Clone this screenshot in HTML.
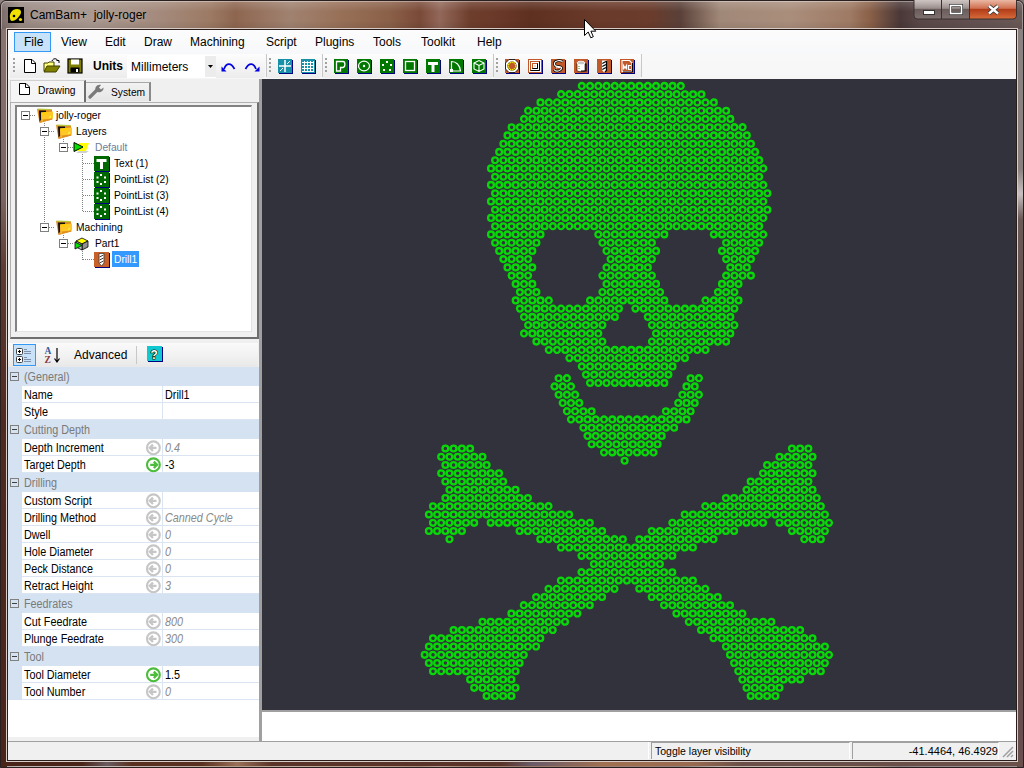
<!DOCTYPE html>
<html><head><meta charset="utf-8">
<style>
*{margin:0;padding:0;box-sizing:border-box}
html,body{width:1024px;height:768px;overflow:hidden;font-family:"Liberation Sans",sans-serif;background:#6b4a40}
.a{position:absolute}
.t{position:absolute;white-space:pre;color:#000}
.n{transform:scaleX(.89);transform-origin:0 0}
.n2{transform:scaleX(.9);transform-origin:0 0}
</style></head><body>
<!-- window frame / title bar background -->
<div class="a" style="left:0;top:0;width:1024px;height:768px;background:linear-gradient(90deg,#7a6a68 0px,#9a8a84 20px,#a89890 90px,#a48a7c 160px,#9c7a64 210px,#8e6650 235px,#a08270 290px,#987058 340px,#8a6048 390px,#7a4a38 420px,#92685a 440px,#6e3e2c 470px,#6a3828 500px,#5e3020 530px,#6a3a2a 600px,#6a3c2c 650px,#5a4038 680px,#a08878 720px,#aa8e7c 790px,#9e7a64 850px,#8a6048 870px,#4a3838 900px,#5a4848 920px,#6a5a58 1024px)"></div>
<div class="a" style="left:0;top:0;width:1024px;height:29px;background:linear-gradient(180deg,rgba(255,255,255,.18),rgba(255,255,255,0) 40%,rgba(0,0,0,0) 70%,rgba(0,0,0,.08))"></div>
<!-- outer frame edge -->
<div class="a" style="left:0;top:0;width:1024px;height:768px;border:1px solid #2a2020;border-radius:6px 6px 0 0"></div>
<div class="a" style="left:1px;top:1px;width:1022px;height:766px;border:1px solid rgba(255,255,255,.35);border-radius:5px 5px 0 0"></div>
<!-- side frames darker -->
<div class="a" style="left:1px;top:29px;width:6px;height:738px;background:linear-gradient(180deg,#8a7470 0px,#7a6460 170px,#5e3a30 240px,#4e2a20 400px,#4a2418 768px)"></div>
<div class="a" style="left:1017px;top:29px;width:6px;height:738px;background:linear-gradient(180deg,#8a8282 0px,#8a8080 140px,#c8c0c0 165px,#6a5a58 190px,#5a4444 400px,#6a5050 768px)"></div>
<div class="a" style="left:2px;top:760px;width:1020px;height:6px;background:linear-gradient(90deg,#4a2418 0px,#4a2418 80px,#6a5a60 105px,#5a3020 130px,#5a3020 200px,#9a7058 235px,#5a3428 270px,#5a3428 500px,#6a5a68 530px,#a07050 600px,#9a6a50 690px,#6a5048 740px,#6a5048 1024px)"></div>
<!-- client inner border -->
<div class="a" style="left:6px;top:28px;width:1012px;height:734px;border:1px solid #d8ccc8"></div>
<div class="a" style="left:7px;top:29px;width:1010px;height:732px;border:1px solid #2a1c18"></div>

<!-- title -->
<div class="a" style="left:8px;top:7px;width:16px;height:16px;background:#000">
 <svg width="16" height="16" viewBox="0 0 16 16"><path d="M2 11 C1 7 4 2 9 2 C13 2 14 5 12 8 C10 11 7 14 4 14 C3 14 2 13 2 11Z" fill="#f0e000"/><circle cx="6" cy="9" r="1.3" fill="#000"/><circle cx="12.5" cy="12.5" r="1.6" fill="#f0e000"/></svg>
</div>
<div class="t" style="left:30px;top:8px;font-size:12px;color:#000;text-shadow:0 0 6px rgba(255,255,255,.35)">CamBam+  jolly-roger</div>

<!-- window buttons -->
<svg class="a" style="left:913px;top:0" width="105" height="21">
 <defs>
  <linearGradient id="gb" x1="0" y1="0" x2="0" y2="1"><stop offset="0" stop-color="#cfc6c4"/><stop offset=".45" stop-color="#9a8e8c"/><stop offset=".5" stop-color="#6a5c5a"/><stop offset="1" stop-color="#7e706e"/></linearGradient>
  <linearGradient id="gc" x1="0" y1="0" x2="0" y2="1"><stop offset="0" stop-color="#eab8a4"/><stop offset=".45" stop-color="#d07050"/><stop offset=".5" stop-color="#b03c18"/><stop offset="1" stop-color="#d86a38"/></linearGradient>
 </defs>
 <path d="M0.5 0V15A4.5 4.5 0 0 0 5 19.5H99.5A4.5 4.5 0 0 0 104 15V0Z" fill="#3a3030"/>
 <path d="M1.5 0V15A3.5 3.5 0 0 0 5 18.5H28V0Z" fill="url(#gb)"/>
 <rect x="29" y="0" width="27" height="18.5" fill="url(#gb)"/>
 <path d="M57 0V18.5H99.5A3.5 3.5 0 0 0 103 15V0Z" fill="url(#gc)"/>
 <rect x="10.5" y="10.5" width="11" height="4" fill="#fff" stroke="#333"/>
 <rect x="37.5" y="5.5" width="11" height="8" fill="none" stroke="#333" stroke-width="3"/>
 <rect x="37.5" y="5.5" width="11" height="8" fill="none" stroke="#fff" stroke-width="1.6"/>
 <path d="M76 6L85 13.5M85 6L76 13.5" stroke="#333" stroke-width="4.2"/>
 <path d="M76 6L85 13.5M85 6L76 13.5" stroke="#fff" stroke-width="2.4"/>
</svg>

<!-- client area -->
<div class="a" style="left:8px;top:30px;width:1008px;height:730px;background:#f0f0f0"></div>
<!-- menu bar -->
<div class="a" style="left:8px;top:30px;width:1008px;height:24px;background:linear-gradient(180deg,#fcfcfd,#f7f8f9)"></div>
<div class="a" style="left:14px;top:32px;width:37px;height:20px;background:#c8e2fa;border:1px solid #3399f5"></div>
<div class="t" style="left:24px;top:35px;font-size:12px">File</div>
<div class="t" style="left:61px;top:35px;font-size:12px">View</div>
<div class="t" style="left:105px;top:35px;font-size:12px">Edit</div>
<div class="t" style="left:144px;top:35px;font-size:12px">Draw</div>
<div class="t" style="left:190px;top:35px;font-size:12px">Machining</div>
<div class="t" style="left:266px;top:35px;font-size:12px">Script</div>
<div class="t" style="left:315px;top:35px;font-size:12px">Plugins</div>
<div class="t" style="left:373px;top:35px;font-size:12px">Tools</div>
<div class="t" style="left:421px;top:35px;font-size:12px">Toolkit</div>
<div class="t" style="left:477px;top:35px;font-size:12px">Help</div>

<!-- TOOLBAR -->
<div class="a" style="left:8px;top:54px;width:1008px;height:25px;background:linear-gradient(180deg,#f8f8f9,#f6f6f7)"></div>
<!-- segment bgs -->
<div class="a" style="left:10px;top:54px;width:255px;height:24px;background:linear-gradient(180deg,#fdfdfd,#f3f3f3 60%,#ececec);border-radius:0 3px 3px 0"></div>
<div class="a" style="left:266px;top:54px;width:1px;height:23px;background:#c8c8c8"></div>
<div class="a" style="left:267px;top:54px;width:54px;height:24px;background:linear-gradient(180deg,#fdfdfd,#f3f3f3 60%,#ececec);border-radius:0 3px 3px 0"></div>
<div class="a" style="left:322px;top:54px;width:1px;height:23px;background:#c8c8c8"></div>
<div class="a" style="left:323px;top:54px;width:170px;height:24px;background:linear-gradient(180deg,#fdfdfd,#f3f3f3 60%,#ececec);border-radius:0 3px 3px 0"></div>
<div class="a" style="left:493px;top:54px;width:1px;height:23px;background:#c8c8c8"></div>
<div class="a" style="left:494px;top:54px;width:147px;height:24px;background:linear-gradient(180deg,#fdfdfd,#f3f3f3 60%,#ececec);border-radius:0 3px 3px 0"></div>
<div class="a" style="left:641px;top:54px;width:1px;height:23px;background:#c8c8c8"></div>
<!-- grips -->
<svg class="a" style="left:12px;top:57px" width="4" height="16"><g fill="#a0a0a0"><rect x="1" y="1" width="2" height="2"/><rect x="1" y="5" width="2" height="2"/><rect x="1" y="9" width="2" height="2"/><rect x="1" y="13" width="2" height="2"/></g></svg>
<svg class="a" style="left:268px;top:57px" width="4" height="16"><g fill="#a0a0a0"><rect x="1" y="1" width="2" height="2"/><rect x="1" y="5" width="2" height="2"/><rect x="1" y="9" width="2" height="2"/><rect x="1" y="13" width="2" height="2"/></g></svg>
<svg class="a" style="left:324px;top:57px" width="4" height="16"><g fill="#a0a0a0"><rect x="1" y="1" width="2" height="2"/><rect x="1" y="5" width="2" height="2"/><rect x="1" y="9" width="2" height="2"/><rect x="1" y="13" width="2" height="2"/></g></svg>
<svg class="a" style="left:495px;top:57px" width="4" height="16"><g fill="#a0a0a0"><rect x="1" y="1" width="2" height="2"/><rect x="1" y="5" width="2" height="2"/><rect x="1" y="9" width="2" height="2"/><rect x="1" y="13" width="2" height="2"/></g></svg>
<!-- new -->
<svg class="a" style="left:23px;top:58px" width="16" height="16"><path d="M1.5 1.5H9L12.5 5V14.5H1.5Z" fill="#fff" stroke="#000"/><path d="M8.5 1.5V5.5H12.5" fill="none" stroke="#000"/></svg>
<!-- open -->
<svg class="a" style="left:43px;top:57px" width="18" height="17"><path d="M1 6H5L6 5H11V14H1Z" fill="#ffff80" stroke="#404000"/><path d="M1 15L4 9H17L13 15Z" fill="#808000" stroke="#404000"/><path d="M9 4C10 1 14 1 15 4" fill="none" stroke="#000"/><path d="M13.5 3.5H16V6" fill="none" stroke="#000"/></svg>
<!-- save -->
<svg class="a" style="left:67px;top:58px" width="16" height="16"><rect x="1" y="1" width="14" height="14" fill="#808000" stroke="#000" stroke-width="1.2"/><rect x="4" y="1.5" width="8" height="5" fill="#fff"/><rect x="3.5" y="9.5" width="9" height="5" fill="#000"/><rect x="9" y="11" width="2" height="3" fill="#fff"/></svg>
<div class="t" style="left:93px;top:59px;font-size:12px;font-weight:bold;color:#000">Units</div>
<!-- combo -->
<div class="a" style="left:127px;top:55px;width:89px;height:23px;background:#fff"></div>
<div class="a" style="left:205px;top:56px;width:11px;height:21px;background:#ececec"></div>
<svg class="a" style="left:207px;top:64px" width="8" height="5"><path d="M1 1H6L3.5 4Z" fill="#000"/></svg>
<div class="t" style="left:131px;top:60px;font-size:12px">Millimeters</div>
<!-- undo redo -->
<svg class="a" style="left:221px;top:60px" width="16" height="12"><path d="M3 9C5.5 2.5 10 2.5 13.5 9" fill="none" stroke="#0000e0" stroke-width="1.7"/><path d="M0.5 6.5V11.5H5.5Z" fill="#0000e0"/></svg>
<svg class="a" style="left:244px;top:60px" width="16" height="12"><path d="M1.5 9C5 2.5 9.5 2.5 12 9" fill="none" stroke="#0000e0" stroke-width="1.7"/><path d="M15.5 6.5V11.5H10.5Z" fill="#0000e0"/></svg>
<!-- snap -->
<svg class="a" style="left:277px;top:58px" width="17" height="17"><rect x="2" y="2" width="14" height="14" fill="#000080"/><rect x="1" y="1" width="14" height="14" fill="#1890a8"/><path d="M8 2V14M2 8H14" stroke="#fff" stroke-width="1.5"/><path d="M10 6L13 3M6 10L3 13" stroke="#fff"/></svg>
<svg class="a" style="left:300px;top:58px" width="17" height="17"><rect x="2" y="2" width="14" height="14" fill="#000080"/><rect x="1" y="1" width="14" height="14" fill="#1890a8"/><path d="M4.5 3V14M7.5 3V14M10.5 3V14M13.5 3V14M2 4.5H14M2 7.5H14M2 10.5H14M2 13.5H14" stroke="#fff"/></svg>
<!-- green icons -->
<svg class="a" style="left:333px;top:58px" width="17" height="17"><rect x="2" y="2" width="14" height="14" fill="#000080"/><rect x="1" y="1" width="14" height="14" fill="#007800"/><path d="M3.5 3.5H10C12.5 3.5 12.5 9 10 9.5L7.5 9.5V13H3.5Z" fill="none" stroke="#fff" stroke-width="1.3"/></svg>
<svg class="a" style="left:356px;top:58px" width="17" height="17"><rect x="2" y="2" width="14" height="14" fill="#000080"/><rect x="1" y="1" width="14" height="14" fill="#007800"/><ellipse cx="8" cy="8" rx="5.5" ry="4.8" fill="none" stroke="#fff" stroke-width="1.2"/><circle cx="8" cy="8" r="1.2" fill="#fff"/></svg>
<svg class="a" style="left:379px;top:58px" width="17" height="17"><rect x="2" y="2" width="14" height="14" fill="#000080"/><rect x="1" y="1" width="14" height="14" fill="#007800"/><g fill="#fff"><rect x="7" y="3" width="2" height="2"/><rect x="3" y="6" width="2" height="2"/><rect x="11" y="6" width="2" height="2"/><rect x="4" y="11" width="2" height="2"/><rect x="10" y="11" width="2" height="2"/></g></svg>
<svg class="a" style="left:402px;top:58px" width="17" height="17"><rect x="2" y="2" width="14" height="14" fill="#000080"/><rect x="1" y="1" width="14" height="14" fill="#007800"/><rect x="3.5" y="3.5" width="9" height="9" fill="none" stroke="#fff" stroke-width="1.3"/></svg>
<svg class="a" style="left:425px;top:58px" width="17" height="17"><rect x="2" y="2" width="14" height="14" fill="#000080"/><rect x="1" y="1" width="14" height="14" fill="#007800"/><path d="M3 4H13V7H9.5V14H6.5V7H3Z" fill="#fff"/></svg>
<svg class="a" style="left:448px;top:58px" width="17" height="17"><rect x="2" y="2" width="14" height="14" fill="#000080"/><rect x="1" y="1" width="14" height="14" fill="#007800"/><path d="M3.5 13V3.5C8 3.5 12 7 12.5 13Z" fill="none" stroke="#fff" stroke-width="1.2"/><rect x="2" y="11" width="3" height="3" fill="#fff"/></svg>
<svg class="a" style="left:471px;top:58px" width="17" height="17"><rect x="2" y="2" width="14" height="14" fill="#000080"/><rect x="1" y="1" width="14" height="14" fill="#007800"/><path d="M3 5L8 2.5L13 5V11L8 13.5L3 11ZM3 5L8 7.5L13 5M8 7.5V13.5" fill="none" stroke="#fff" stroke-width="1.1"/></svg>
<!-- orange icons -->
<svg class="a" style="left:504px;top:58px" width="17" height="17"><rect x="2" y="2" width="14" height="14" fill="#000080"/><rect x="1" y="1" width="14" height="14" fill="#c0582a"/><path d="M5 1.5H11L14.5 5V11L11 14.5H5L1.5 11V5Z" fill="#fff" stroke="#000" stroke-width=".8"/><circle cx="8" cy="8" r="4.6" fill="#000"/><circle cx="8" cy="8" r="3.8" fill="#c0582a" stroke="#f8f000" stroke-width="1.3" stroke-dasharray="1.6 .5"/></svg>
<svg class="a" style="left:527px;top:58px" width="17" height="17"><rect x="2" y="2" width="14" height="14" fill="#000080"/><rect x="1" y="1" width="14" height="14" fill="#c0582a"/><rect x="2" y="2" width="12" height="12" fill="#fff"/><rect x="3.5" y="3.5" width="9" height="9" fill="none" stroke="#c0582a"/><path d="M3.5 12.5H12.5V3.5" fill="none" stroke="#000"/><rect x="5.5" y="5.5" width="5" height="5" fill="none" stroke="#c0582a"/><path d="M5.5 10.5H10.5V5.5" fill="none" stroke="#000"/><rect x="7.5" y="7.5" width="1" height="1" fill="#c0582a"/></svg>
<svg class="a" style="left:550px;top:58px" width="17" height="17"><rect x="2" y="2" width="14" height="14" fill="#000080"/><rect x="1" y="1" width="14" height="14" fill="#c0582a"/><path d="M12.5 3.5C10 2 5 2.5 4.5 5C4 8 6 8.5 9 8.5C12 8.5 12.5 11 9.5 12.5C7 13.5 5 13 4 11.5" fill="none" stroke="#000" stroke-width="2.6"/><path d="M12.5 3.5C10 2 5 2.5 4.5 5C4 8 6 8.5 9 8.5C12 8.5 12.5 11 9.5 12.5C7 13.5 5 13 4 11.5" fill="none" stroke="#fff" stroke-width="1.2"/><path d="M6 10C8 9 10 9.5 12 10" fill="none" stroke="#fff" stroke-width="1"/></svg>
<svg class="a" style="left:573px;top:58px" width="17" height="17"><rect x="2" y="2" width="14" height="14" fill="#000080"/><rect x="1" y="1" width="14" height="14" fill="#c0582a"/><path d="M4 5V12.5C4 14 12 14 12 12.5V5" fill="#fff" stroke="#000" stroke-width=".6"/><path d="M12 6H13V13H8" fill="none" stroke="#000" stroke-width="1.2"/><ellipse cx="8" cy="5" rx="4" ry="1.8" fill="#c8c8c8" stroke="#fff" stroke-width=".8"/><path d="M5 8.5H7M5 10.5H7" stroke="#a0c080" stroke-width="1"/></svg>
<svg class="a" style="left:596px;top:58px" width="17" height="17"><rect x="2" y="2" width="14" height="14" fill="#000080"/><rect x="1" y="1" width="14" height="14" fill="#c0582a"/><path d="M6 2.5H10.5V12L8.2 14.5L6 12Z" fill="#fff"/><path d="M10.5 3V12.5L9 14" fill="none" stroke="#000" stroke-width="1.2"/><path d="M6.3 5.5L10 3.5M6.3 8.5L10 6.5M6.3 11.5L10 9.5" stroke="#000" stroke-width="1.2"/></svg>
<svg class="a" style="left:619px;top:58px" width="17" height="17"><rect x="2" y="2" width="14" height="14" fill="#000080"/><rect x="1" y="1" width="14" height="14" fill="#c0582a"/><path d="M3 2.5H10.5L13 5V13.5H3Z" fill="#c0582a" stroke="#fff" stroke-width="1.1"/><path d="M13.5 5V14H4" fill="none" stroke="#000" stroke-width="1"/><path d="M4.5 11.5V7.5L6 10L7.5 7.5V11.5M12 7.5H9.5V11.5H12" fill="none" stroke="#fff" stroke-width="1.2"/></svg>


<!-- left panel -->
<!-- tabs -->
<div class="a" style="left:8px;top:79px;width:251px;height:263px;background:#f0f0f0"></div>
<div class="a" style="left:85px;top:82px;width:66px;height:19px;background:linear-gradient(180deg,#f2f2f2,#e6e6e6);border:1px solid #a8a8a8;border-bottom:none;border-right:2px solid #8a8a8a"></div>
<div class="a" style="left:10px;top:80px;width:76px;height:23px;background:#f5f5f5;border:1px solid #d0d0d0;border-bottom:none;border-right:2px solid #6e6e6e"></div>
<svg class="a" style="left:18px;top:82px" width="13" height="14"><path d="M1.5 1.5H8L11.5 5V12.5H1.5Z" fill="#fff" stroke="#000"/><path d="M7.5 1.5V5.5H11.5" fill="none" stroke="#000"/></svg>
<div class="t n" style="left:38px;top:84px;font-size:11.5px;color:#000">Drawing</div>
<svg class="a" style="left:88px;top:83px" width="18" height="16"><path d="M2 14L9 7" stroke="#7a7a7a" stroke-width="3.2" stroke-linecap="round"/><path d="M8 8C6 5 9 1 13 2L11 4.5L13 6.5L15.5 4.5C16 8 12 10 9.5 9" fill="#7a7a7a"/></svg>
<div class="t n" style="left:111px;top:86px;font-size:11.5px;color:#000">System</div>
<!-- tab page border -->
<div class="a" style="left:10px;top:102px;width:249px;height:237px;border:1px solid #b0b0b0;border-right:2px solid #6e6e6e;border-bottom:2px solid #6e6e6e;background:#f0f0f0"></div>
<!-- tree box -->
<div class="a" style="left:15px;top:105px;width:237px;height:227px;background:#fff;border-top:2px solid #828282;border-left:2px solid #828282;border-right:1px solid #e3e3e3;border-bottom:1px solid #e3e3e3"></div>
<!-- dotted lines -->
<svg class="a" style="left:17px;top:106px" width="160" height="170">
 <g stroke="#808080" stroke-dasharray="1 1" stroke-width="1" fill="none">
  <path d="M13 9.5H19"/>
  <path d="M27.5 17V119"/>
  <path d="M32 25.5H38"/><path d="M32 121.5H38"/>
  <path d="M46.5 33V38"/><path d="M46.5 129V134"/>
  <path d="M51 41.5H56"/><path d="M51 137.5H56"/>
  <path d="M65.5 48V105"/><path d="M65.5 145V154"/>
  <path d="M66 57.5H77"/><path d="M66 73.5H77"/><path d="M66 89.5H77"/><path d="M66 105.5H77"/><path d="M66 153.5H77"/>
 </g>
</svg>
<!-- expander boxes -->
<svg class="a" style="left:21px;top:111px" width="9" height="9"><rect x=".5" y=".5" width="8" height="8" fill="#fff" stroke="#808080"/><path d="M2 4.5H7" stroke="#000"/></svg>
<svg class="a" style="left:40px;top:127px" width="9" height="9"><rect x=".5" y=".5" width="8" height="8" fill="#fff" stroke="#808080"/><path d="M2 4.5H7" stroke="#000"/></svg>
<svg class="a" style="left:59px;top:143px" width="9" height="9"><rect x=".5" y=".5" width="8" height="8" fill="#fff" stroke="#808080"/><path d="M2 4.5H7" stroke="#000"/></svg>
<svg class="a" style="left:40px;top:223px" width="9" height="9"><rect x=".5" y=".5" width="8" height="8" fill="#fff" stroke="#808080"/><path d="M2 4.5H7" stroke="#000"/></svg>
<svg class="a" style="left:59px;top:239px" width="9" height="9"><rect x=".5" y=".5" width="8" height="8" fill="#fff" stroke="#808080"/><path d="M2 4.5H7" stroke="#000"/></svg>
<!-- folder icons -->
<svg class="a" style="left:36px;top:107px" width="17" height="16"><path d="M1 2L16 2.5V12.5L3.5 16Z" fill="#e08a20"/><path d="M1.5 2.2L15.5 2.6" stroke="#b8c840" stroke-width="1.2"/><path d="M3 3.5H10V5L5 5.5V13.5L3.5 14.5Z" fill="#101010"/><path d="M5 5.5L17 4.5V11.5L5.5 13Z" fill="#ffc828"/><path d="M5.5 5.8L12 5.2V7L6 8Z" fill="#ffd000"/><path d="M4.5 13L16.5 11.5V12.5L4.5 15.5Z" fill="#e09020"/><path d="M13 10L15 8.8V10.5L13 10.8Z" fill="#ffff30"/><rect x="5.5" y="13.2" width="1.2" height="1.2" fill="#ffe040"/></svg>
<svg class="a" style="left:55px;top:123px" width="17" height="16"><path d="M1 2L16 2.5V12.5L3.5 16Z" fill="#e08a20"/><path d="M1.5 2.2L15.5 2.6" stroke="#b8c840" stroke-width="1.2"/><path d="M3 3.5H10V5L5 5.5V13.5L3.5 14.5Z" fill="#101010"/><path d="M5 5.5L17 4.5V11.5L5.5 13Z" fill="#ffc828"/><path d="M5.5 5.8L12 5.2V7L6 8Z" fill="#ffd000"/><path d="M4.5 13L16.5 11.5V12.5L4.5 15.5Z" fill="#e09020"/><path d="M13 10L15 8.8V10.5L13 10.8Z" fill="#ffff30"/><rect x="5.5" y="13.2" width="1.2" height="1.2" fill="#ffe040"/></svg>
<svg class="a" style="left:55px;top:219px" width="17" height="16"><path d="M1 2L16 2.5V12.5L3.5 16Z" fill="#e08a20"/><path d="M1.5 2.2L15.5 2.6" stroke="#b8c840" stroke-width="1.2"/><path d="M3 3.5H10V5L5 5.5V13.5L3.5 14.5Z" fill="#101010"/><path d="M5 5.5L17 4.5V11.5L5.5 13Z" fill="#ffc828"/><path d="M5.5 5.8L12 5.2V7L6 8Z" fill="#ffd000"/><path d="M4.5 13L16.5 11.5V12.5L4.5 15.5Z" fill="#e09020"/><path d="M13 10L15 8.8V10.5L13 10.8Z" fill="#ffff30"/><rect x="5.5" y="13.2" width="1.2" height="1.2" fill="#ffe040"/></svg>
<!-- default layer icon -->
<svg class="a" style="left:73px;top:141px" width="17" height="13"><path d="M3 12L6 10H16L13 12Z" fill="#d0d0d0"/><path d="M6 2H16L13 10H3Z" fill="#ffff00"/><path d="M1 1.5L10 6L1 10.5Z" fill="#00e000" stroke="#000" stroke-width="1"/></svg>
<!-- T icon -->
<svg class="a" style="left:94px;top:156px" width="16" height="16"><rect x="1" y="1" width="15" height="15" fill="#000080"/><rect x="0" y="0" width="15" height="15" fill="#006800"/><path d="M2.5 3H12.5V6H9V13H6V6H2.5Z" fill="#fff"/></svg>
<!-- pointlist icons -->
<svg class="a" style="left:94px;top:172px" width="16" height="16"><rect x="1" y="1" width="15" height="15" fill="#000080"/><rect x="0" y="0" width="15" height="15" fill="#006800"/><g fill="#fff"><rect x="6" y="2" width="2" height="2"/><rect x="2.5" y="4.5" width="2" height="2"/><rect x="10" y="4.5" width="2" height="2"/><rect x="2.5" y="9" width="2" height="2"/><rect x="10" y="9" width="2" height="2"/><rect x="6" y="11" width="2" height="2"/></g></svg>
<svg class="a" style="left:94px;top:188px" width="16" height="16"><rect x="1" y="1" width="15" height="15" fill="#000080"/><rect x="0" y="0" width="15" height="15" fill="#006800"/><g fill="#fff"><rect x="6" y="2" width="2" height="2"/><rect x="2.5" y="4.5" width="2" height="2"/><rect x="10" y="4.5" width="2" height="2"/><rect x="2.5" y="9" width="2" height="2"/><rect x="10" y="9" width="2" height="2"/><rect x="6" y="11" width="2" height="2"/></g></svg>
<svg class="a" style="left:94px;top:204px" width="16" height="16"><rect x="1" y="1" width="15" height="15" fill="#000080"/><rect x="0" y="0" width="15" height="15" fill="#006800"/><g fill="#fff"><rect x="6" y="2" width="2" height="2"/><rect x="2.5" y="4.5" width="2" height="2"/><rect x="10" y="4.5" width="2" height="2"/><rect x="2.5" y="9" width="2" height="2"/><rect x="10" y="9" width="2" height="2"/><rect x="6" y="11" width="2" height="2"/></g></svg>
<!-- part icon -->
<svg class="a" style="left:74px;top:236px" width="16" height="15"><path d="M2 5L8 2L14 5L8 8Z" fill="#ffff00" stroke="#000" stroke-width=".8"/><path d="M8 8L14 5V11L8 14Z" fill="#909090" stroke="#000" stroke-width=".8"/><path d="M2 5L8 8V14L2 11Z" fill="#c0c0c0" stroke="#000" stroke-width=".8"/><path d="M1 6L8 9.5L1 13Z" fill="#00e000" stroke="#000" stroke-width=".8"/></svg>
<!-- drill icon -->
<svg class="a" style="left:94px;top:252px" width="16" height="16"><rect x="1" y="1" width="15" height="15" fill="#000080"/><rect x="0" y="0" width="15" height="15" fill="#c8602a"/><path d="M5 1.5H10V11L7.5 14L5 11Z" fill="#fff" stroke="#404040" stroke-width=".8"/><path d="M5.5 5L9.5 3M5.5 8L9.5 6M5.5 11L9.5 9" stroke="#404040" stroke-width="1"/></svg>
<!-- tree labels -->
<div class="t n" style="left:56px;top:109px;font-size:11.5px">jolly-roger</div>
<div class="t n" style="left:76px;top:125px;font-size:11.5px">Layers</div>
<div class="t n" style="left:95px;top:141px;font-size:11.5px;color:#6d7d98">Default</div>
<div class="t n" style="left:114px;top:157px;font-size:11.5px">Text (1)</div>
<div class="t n" style="left:114px;top:173px;font-size:11.5px">PointList (2)</div>
<div class="t n" style="left:114px;top:189px;font-size:11.5px">PointList (3)</div>
<div class="t n" style="left:114px;top:205px;font-size:11.5px">PointList (4)</div>
<div class="t n" style="left:76px;top:221px;font-size:11.5px">Machining</div>
<div class="t n" style="left:95px;top:237px;font-size:11.5px">Part1</div>
<div class="a" style="left:112px;top:251px;width:27px;height:16px;background:#3399ff"></div>
<div class="t n" style="left:114px;top:253px;font-size:11.5px;color:#fff">Drill1</div>

<!-- splitter bg -->
<div class="a" style="left:8px;top:339px;width:251px;height:4px;background:#f0f0f0"></div>
<!-- properties toolbar -->
<div class="a" style="left:8px;top:343px;width:250px;height:24px;background:linear-gradient(180deg,#fafafa,#f2f2f2 50%,#e8e8e8)"></div>
<div class="a" style="left:13px;top:344px;width:23px;height:22px;background:#c8e2fa;border:1px solid #3399f5"></div>
<svg class="a" style="left:15px;top:346px" width="18" height="18"><g fill="#fff" stroke="#404040" stroke-width="1"><rect x="1.5" y="2.5" width="6" height="6" rx="1"/><rect x="1.5" y="10.5" width="6" height="6" rx="1"/></g><path d="M3 5.5H6M4.5 4V7M3 13.5H6M4.5 12V15" stroke="#000" stroke-width="1"/><g stroke="#8090a8" stroke-width="1"><path d="M9 3.5H12M9 5.5H16M9 7.5H16M9 11.5H12M9 13.5H16M9 15.5H16"/></g></svg>
<svg class="a" style="left:44px;top:345px" width="18" height="20"><text x="0.5" y="9" font-size="9.5" font-weight="bold" font-family="Liberation Serif" fill="#3a5a9a">A</text><text x="0.5" y="18" font-size="9.5" font-weight="bold" font-family="Liberation Serif" fill="#8a3a3a">Z</text><path d="M13 3V16M10.5 13.5L13 17L15.5 13.5" stroke="#000" fill="none" stroke-width="1.2"/></svg>
<div class="t" style="left:74px;top:348px;font-size:12px">Advanced</div>
<div class="a" style="left:136px;top:346px;width:1px;height:18px;background:#c8c8c8"></div>
<svg class="a" style="left:147px;top:346px" width="16" height="16"><rect x="1" y="1" width="15" height="15" fill="#000080"/><rect x="0" y="0" width="15" height="15" fill="#10c8d0"/><text x="3.5" y="12.5" font-size="12" font-weight="bold" font-family="Liberation Sans" fill="#fff" stroke="#000" stroke-width="1.2" paint-order="stroke">?</text></svg>

<!-- property grid -->
<div class="a" style="left:8px;top:367px;width:251px;height:370px;background:#fff"></div>
<div class="a" style="left:8px;top:367px;width:14px;height:333px;background:#d5e2f1"></div>
<div class="a" style="left:8px;top:367px;width:251px;height:19px;background:#d5e2f1"></div>
<svg class="a" style="left:10px;top:372px" width="9" height="9"><rect x=".5" y=".5" width="8" height="8" fill="none" stroke="#808080"/><path d="M2 4.5H7" stroke="#404040"/></svg>
<div class="t n2" style="left:24px;top:370px;font-size:12px;color:#7a7a7a">(General)</div>
<div class="a" style="left:22px;top:402px;width:237px;height:1px;background:#dbe5f2"></div>
<div class="a" style="left:162px;top:386px;width:1px;height:16px;background:#dbe5f2"></div>
<div class="t n2" style="left:24px;top:388px;font-size:12px">Name</div>
<div class="t n2" style="left:165px;top:388px;font-size:12px;color:#000">Drill1</div>
<div class="a" style="left:22px;top:419px;width:237px;height:1px;background:#dbe5f2"></div>
<div class="a" style="left:162px;top:403px;width:1px;height:16px;background:#dbe5f2"></div>
<div class="t n2" style="left:24px;top:405px;font-size:12px">Style</div>
<div class="a" style="left:8px;top:420px;width:251px;height:19px;background:#d5e2f1"></div>
<svg class="a" style="left:10px;top:425px" width="9" height="9"><rect x=".5" y=".5" width="8" height="8" fill="none" stroke="#808080"/><path d="M2 4.5H7" stroke="#404040"/></svg>
<div class="t n2" style="left:24px;top:423px;font-size:12px;color:#7a7a7a">Cutting Depth</div>
<div class="a" style="left:22px;top:455px;width:237px;height:1px;background:#dbe5f2"></div>
<div class="a" style="left:162px;top:439px;width:1px;height:16px;background:#dbe5f2"></div>
<div class="t n2" style="left:24px;top:441px;font-size:12px">Depth Increment</div>
<svg class="a" style="left:145px;top:439px" width="17" height="17"><circle cx="8.4" cy="8.8" r="6.4" fill="#fff" stroke="#c6c6c6" stroke-width="2.1"/><path d="M5 8.8H11.5M8 5.6L4.8 8.8L8 12" fill="none" stroke="#c6c6c6" stroke-width="2.3"/></svg>
<div class="t n2" style="left:165px;top:441px;font-size:12px;font-style:italic;color:#8a8a8a">0.4</div>
<div class="a" style="left:22px;top:472px;width:237px;height:1px;background:#dbe5f2"></div>
<div class="a" style="left:162px;top:456px;width:1px;height:16px;background:#dbe5f2"></div>
<div class="t n2" style="left:24px;top:458px;font-size:12px">Target Depth</div>
<svg class="a" style="left:145px;top:456px" width="17" height="17"><circle cx="8.4" cy="8.8" r="6.4" fill="#fff" stroke="#4cbc3c" stroke-width="2.1"/><path d="M5.2 8.8H11.6M8.8 5.6L12 8.8L8.8 12" fill="none" stroke="#4cbc3c" stroke-width="2.3"/></svg>
<div class="t n2" style="left:165px;top:458px;font-size:12px;color:#000">-3</div>
<div class="a" style="left:8px;top:473px;width:251px;height:19px;background:#d5e2f1"></div>
<svg class="a" style="left:10px;top:478px" width="9" height="9"><rect x=".5" y=".5" width="8" height="8" fill="none" stroke="#808080"/><path d="M2 4.5H7" stroke="#404040"/></svg>
<div class="t n2" style="left:24px;top:476px;font-size:12px;color:#7a7a7a">Drilling</div>
<div class="a" style="left:22px;top:508px;width:237px;height:1px;background:#dbe5f2"></div>
<div class="a" style="left:162px;top:492px;width:1px;height:16px;background:#dbe5f2"></div>
<div class="t n2" style="left:24px;top:494px;font-size:12px">Custom Script</div>
<svg class="a" style="left:145px;top:492px" width="17" height="17"><circle cx="8.4" cy="8.8" r="6.4" fill="#fff" stroke="#c6c6c6" stroke-width="2.1"/><path d="M5 8.8H11.5M8 5.6L4.8 8.8L8 12" fill="none" stroke="#c6c6c6" stroke-width="2.3"/></svg>
<div class="a" style="left:22px;top:525px;width:237px;height:1px;background:#dbe5f2"></div>
<div class="a" style="left:162px;top:509px;width:1px;height:16px;background:#dbe5f2"></div>
<div class="t n2" style="left:24px;top:511px;font-size:12px">Drilling Method</div>
<svg class="a" style="left:145px;top:509px" width="17" height="17"><circle cx="8.4" cy="8.8" r="6.4" fill="#fff" stroke="#c6c6c6" stroke-width="2.1"/><path d="M5 8.8H11.5M8 5.6L4.8 8.8L8 12" fill="none" stroke="#c6c6c6" stroke-width="2.3"/></svg>
<div class="t n2" style="left:165px;top:511px;font-size:12px;font-style:italic;color:#8a8a8a">Canned Cycle</div>
<div class="a" style="left:22px;top:542px;width:237px;height:1px;background:#dbe5f2"></div>
<div class="a" style="left:162px;top:526px;width:1px;height:16px;background:#dbe5f2"></div>
<div class="t n2" style="left:24px;top:528px;font-size:12px">Dwell</div>
<svg class="a" style="left:145px;top:526px" width="17" height="17"><circle cx="8.4" cy="8.8" r="6.4" fill="#fff" stroke="#c6c6c6" stroke-width="2.1"/><path d="M5 8.8H11.5M8 5.6L4.8 8.8L8 12" fill="none" stroke="#c6c6c6" stroke-width="2.3"/></svg>
<div class="t n2" style="left:165px;top:528px;font-size:12px;font-style:italic;color:#8a8a8a">0</div>
<div class="a" style="left:22px;top:559px;width:237px;height:1px;background:#dbe5f2"></div>
<div class="a" style="left:162px;top:543px;width:1px;height:16px;background:#dbe5f2"></div>
<div class="t n2" style="left:24px;top:545px;font-size:12px">Hole Diameter</div>
<svg class="a" style="left:145px;top:543px" width="17" height="17"><circle cx="8.4" cy="8.8" r="6.4" fill="#fff" stroke="#c6c6c6" stroke-width="2.1"/><path d="M5 8.8H11.5M8 5.6L4.8 8.8L8 12" fill="none" stroke="#c6c6c6" stroke-width="2.3"/></svg>
<div class="t n2" style="left:165px;top:545px;font-size:12px;font-style:italic;color:#8a8a8a">0</div>
<div class="a" style="left:22px;top:576px;width:237px;height:1px;background:#dbe5f2"></div>
<div class="a" style="left:162px;top:560px;width:1px;height:16px;background:#dbe5f2"></div>
<div class="t n2" style="left:24px;top:562px;font-size:12px">Peck Distance</div>
<svg class="a" style="left:145px;top:560px" width="17" height="17"><circle cx="8.4" cy="8.8" r="6.4" fill="#fff" stroke="#c6c6c6" stroke-width="2.1"/><path d="M5 8.8H11.5M8 5.6L4.8 8.8L8 12" fill="none" stroke="#c6c6c6" stroke-width="2.3"/></svg>
<div class="t n2" style="left:165px;top:562px;font-size:12px;font-style:italic;color:#8a8a8a">0</div>
<div class="a" style="left:22px;top:593px;width:237px;height:1px;background:#dbe5f2"></div>
<div class="a" style="left:162px;top:577px;width:1px;height:16px;background:#dbe5f2"></div>
<div class="t n2" style="left:24px;top:579px;font-size:12px">Retract Height</div>
<svg class="a" style="left:145px;top:577px" width="17" height="17"><circle cx="8.4" cy="8.8" r="6.4" fill="#fff" stroke="#c6c6c6" stroke-width="2.1"/><path d="M5 8.8H11.5M8 5.6L4.8 8.8L8 12" fill="none" stroke="#c6c6c6" stroke-width="2.3"/></svg>
<div class="t n2" style="left:165px;top:579px;font-size:12px;font-style:italic;color:#8a8a8a">3</div>
<div class="a" style="left:8px;top:594px;width:251px;height:19px;background:#d5e2f1"></div>
<svg class="a" style="left:10px;top:599px" width="9" height="9"><rect x=".5" y=".5" width="8" height="8" fill="none" stroke="#808080"/><path d="M2 4.5H7" stroke="#404040"/></svg>
<div class="t n2" style="left:24px;top:597px;font-size:12px;color:#7a7a7a">Feedrates</div>
<div class="a" style="left:22px;top:629px;width:237px;height:1px;background:#dbe5f2"></div>
<div class="a" style="left:162px;top:613px;width:1px;height:16px;background:#dbe5f2"></div>
<div class="t n2" style="left:24px;top:615px;font-size:12px">Cut Feedrate</div>
<svg class="a" style="left:145px;top:613px" width="17" height="17"><circle cx="8.4" cy="8.8" r="6.4" fill="#fff" stroke="#c6c6c6" stroke-width="2.1"/><path d="M5 8.8H11.5M8 5.6L4.8 8.8L8 12" fill="none" stroke="#c6c6c6" stroke-width="2.3"/></svg>
<div class="t n2" style="left:165px;top:615px;font-size:12px;font-style:italic;color:#8a8a8a">800</div>
<div class="a" style="left:22px;top:646px;width:237px;height:1px;background:#dbe5f2"></div>
<div class="a" style="left:162px;top:630px;width:1px;height:16px;background:#dbe5f2"></div>
<div class="t n2" style="left:24px;top:632px;font-size:12px">Plunge Feedrate</div>
<svg class="a" style="left:145px;top:630px" width="17" height="17"><circle cx="8.4" cy="8.8" r="6.4" fill="#fff" stroke="#c6c6c6" stroke-width="2.1"/><path d="M5 8.8H11.5M8 5.6L4.8 8.8L8 12" fill="none" stroke="#c6c6c6" stroke-width="2.3"/></svg>
<div class="t n2" style="left:165px;top:632px;font-size:12px;font-style:italic;color:#8a8a8a">300</div>
<div class="a" style="left:8px;top:647px;width:251px;height:19px;background:#d5e2f1"></div>
<svg class="a" style="left:10px;top:652px" width="9" height="9"><rect x=".5" y=".5" width="8" height="8" fill="none" stroke="#808080"/><path d="M2 4.5H7" stroke="#404040"/></svg>
<div class="t n2" style="left:24px;top:650px;font-size:12px;color:#7a7a7a">Tool</div>
<div class="a" style="left:22px;top:682px;width:237px;height:1px;background:#dbe5f2"></div>
<div class="a" style="left:162px;top:666px;width:1px;height:16px;background:#dbe5f2"></div>
<div class="t n2" style="left:24px;top:668px;font-size:12px">Tool Diameter</div>
<svg class="a" style="left:145px;top:666px" width="17" height="17"><circle cx="8.4" cy="8.8" r="6.4" fill="#fff" stroke="#4cbc3c" stroke-width="2.1"/><path d="M5.2 8.8H11.6M8.8 5.6L12 8.8L8.8 12" fill="none" stroke="#4cbc3c" stroke-width="2.3"/></svg>
<div class="t n2" style="left:165px;top:668px;font-size:12px;color:#000">1.5</div>
<div class="a" style="left:22px;top:699px;width:237px;height:1px;background:#dbe5f2"></div>
<div class="a" style="left:162px;top:683px;width:1px;height:16px;background:#dbe5f2"></div>
<div class="t n2" style="left:24px;top:685px;font-size:12px">Tool Number</div>
<svg class="a" style="left:145px;top:683px" width="17" height="17"><circle cx="8.4" cy="8.8" r="6.4" fill="#fff" stroke="#c6c6c6" stroke-width="2.1"/><path d="M5 8.8H11.5M8 5.6L4.8 8.8L8 12" fill="none" stroke="#c6c6c6" stroke-width="2.3"/></svg>
<div class="t n2" style="left:165px;top:685px;font-size:12px;font-style:italic;color:#8a8a8a">0</div>
<div class="a" style="left:8px;top:737px;width:251px;height:4px;background:#f0f0f0"></div>


<!-- drawing area -->
<div class="a" style="left:259px;top:79px;width:3px;height:663px;background:#a0a0a0"></div>
<div class="a" style="left:262px;top:79px;width:754px;height:631px;background:#32323c;overflow:hidden">
<svg class="a" style="left:0;top:0" width="754" height="631"><path d="M316.9 6.9a2.9 2.9 0 1 0 5.8 0a2.9 2.9 0 1 0 -5.8 0M325.1 6.9a2.9 2.9 0 1 0 5.8 0a2.9 2.9 0 1 0 -5.8 0M333.4 6.9a2.9 2.9 0 1 0 5.8 0a2.9 2.9 0 1 0 -5.8 0M341.6 6.9a2.9 2.9 0 1 0 5.8 0a2.9 2.9 0 1 0 -5.8 0M349.9 6.9a2.9 2.9 0 1 0 5.8 0a2.9 2.9 0 1 0 -5.8 0M358.1 6.9a2.9 2.9 0 1 0 5.8 0a2.9 2.9 0 1 0 -5.8 0M366.4 6.9a2.9 2.9 0 1 0 5.8 0a2.9 2.9 0 1 0 -5.8 0M374.6 6.9a2.9 2.9 0 1 0 5.8 0a2.9 2.9 0 1 0 -5.8 0M382.9 6.9a2.9 2.9 0 1 0 5.8 0a2.9 2.9 0 1 0 -5.8 0M391.1 6.9a2.9 2.9 0 1 0 5.8 0a2.9 2.9 0 1 0 -5.8 0M399.4 6.9a2.9 2.9 0 1 0 5.8 0a2.9 2.9 0 1 0 -5.8 0M407.6 6.9a2.9 2.9 0 1 0 5.8 0a2.9 2.9 0 1 0 -5.8 0M415.9 6.9a2.9 2.9 0 1 0 5.8 0a2.9 2.9 0 1 0 -5.8 0M296.2 15.2a2.9 2.9 0 1 0 5.8 0a2.9 2.9 0 1 0 -5.8 0M304.5 15.2a2.9 2.9 0 1 0 5.8 0a2.9 2.9 0 1 0 -5.8 0M312.7 15.2a2.9 2.9 0 1 0 5.8 0a2.9 2.9 0 1 0 -5.8 0M321.0 15.2a2.9 2.9 0 1 0 5.8 0a2.9 2.9 0 1 0 -5.8 0M329.2 15.2a2.9 2.9 0 1 0 5.8 0a2.9 2.9 0 1 0 -5.8 0M337.5 15.2a2.9 2.9 0 1 0 5.8 0a2.9 2.9 0 1 0 -5.8 0M345.7 15.2a2.9 2.9 0 1 0 5.8 0a2.9 2.9 0 1 0 -5.8 0M354.0 15.2a2.9 2.9 0 1 0 5.8 0a2.9 2.9 0 1 0 -5.8 0M362.2 15.2a2.9 2.9 0 1 0 5.8 0a2.9 2.9 0 1 0 -5.8 0M370.5 15.2a2.9 2.9 0 1 0 5.8 0a2.9 2.9 0 1 0 -5.8 0M378.7 15.2a2.9 2.9 0 1 0 5.8 0a2.9 2.9 0 1 0 -5.8 0M387.0 15.2a2.9 2.9 0 1 0 5.8 0a2.9 2.9 0 1 0 -5.8 0M395.2 15.2a2.9 2.9 0 1 0 5.8 0a2.9 2.9 0 1 0 -5.8 0M403.5 15.2a2.9 2.9 0 1 0 5.8 0a2.9 2.9 0 1 0 -5.8 0M411.7 15.2a2.9 2.9 0 1 0 5.8 0a2.9 2.9 0 1 0 -5.8 0M420.0 15.2a2.9 2.9 0 1 0 5.8 0a2.9 2.9 0 1 0 -5.8 0M428.2 15.2a2.9 2.9 0 1 0 5.8 0a2.9 2.9 0 1 0 -5.8 0M436.5 15.2a2.9 2.9 0 1 0 5.8 0a2.9 2.9 0 1 0 -5.8 0M275.6 23.4a2.9 2.9 0 1 0 5.8 0a2.9 2.9 0 1 0 -5.8 0M283.9 23.4a2.9 2.9 0 1 0 5.8 0a2.9 2.9 0 1 0 -5.8 0M292.1 23.4a2.9 2.9 0 1 0 5.8 0a2.9 2.9 0 1 0 -5.8 0M300.4 23.4a2.9 2.9 0 1 0 5.8 0a2.9 2.9 0 1 0 -5.8 0M308.6 23.4a2.9 2.9 0 1 0 5.8 0a2.9 2.9 0 1 0 -5.8 0M316.9 23.4a2.9 2.9 0 1 0 5.8 0a2.9 2.9 0 1 0 -5.8 0M325.1 23.4a2.9 2.9 0 1 0 5.8 0a2.9 2.9 0 1 0 -5.8 0M333.4 23.4a2.9 2.9 0 1 0 5.8 0a2.9 2.9 0 1 0 -5.8 0M341.6 23.4a2.9 2.9 0 1 0 5.8 0a2.9 2.9 0 1 0 -5.8 0M349.9 23.4a2.9 2.9 0 1 0 5.8 0a2.9 2.9 0 1 0 -5.8 0M358.1 23.4a2.9 2.9 0 1 0 5.8 0a2.9 2.9 0 1 0 -5.8 0M366.4 23.4a2.9 2.9 0 1 0 5.8 0a2.9 2.9 0 1 0 -5.8 0M374.6 23.4a2.9 2.9 0 1 0 5.8 0a2.9 2.9 0 1 0 -5.8 0M382.9 23.4a2.9 2.9 0 1 0 5.8 0a2.9 2.9 0 1 0 -5.8 0M391.1 23.4a2.9 2.9 0 1 0 5.8 0a2.9 2.9 0 1 0 -5.8 0M399.4 23.4a2.9 2.9 0 1 0 5.8 0a2.9 2.9 0 1 0 -5.8 0M407.6 23.4a2.9 2.9 0 1 0 5.8 0a2.9 2.9 0 1 0 -5.8 0M415.9 23.4a2.9 2.9 0 1 0 5.8 0a2.9 2.9 0 1 0 -5.8 0M424.1 23.4a2.9 2.9 0 1 0 5.8 0a2.9 2.9 0 1 0 -5.8 0M432.4 23.4a2.9 2.9 0 1 0 5.8 0a2.9 2.9 0 1 0 -5.8 0M440.6 23.4a2.9 2.9 0 1 0 5.8 0a2.9 2.9 0 1 0 -5.8 0M448.9 23.4a2.9 2.9 0 1 0 5.8 0a2.9 2.9 0 1 0 -5.8 0M263.2 31.7a2.9 2.9 0 1 0 5.8 0a2.9 2.9 0 1 0 -5.8 0M271.5 31.7a2.9 2.9 0 1 0 5.8 0a2.9 2.9 0 1 0 -5.8 0M279.7 31.7a2.9 2.9 0 1 0 5.8 0a2.9 2.9 0 1 0 -5.8 0M288.0 31.7a2.9 2.9 0 1 0 5.8 0a2.9 2.9 0 1 0 -5.8 0M296.2 31.7a2.9 2.9 0 1 0 5.8 0a2.9 2.9 0 1 0 -5.8 0M304.5 31.7a2.9 2.9 0 1 0 5.8 0a2.9 2.9 0 1 0 -5.8 0M312.7 31.7a2.9 2.9 0 1 0 5.8 0a2.9 2.9 0 1 0 -5.8 0M321.0 31.7a2.9 2.9 0 1 0 5.8 0a2.9 2.9 0 1 0 -5.8 0M329.2 31.7a2.9 2.9 0 1 0 5.8 0a2.9 2.9 0 1 0 -5.8 0M337.5 31.7a2.9 2.9 0 1 0 5.8 0a2.9 2.9 0 1 0 -5.8 0M345.7 31.7a2.9 2.9 0 1 0 5.8 0a2.9 2.9 0 1 0 -5.8 0M354.0 31.7a2.9 2.9 0 1 0 5.8 0a2.9 2.9 0 1 0 -5.8 0M362.2 31.7a2.9 2.9 0 1 0 5.8 0a2.9 2.9 0 1 0 -5.8 0M370.5 31.7a2.9 2.9 0 1 0 5.8 0a2.9 2.9 0 1 0 -5.8 0M378.7 31.7a2.9 2.9 0 1 0 5.8 0a2.9 2.9 0 1 0 -5.8 0M387.0 31.7a2.9 2.9 0 1 0 5.8 0a2.9 2.9 0 1 0 -5.8 0M395.2 31.7a2.9 2.9 0 1 0 5.8 0a2.9 2.9 0 1 0 -5.8 0M403.5 31.7a2.9 2.9 0 1 0 5.8 0a2.9 2.9 0 1 0 -5.8 0M411.7 31.7a2.9 2.9 0 1 0 5.8 0a2.9 2.9 0 1 0 -5.8 0M420.0 31.7a2.9 2.9 0 1 0 5.8 0a2.9 2.9 0 1 0 -5.8 0M428.2 31.7a2.9 2.9 0 1 0 5.8 0a2.9 2.9 0 1 0 -5.8 0M436.5 31.7a2.9 2.9 0 1 0 5.8 0a2.9 2.9 0 1 0 -5.8 0M444.7 31.7a2.9 2.9 0 1 0 5.8 0a2.9 2.9 0 1 0 -5.8 0M453.0 31.7a2.9 2.9 0 1 0 5.8 0a2.9 2.9 0 1 0 -5.8 0M461.2 31.7a2.9 2.9 0 1 0 5.8 0a2.9 2.9 0 1 0 -5.8 0M259.1 39.9a2.9 2.9 0 1 0 5.8 0a2.9 2.9 0 1 0 -5.8 0M267.4 39.9a2.9 2.9 0 1 0 5.8 0a2.9 2.9 0 1 0 -5.8 0M275.6 39.9a2.9 2.9 0 1 0 5.8 0a2.9 2.9 0 1 0 -5.8 0M283.9 39.9a2.9 2.9 0 1 0 5.8 0a2.9 2.9 0 1 0 -5.8 0M292.1 39.9a2.9 2.9 0 1 0 5.8 0a2.9 2.9 0 1 0 -5.8 0M300.4 39.9a2.9 2.9 0 1 0 5.8 0a2.9 2.9 0 1 0 -5.8 0M308.6 39.9a2.9 2.9 0 1 0 5.8 0a2.9 2.9 0 1 0 -5.8 0M316.9 39.9a2.9 2.9 0 1 0 5.8 0a2.9 2.9 0 1 0 -5.8 0M325.1 39.9a2.9 2.9 0 1 0 5.8 0a2.9 2.9 0 1 0 -5.8 0M333.4 39.9a2.9 2.9 0 1 0 5.8 0a2.9 2.9 0 1 0 -5.8 0M341.6 39.9a2.9 2.9 0 1 0 5.8 0a2.9 2.9 0 1 0 -5.8 0M349.9 39.9a2.9 2.9 0 1 0 5.8 0a2.9 2.9 0 1 0 -5.8 0M358.1 39.9a2.9 2.9 0 1 0 5.8 0a2.9 2.9 0 1 0 -5.8 0M366.4 39.9a2.9 2.9 0 1 0 5.8 0a2.9 2.9 0 1 0 -5.8 0M374.6 39.9a2.9 2.9 0 1 0 5.8 0a2.9 2.9 0 1 0 -5.8 0M382.9 39.9a2.9 2.9 0 1 0 5.8 0a2.9 2.9 0 1 0 -5.8 0M391.1 39.9a2.9 2.9 0 1 0 5.8 0a2.9 2.9 0 1 0 -5.8 0M399.4 39.9a2.9 2.9 0 1 0 5.8 0a2.9 2.9 0 1 0 -5.8 0M407.6 39.9a2.9 2.9 0 1 0 5.8 0a2.9 2.9 0 1 0 -5.8 0M415.9 39.9a2.9 2.9 0 1 0 5.8 0a2.9 2.9 0 1 0 -5.8 0M424.1 39.9a2.9 2.9 0 1 0 5.8 0a2.9 2.9 0 1 0 -5.8 0M432.4 39.9a2.9 2.9 0 1 0 5.8 0a2.9 2.9 0 1 0 -5.8 0M440.6 39.9a2.9 2.9 0 1 0 5.8 0a2.9 2.9 0 1 0 -5.8 0M448.9 39.9a2.9 2.9 0 1 0 5.8 0a2.9 2.9 0 1 0 -5.8 0M457.1 39.9a2.9 2.9 0 1 0 5.8 0a2.9 2.9 0 1 0 -5.8 0M465.4 39.9a2.9 2.9 0 1 0 5.8 0a2.9 2.9 0 1 0 -5.8 0M246.7 48.2a2.9 2.9 0 1 0 5.8 0a2.9 2.9 0 1 0 -5.8 0M255.0 48.2a2.9 2.9 0 1 0 5.8 0a2.9 2.9 0 1 0 -5.8 0M263.2 48.2a2.9 2.9 0 1 0 5.8 0a2.9 2.9 0 1 0 -5.8 0M271.5 48.2a2.9 2.9 0 1 0 5.8 0a2.9 2.9 0 1 0 -5.8 0M279.7 48.2a2.9 2.9 0 1 0 5.8 0a2.9 2.9 0 1 0 -5.8 0M288.0 48.2a2.9 2.9 0 1 0 5.8 0a2.9 2.9 0 1 0 -5.8 0M296.2 48.2a2.9 2.9 0 1 0 5.8 0a2.9 2.9 0 1 0 -5.8 0M304.5 48.2a2.9 2.9 0 1 0 5.8 0a2.9 2.9 0 1 0 -5.8 0M312.7 48.2a2.9 2.9 0 1 0 5.8 0a2.9 2.9 0 1 0 -5.8 0M321.0 48.2a2.9 2.9 0 1 0 5.8 0a2.9 2.9 0 1 0 -5.8 0M329.2 48.2a2.9 2.9 0 1 0 5.8 0a2.9 2.9 0 1 0 -5.8 0M337.5 48.2a2.9 2.9 0 1 0 5.8 0a2.9 2.9 0 1 0 -5.8 0M345.7 48.2a2.9 2.9 0 1 0 5.8 0a2.9 2.9 0 1 0 -5.8 0M354.0 48.2a2.9 2.9 0 1 0 5.8 0a2.9 2.9 0 1 0 -5.8 0M362.2 48.2a2.9 2.9 0 1 0 5.8 0a2.9 2.9 0 1 0 -5.8 0M370.5 48.2a2.9 2.9 0 1 0 5.8 0a2.9 2.9 0 1 0 -5.8 0M378.7 48.2a2.9 2.9 0 1 0 5.8 0a2.9 2.9 0 1 0 -5.8 0M387.0 48.2a2.9 2.9 0 1 0 5.8 0a2.9 2.9 0 1 0 -5.8 0M395.2 48.2a2.9 2.9 0 1 0 5.8 0a2.9 2.9 0 1 0 -5.8 0M403.5 48.2a2.9 2.9 0 1 0 5.8 0a2.9 2.9 0 1 0 -5.8 0M411.7 48.2a2.9 2.9 0 1 0 5.8 0a2.9 2.9 0 1 0 -5.8 0M420.0 48.2a2.9 2.9 0 1 0 5.8 0a2.9 2.9 0 1 0 -5.8 0M428.2 48.2a2.9 2.9 0 1 0 5.8 0a2.9 2.9 0 1 0 -5.8 0M436.5 48.2a2.9 2.9 0 1 0 5.8 0a2.9 2.9 0 1 0 -5.8 0M444.7 48.2a2.9 2.9 0 1 0 5.8 0a2.9 2.9 0 1 0 -5.8 0M453.0 48.2a2.9 2.9 0 1 0 5.8 0a2.9 2.9 0 1 0 -5.8 0M461.2 48.2a2.9 2.9 0 1 0 5.8 0a2.9 2.9 0 1 0 -5.8 0M469.5 48.2a2.9 2.9 0 1 0 5.8 0a2.9 2.9 0 1 0 -5.8 0M477.7 48.2a2.9 2.9 0 1 0 5.8 0a2.9 2.9 0 1 0 -5.8 0M242.6 56.4a2.9 2.9 0 1 0 5.8 0a2.9 2.9 0 1 0 -5.8 0M250.8 56.4a2.9 2.9 0 1 0 5.8 0a2.9 2.9 0 1 0 -5.8 0M259.1 56.4a2.9 2.9 0 1 0 5.8 0a2.9 2.9 0 1 0 -5.8 0M267.4 56.4a2.9 2.9 0 1 0 5.8 0a2.9 2.9 0 1 0 -5.8 0M275.6 56.4a2.9 2.9 0 1 0 5.8 0a2.9 2.9 0 1 0 -5.8 0M283.9 56.4a2.9 2.9 0 1 0 5.8 0a2.9 2.9 0 1 0 -5.8 0M292.1 56.4a2.9 2.9 0 1 0 5.8 0a2.9 2.9 0 1 0 -5.8 0M300.4 56.4a2.9 2.9 0 1 0 5.8 0a2.9 2.9 0 1 0 -5.8 0M308.6 56.4a2.9 2.9 0 1 0 5.8 0a2.9 2.9 0 1 0 -5.8 0M316.9 56.4a2.9 2.9 0 1 0 5.8 0a2.9 2.9 0 1 0 -5.8 0M325.1 56.4a2.9 2.9 0 1 0 5.8 0a2.9 2.9 0 1 0 -5.8 0M333.4 56.4a2.9 2.9 0 1 0 5.8 0a2.9 2.9 0 1 0 -5.8 0M341.6 56.4a2.9 2.9 0 1 0 5.8 0a2.9 2.9 0 1 0 -5.8 0M349.9 56.4a2.9 2.9 0 1 0 5.8 0a2.9 2.9 0 1 0 -5.8 0M358.1 56.4a2.9 2.9 0 1 0 5.8 0a2.9 2.9 0 1 0 -5.8 0M366.4 56.4a2.9 2.9 0 1 0 5.8 0a2.9 2.9 0 1 0 -5.8 0M374.6 56.4a2.9 2.9 0 1 0 5.8 0a2.9 2.9 0 1 0 -5.8 0M382.9 56.4a2.9 2.9 0 1 0 5.8 0a2.9 2.9 0 1 0 -5.8 0M391.1 56.4a2.9 2.9 0 1 0 5.8 0a2.9 2.9 0 1 0 -5.8 0M399.4 56.4a2.9 2.9 0 1 0 5.8 0a2.9 2.9 0 1 0 -5.8 0M407.6 56.4a2.9 2.9 0 1 0 5.8 0a2.9 2.9 0 1 0 -5.8 0M415.9 56.4a2.9 2.9 0 1 0 5.8 0a2.9 2.9 0 1 0 -5.8 0M424.1 56.4a2.9 2.9 0 1 0 5.8 0a2.9 2.9 0 1 0 -5.8 0M432.4 56.4a2.9 2.9 0 1 0 5.8 0a2.9 2.9 0 1 0 -5.8 0M440.6 56.4a2.9 2.9 0 1 0 5.8 0a2.9 2.9 0 1 0 -5.8 0M448.9 56.4a2.9 2.9 0 1 0 5.8 0a2.9 2.9 0 1 0 -5.8 0M457.1 56.4a2.9 2.9 0 1 0 5.8 0a2.9 2.9 0 1 0 -5.8 0M465.4 56.4a2.9 2.9 0 1 0 5.8 0a2.9 2.9 0 1 0 -5.8 0M473.6 56.4a2.9 2.9 0 1 0 5.8 0a2.9 2.9 0 1 0 -5.8 0M481.9 56.4a2.9 2.9 0 1 0 5.8 0a2.9 2.9 0 1 0 -5.8 0M238.5 64.7a2.9 2.9 0 1 0 5.8 0a2.9 2.9 0 1 0 -5.8 0M246.7 64.7a2.9 2.9 0 1 0 5.8 0a2.9 2.9 0 1 0 -5.8 0M255.0 64.7a2.9 2.9 0 1 0 5.8 0a2.9 2.9 0 1 0 -5.8 0M263.2 64.7a2.9 2.9 0 1 0 5.8 0a2.9 2.9 0 1 0 -5.8 0M271.5 64.7a2.9 2.9 0 1 0 5.8 0a2.9 2.9 0 1 0 -5.8 0M279.7 64.7a2.9 2.9 0 1 0 5.8 0a2.9 2.9 0 1 0 -5.8 0M288.0 64.7a2.9 2.9 0 1 0 5.8 0a2.9 2.9 0 1 0 -5.8 0M296.2 64.7a2.9 2.9 0 1 0 5.8 0a2.9 2.9 0 1 0 -5.8 0M304.5 64.7a2.9 2.9 0 1 0 5.8 0a2.9 2.9 0 1 0 -5.8 0M312.7 64.7a2.9 2.9 0 1 0 5.8 0a2.9 2.9 0 1 0 -5.8 0M321.0 64.7a2.9 2.9 0 1 0 5.8 0a2.9 2.9 0 1 0 -5.8 0M329.2 64.7a2.9 2.9 0 1 0 5.8 0a2.9 2.9 0 1 0 -5.8 0M337.5 64.7a2.9 2.9 0 1 0 5.8 0a2.9 2.9 0 1 0 -5.8 0M345.7 64.7a2.9 2.9 0 1 0 5.8 0a2.9 2.9 0 1 0 -5.8 0M354.0 64.7a2.9 2.9 0 1 0 5.8 0a2.9 2.9 0 1 0 -5.8 0M362.2 64.7a2.9 2.9 0 1 0 5.8 0a2.9 2.9 0 1 0 -5.8 0M370.5 64.7a2.9 2.9 0 1 0 5.8 0a2.9 2.9 0 1 0 -5.8 0M378.7 64.7a2.9 2.9 0 1 0 5.8 0a2.9 2.9 0 1 0 -5.8 0M387.0 64.7a2.9 2.9 0 1 0 5.8 0a2.9 2.9 0 1 0 -5.8 0M395.2 64.7a2.9 2.9 0 1 0 5.8 0a2.9 2.9 0 1 0 -5.8 0M403.5 64.7a2.9 2.9 0 1 0 5.8 0a2.9 2.9 0 1 0 -5.8 0M411.7 64.7a2.9 2.9 0 1 0 5.8 0a2.9 2.9 0 1 0 -5.8 0M420.0 64.7a2.9 2.9 0 1 0 5.8 0a2.9 2.9 0 1 0 -5.8 0M428.2 64.7a2.9 2.9 0 1 0 5.8 0a2.9 2.9 0 1 0 -5.8 0M436.5 64.7a2.9 2.9 0 1 0 5.8 0a2.9 2.9 0 1 0 -5.8 0M444.7 64.7a2.9 2.9 0 1 0 5.8 0a2.9 2.9 0 1 0 -5.8 0M453.0 64.7a2.9 2.9 0 1 0 5.8 0a2.9 2.9 0 1 0 -5.8 0M461.2 64.7a2.9 2.9 0 1 0 5.8 0a2.9 2.9 0 1 0 -5.8 0M469.5 64.7a2.9 2.9 0 1 0 5.8 0a2.9 2.9 0 1 0 -5.8 0M477.7 64.7a2.9 2.9 0 1 0 5.8 0a2.9 2.9 0 1 0 -5.8 0M486.0 64.7a2.9 2.9 0 1 0 5.8 0a2.9 2.9 0 1 0 -5.8 0M234.3 72.9a2.9 2.9 0 1 0 5.8 0a2.9 2.9 0 1 0 -5.8 0M242.6 72.9a2.9 2.9 0 1 0 5.8 0a2.9 2.9 0 1 0 -5.8 0M250.8 72.9a2.9 2.9 0 1 0 5.8 0a2.9 2.9 0 1 0 -5.8 0M259.1 72.9a2.9 2.9 0 1 0 5.8 0a2.9 2.9 0 1 0 -5.8 0M267.4 72.9a2.9 2.9 0 1 0 5.8 0a2.9 2.9 0 1 0 -5.8 0M275.6 72.9a2.9 2.9 0 1 0 5.8 0a2.9 2.9 0 1 0 -5.8 0M283.9 72.9a2.9 2.9 0 1 0 5.8 0a2.9 2.9 0 1 0 -5.8 0M292.1 72.9a2.9 2.9 0 1 0 5.8 0a2.9 2.9 0 1 0 -5.8 0M300.4 72.9a2.9 2.9 0 1 0 5.8 0a2.9 2.9 0 1 0 -5.8 0M308.6 72.9a2.9 2.9 0 1 0 5.8 0a2.9 2.9 0 1 0 -5.8 0M316.9 72.9a2.9 2.9 0 1 0 5.8 0a2.9 2.9 0 1 0 -5.8 0M325.1 72.9a2.9 2.9 0 1 0 5.8 0a2.9 2.9 0 1 0 -5.8 0M333.4 72.9a2.9 2.9 0 1 0 5.8 0a2.9 2.9 0 1 0 -5.8 0M341.6 72.9a2.9 2.9 0 1 0 5.8 0a2.9 2.9 0 1 0 -5.8 0M349.9 72.9a2.9 2.9 0 1 0 5.8 0a2.9 2.9 0 1 0 -5.8 0M358.1 72.9a2.9 2.9 0 1 0 5.8 0a2.9 2.9 0 1 0 -5.8 0M366.4 72.9a2.9 2.9 0 1 0 5.8 0a2.9 2.9 0 1 0 -5.8 0M374.6 72.9a2.9 2.9 0 1 0 5.8 0a2.9 2.9 0 1 0 -5.8 0M382.9 72.9a2.9 2.9 0 1 0 5.8 0a2.9 2.9 0 1 0 -5.8 0M391.1 72.9a2.9 2.9 0 1 0 5.8 0a2.9 2.9 0 1 0 -5.8 0M399.4 72.9a2.9 2.9 0 1 0 5.8 0a2.9 2.9 0 1 0 -5.8 0M407.6 72.9a2.9 2.9 0 1 0 5.8 0a2.9 2.9 0 1 0 -5.8 0M415.9 72.9a2.9 2.9 0 1 0 5.8 0a2.9 2.9 0 1 0 -5.8 0M424.1 72.9a2.9 2.9 0 1 0 5.8 0a2.9 2.9 0 1 0 -5.8 0M432.4 72.9a2.9 2.9 0 1 0 5.8 0a2.9 2.9 0 1 0 -5.8 0M440.6 72.9a2.9 2.9 0 1 0 5.8 0a2.9 2.9 0 1 0 -5.8 0M448.9 72.9a2.9 2.9 0 1 0 5.8 0a2.9 2.9 0 1 0 -5.8 0M457.1 72.9a2.9 2.9 0 1 0 5.8 0a2.9 2.9 0 1 0 -5.8 0M465.4 72.9a2.9 2.9 0 1 0 5.8 0a2.9 2.9 0 1 0 -5.8 0M473.6 72.9a2.9 2.9 0 1 0 5.8 0a2.9 2.9 0 1 0 -5.8 0M481.9 72.9a2.9 2.9 0 1 0 5.8 0a2.9 2.9 0 1 0 -5.8 0M490.1 72.9a2.9 2.9 0 1 0 5.8 0a2.9 2.9 0 1 0 -5.8 0M230.2 81.2a2.9 2.9 0 1 0 5.8 0a2.9 2.9 0 1 0 -5.8 0M238.5 81.2a2.9 2.9 0 1 0 5.8 0a2.9 2.9 0 1 0 -5.8 0M246.7 81.2a2.9 2.9 0 1 0 5.8 0a2.9 2.9 0 1 0 -5.8 0M255.0 81.2a2.9 2.9 0 1 0 5.8 0a2.9 2.9 0 1 0 -5.8 0M263.2 81.2a2.9 2.9 0 1 0 5.8 0a2.9 2.9 0 1 0 -5.8 0M271.5 81.2a2.9 2.9 0 1 0 5.8 0a2.9 2.9 0 1 0 -5.8 0M279.7 81.2a2.9 2.9 0 1 0 5.8 0a2.9 2.9 0 1 0 -5.8 0M288.0 81.2a2.9 2.9 0 1 0 5.8 0a2.9 2.9 0 1 0 -5.8 0M296.2 81.2a2.9 2.9 0 1 0 5.8 0a2.9 2.9 0 1 0 -5.8 0M304.5 81.2a2.9 2.9 0 1 0 5.8 0a2.9 2.9 0 1 0 -5.8 0M312.7 81.2a2.9 2.9 0 1 0 5.8 0a2.9 2.9 0 1 0 -5.8 0M321.0 81.2a2.9 2.9 0 1 0 5.8 0a2.9 2.9 0 1 0 -5.8 0M329.2 81.2a2.9 2.9 0 1 0 5.8 0a2.9 2.9 0 1 0 -5.8 0M337.5 81.2a2.9 2.9 0 1 0 5.8 0a2.9 2.9 0 1 0 -5.8 0M345.7 81.2a2.9 2.9 0 1 0 5.8 0a2.9 2.9 0 1 0 -5.8 0M354.0 81.2a2.9 2.9 0 1 0 5.8 0a2.9 2.9 0 1 0 -5.8 0M362.2 81.2a2.9 2.9 0 1 0 5.8 0a2.9 2.9 0 1 0 -5.8 0M370.5 81.2a2.9 2.9 0 1 0 5.8 0a2.9 2.9 0 1 0 -5.8 0M378.7 81.2a2.9 2.9 0 1 0 5.8 0a2.9 2.9 0 1 0 -5.8 0M387.0 81.2a2.9 2.9 0 1 0 5.8 0a2.9 2.9 0 1 0 -5.8 0M395.2 81.2a2.9 2.9 0 1 0 5.8 0a2.9 2.9 0 1 0 -5.8 0M403.5 81.2a2.9 2.9 0 1 0 5.8 0a2.9 2.9 0 1 0 -5.8 0M411.7 81.2a2.9 2.9 0 1 0 5.8 0a2.9 2.9 0 1 0 -5.8 0M420.0 81.2a2.9 2.9 0 1 0 5.8 0a2.9 2.9 0 1 0 -5.8 0M428.2 81.2a2.9 2.9 0 1 0 5.8 0a2.9 2.9 0 1 0 -5.8 0M436.5 81.2a2.9 2.9 0 1 0 5.8 0a2.9 2.9 0 1 0 -5.8 0M444.7 81.2a2.9 2.9 0 1 0 5.8 0a2.9 2.9 0 1 0 -5.8 0M453.0 81.2a2.9 2.9 0 1 0 5.8 0a2.9 2.9 0 1 0 -5.8 0M461.2 81.2a2.9 2.9 0 1 0 5.8 0a2.9 2.9 0 1 0 -5.8 0M469.5 81.2a2.9 2.9 0 1 0 5.8 0a2.9 2.9 0 1 0 -5.8 0M477.7 81.2a2.9 2.9 0 1 0 5.8 0a2.9 2.9 0 1 0 -5.8 0M486.0 81.2a2.9 2.9 0 1 0 5.8 0a2.9 2.9 0 1 0 -5.8 0M494.2 81.2a2.9 2.9 0 1 0 5.8 0a2.9 2.9 0 1 0 -5.8 0M226.1 89.4a2.9 2.9 0 1 0 5.8 0a2.9 2.9 0 1 0 -5.8 0M234.3 89.4a2.9 2.9 0 1 0 5.8 0a2.9 2.9 0 1 0 -5.8 0M242.6 89.4a2.9 2.9 0 1 0 5.8 0a2.9 2.9 0 1 0 -5.8 0M250.8 89.4a2.9 2.9 0 1 0 5.8 0a2.9 2.9 0 1 0 -5.8 0M259.1 89.4a2.9 2.9 0 1 0 5.8 0a2.9 2.9 0 1 0 -5.8 0M267.4 89.4a2.9 2.9 0 1 0 5.8 0a2.9 2.9 0 1 0 -5.8 0M275.6 89.4a2.9 2.9 0 1 0 5.8 0a2.9 2.9 0 1 0 -5.8 0M283.9 89.4a2.9 2.9 0 1 0 5.8 0a2.9 2.9 0 1 0 -5.8 0M292.1 89.4a2.9 2.9 0 1 0 5.8 0a2.9 2.9 0 1 0 -5.8 0M300.4 89.4a2.9 2.9 0 1 0 5.8 0a2.9 2.9 0 1 0 -5.8 0M308.6 89.4a2.9 2.9 0 1 0 5.8 0a2.9 2.9 0 1 0 -5.8 0M316.9 89.4a2.9 2.9 0 1 0 5.8 0a2.9 2.9 0 1 0 -5.8 0M325.1 89.4a2.9 2.9 0 1 0 5.8 0a2.9 2.9 0 1 0 -5.8 0M333.4 89.4a2.9 2.9 0 1 0 5.8 0a2.9 2.9 0 1 0 -5.8 0M341.6 89.4a2.9 2.9 0 1 0 5.8 0a2.9 2.9 0 1 0 -5.8 0M349.9 89.4a2.9 2.9 0 1 0 5.8 0a2.9 2.9 0 1 0 -5.8 0M358.1 89.4a2.9 2.9 0 1 0 5.8 0a2.9 2.9 0 1 0 -5.8 0M366.4 89.4a2.9 2.9 0 1 0 5.8 0a2.9 2.9 0 1 0 -5.8 0M374.6 89.4a2.9 2.9 0 1 0 5.8 0a2.9 2.9 0 1 0 -5.8 0M382.9 89.4a2.9 2.9 0 1 0 5.8 0a2.9 2.9 0 1 0 -5.8 0M391.1 89.4a2.9 2.9 0 1 0 5.8 0a2.9 2.9 0 1 0 -5.8 0M399.4 89.4a2.9 2.9 0 1 0 5.8 0a2.9 2.9 0 1 0 -5.8 0M407.6 89.4a2.9 2.9 0 1 0 5.8 0a2.9 2.9 0 1 0 -5.8 0M415.9 89.4a2.9 2.9 0 1 0 5.8 0a2.9 2.9 0 1 0 -5.8 0M424.1 89.4a2.9 2.9 0 1 0 5.8 0a2.9 2.9 0 1 0 -5.8 0M432.4 89.4a2.9 2.9 0 1 0 5.8 0a2.9 2.9 0 1 0 -5.8 0M440.6 89.4a2.9 2.9 0 1 0 5.8 0a2.9 2.9 0 1 0 -5.8 0M448.9 89.4a2.9 2.9 0 1 0 5.8 0a2.9 2.9 0 1 0 -5.8 0M457.1 89.4a2.9 2.9 0 1 0 5.8 0a2.9 2.9 0 1 0 -5.8 0M465.4 89.4a2.9 2.9 0 1 0 5.8 0a2.9 2.9 0 1 0 -5.8 0M473.6 89.4a2.9 2.9 0 1 0 5.8 0a2.9 2.9 0 1 0 -5.8 0M481.9 89.4a2.9 2.9 0 1 0 5.8 0a2.9 2.9 0 1 0 -5.8 0M490.1 89.4a2.9 2.9 0 1 0 5.8 0a2.9 2.9 0 1 0 -5.8 0M498.4 89.4a2.9 2.9 0 1 0 5.8 0a2.9 2.9 0 1 0 -5.8 0M230.2 97.7a2.9 2.9 0 1 0 5.8 0a2.9 2.9 0 1 0 -5.8 0M238.5 97.7a2.9 2.9 0 1 0 5.8 0a2.9 2.9 0 1 0 -5.8 0M246.7 97.7a2.9 2.9 0 1 0 5.8 0a2.9 2.9 0 1 0 -5.8 0M255.0 97.7a2.9 2.9 0 1 0 5.8 0a2.9 2.9 0 1 0 -5.8 0M263.2 97.7a2.9 2.9 0 1 0 5.8 0a2.9 2.9 0 1 0 -5.8 0M271.5 97.7a2.9 2.9 0 1 0 5.8 0a2.9 2.9 0 1 0 -5.8 0M279.7 97.7a2.9 2.9 0 1 0 5.8 0a2.9 2.9 0 1 0 -5.8 0M288.0 97.7a2.9 2.9 0 1 0 5.8 0a2.9 2.9 0 1 0 -5.8 0M296.2 97.7a2.9 2.9 0 1 0 5.8 0a2.9 2.9 0 1 0 -5.8 0M304.5 97.7a2.9 2.9 0 1 0 5.8 0a2.9 2.9 0 1 0 -5.8 0M312.7 97.7a2.9 2.9 0 1 0 5.8 0a2.9 2.9 0 1 0 -5.8 0M321.0 97.7a2.9 2.9 0 1 0 5.8 0a2.9 2.9 0 1 0 -5.8 0M329.2 97.7a2.9 2.9 0 1 0 5.8 0a2.9 2.9 0 1 0 -5.8 0M337.5 97.7a2.9 2.9 0 1 0 5.8 0a2.9 2.9 0 1 0 -5.8 0M345.7 97.7a2.9 2.9 0 1 0 5.8 0a2.9 2.9 0 1 0 -5.8 0M354.0 97.7a2.9 2.9 0 1 0 5.8 0a2.9 2.9 0 1 0 -5.8 0M362.2 97.7a2.9 2.9 0 1 0 5.8 0a2.9 2.9 0 1 0 -5.8 0M370.5 97.7a2.9 2.9 0 1 0 5.8 0a2.9 2.9 0 1 0 -5.8 0M378.7 97.7a2.9 2.9 0 1 0 5.8 0a2.9 2.9 0 1 0 -5.8 0M387.0 97.7a2.9 2.9 0 1 0 5.8 0a2.9 2.9 0 1 0 -5.8 0M395.2 97.7a2.9 2.9 0 1 0 5.8 0a2.9 2.9 0 1 0 -5.8 0M403.5 97.7a2.9 2.9 0 1 0 5.8 0a2.9 2.9 0 1 0 -5.8 0M411.7 97.7a2.9 2.9 0 1 0 5.8 0a2.9 2.9 0 1 0 -5.8 0M420.0 97.7a2.9 2.9 0 1 0 5.8 0a2.9 2.9 0 1 0 -5.8 0M428.2 97.7a2.9 2.9 0 1 0 5.8 0a2.9 2.9 0 1 0 -5.8 0M436.5 97.7a2.9 2.9 0 1 0 5.8 0a2.9 2.9 0 1 0 -5.8 0M444.7 97.7a2.9 2.9 0 1 0 5.8 0a2.9 2.9 0 1 0 -5.8 0M453.0 97.7a2.9 2.9 0 1 0 5.8 0a2.9 2.9 0 1 0 -5.8 0M461.2 97.7a2.9 2.9 0 1 0 5.8 0a2.9 2.9 0 1 0 -5.8 0M469.5 97.7a2.9 2.9 0 1 0 5.8 0a2.9 2.9 0 1 0 -5.8 0M477.7 97.7a2.9 2.9 0 1 0 5.8 0a2.9 2.9 0 1 0 -5.8 0M486.0 97.7a2.9 2.9 0 1 0 5.8 0a2.9 2.9 0 1 0 -5.8 0M494.2 97.7a2.9 2.9 0 1 0 5.8 0a2.9 2.9 0 1 0 -5.8 0M226.1 105.9a2.9 2.9 0 1 0 5.8 0a2.9 2.9 0 1 0 -5.8 0M234.3 105.9a2.9 2.9 0 1 0 5.8 0a2.9 2.9 0 1 0 -5.8 0M242.6 105.9a2.9 2.9 0 1 0 5.8 0a2.9 2.9 0 1 0 -5.8 0M250.8 105.9a2.9 2.9 0 1 0 5.8 0a2.9 2.9 0 1 0 -5.8 0M259.1 105.9a2.9 2.9 0 1 0 5.8 0a2.9 2.9 0 1 0 -5.8 0M267.4 105.9a2.9 2.9 0 1 0 5.8 0a2.9 2.9 0 1 0 -5.8 0M275.6 105.9a2.9 2.9 0 1 0 5.8 0a2.9 2.9 0 1 0 -5.8 0M283.9 105.9a2.9 2.9 0 1 0 5.8 0a2.9 2.9 0 1 0 -5.8 0M292.1 105.9a2.9 2.9 0 1 0 5.8 0a2.9 2.9 0 1 0 -5.8 0M300.4 105.9a2.9 2.9 0 1 0 5.8 0a2.9 2.9 0 1 0 -5.8 0M308.6 105.9a2.9 2.9 0 1 0 5.8 0a2.9 2.9 0 1 0 -5.8 0M316.9 105.9a2.9 2.9 0 1 0 5.8 0a2.9 2.9 0 1 0 -5.8 0M325.1 105.9a2.9 2.9 0 1 0 5.8 0a2.9 2.9 0 1 0 -5.8 0M333.4 105.9a2.9 2.9 0 1 0 5.8 0a2.9 2.9 0 1 0 -5.8 0M341.6 105.9a2.9 2.9 0 1 0 5.8 0a2.9 2.9 0 1 0 -5.8 0M349.9 105.9a2.9 2.9 0 1 0 5.8 0a2.9 2.9 0 1 0 -5.8 0M358.1 105.9a2.9 2.9 0 1 0 5.8 0a2.9 2.9 0 1 0 -5.8 0M366.4 105.9a2.9 2.9 0 1 0 5.8 0a2.9 2.9 0 1 0 -5.8 0M374.6 105.9a2.9 2.9 0 1 0 5.8 0a2.9 2.9 0 1 0 -5.8 0M382.9 105.9a2.9 2.9 0 1 0 5.8 0a2.9 2.9 0 1 0 -5.8 0M391.1 105.9a2.9 2.9 0 1 0 5.8 0a2.9 2.9 0 1 0 -5.8 0M399.4 105.9a2.9 2.9 0 1 0 5.8 0a2.9 2.9 0 1 0 -5.8 0M407.6 105.9a2.9 2.9 0 1 0 5.8 0a2.9 2.9 0 1 0 -5.8 0M415.9 105.9a2.9 2.9 0 1 0 5.8 0a2.9 2.9 0 1 0 -5.8 0M424.1 105.9a2.9 2.9 0 1 0 5.8 0a2.9 2.9 0 1 0 -5.8 0M432.4 105.9a2.9 2.9 0 1 0 5.8 0a2.9 2.9 0 1 0 -5.8 0M440.6 105.9a2.9 2.9 0 1 0 5.8 0a2.9 2.9 0 1 0 -5.8 0M448.9 105.9a2.9 2.9 0 1 0 5.8 0a2.9 2.9 0 1 0 -5.8 0M457.1 105.9a2.9 2.9 0 1 0 5.8 0a2.9 2.9 0 1 0 -5.8 0M465.4 105.9a2.9 2.9 0 1 0 5.8 0a2.9 2.9 0 1 0 -5.8 0M473.6 105.9a2.9 2.9 0 1 0 5.8 0a2.9 2.9 0 1 0 -5.8 0M481.9 105.9a2.9 2.9 0 1 0 5.8 0a2.9 2.9 0 1 0 -5.8 0M490.1 105.9a2.9 2.9 0 1 0 5.8 0a2.9 2.9 0 1 0 -5.8 0M498.4 105.9a2.9 2.9 0 1 0 5.8 0a2.9 2.9 0 1 0 -5.8 0M230.2 114.2a2.9 2.9 0 1 0 5.8 0a2.9 2.9 0 1 0 -5.8 0M238.5 114.2a2.9 2.9 0 1 0 5.8 0a2.9 2.9 0 1 0 -5.8 0M246.7 114.2a2.9 2.9 0 1 0 5.8 0a2.9 2.9 0 1 0 -5.8 0M255.0 114.2a2.9 2.9 0 1 0 5.8 0a2.9 2.9 0 1 0 -5.8 0M263.2 114.2a2.9 2.9 0 1 0 5.8 0a2.9 2.9 0 1 0 -5.8 0M271.5 114.2a2.9 2.9 0 1 0 5.8 0a2.9 2.9 0 1 0 -5.8 0M279.7 114.2a2.9 2.9 0 1 0 5.8 0a2.9 2.9 0 1 0 -5.8 0M288.0 114.2a2.9 2.9 0 1 0 5.8 0a2.9 2.9 0 1 0 -5.8 0M296.2 114.2a2.9 2.9 0 1 0 5.8 0a2.9 2.9 0 1 0 -5.8 0M304.5 114.2a2.9 2.9 0 1 0 5.8 0a2.9 2.9 0 1 0 -5.8 0M312.7 114.2a2.9 2.9 0 1 0 5.8 0a2.9 2.9 0 1 0 -5.8 0M321.0 114.2a2.9 2.9 0 1 0 5.8 0a2.9 2.9 0 1 0 -5.8 0M329.2 114.2a2.9 2.9 0 1 0 5.8 0a2.9 2.9 0 1 0 -5.8 0M337.5 114.2a2.9 2.9 0 1 0 5.8 0a2.9 2.9 0 1 0 -5.8 0M345.7 114.2a2.9 2.9 0 1 0 5.8 0a2.9 2.9 0 1 0 -5.8 0M354.0 114.2a2.9 2.9 0 1 0 5.8 0a2.9 2.9 0 1 0 -5.8 0M362.2 114.2a2.9 2.9 0 1 0 5.8 0a2.9 2.9 0 1 0 -5.8 0M370.5 114.2a2.9 2.9 0 1 0 5.8 0a2.9 2.9 0 1 0 -5.8 0M378.7 114.2a2.9 2.9 0 1 0 5.8 0a2.9 2.9 0 1 0 -5.8 0M387.0 114.2a2.9 2.9 0 1 0 5.8 0a2.9 2.9 0 1 0 -5.8 0M395.2 114.2a2.9 2.9 0 1 0 5.8 0a2.9 2.9 0 1 0 -5.8 0M403.5 114.2a2.9 2.9 0 1 0 5.8 0a2.9 2.9 0 1 0 -5.8 0M411.7 114.2a2.9 2.9 0 1 0 5.8 0a2.9 2.9 0 1 0 -5.8 0M420.0 114.2a2.9 2.9 0 1 0 5.8 0a2.9 2.9 0 1 0 -5.8 0M428.2 114.2a2.9 2.9 0 1 0 5.8 0a2.9 2.9 0 1 0 -5.8 0M436.5 114.2a2.9 2.9 0 1 0 5.8 0a2.9 2.9 0 1 0 -5.8 0M444.7 114.2a2.9 2.9 0 1 0 5.8 0a2.9 2.9 0 1 0 -5.8 0M453.0 114.2a2.9 2.9 0 1 0 5.8 0a2.9 2.9 0 1 0 -5.8 0M461.2 114.2a2.9 2.9 0 1 0 5.8 0a2.9 2.9 0 1 0 -5.8 0M469.5 114.2a2.9 2.9 0 1 0 5.8 0a2.9 2.9 0 1 0 -5.8 0M477.7 114.2a2.9 2.9 0 1 0 5.8 0a2.9 2.9 0 1 0 -5.8 0M486.0 114.2a2.9 2.9 0 1 0 5.8 0a2.9 2.9 0 1 0 -5.8 0M494.2 114.2a2.9 2.9 0 1 0 5.8 0a2.9 2.9 0 1 0 -5.8 0M502.5 114.2a2.9 2.9 0 1 0 5.8 0a2.9 2.9 0 1 0 -5.8 0M226.1 122.4a2.9 2.9 0 1 0 5.8 0a2.9 2.9 0 1 0 -5.8 0M234.3 122.4a2.9 2.9 0 1 0 5.8 0a2.9 2.9 0 1 0 -5.8 0M242.6 122.4a2.9 2.9 0 1 0 5.8 0a2.9 2.9 0 1 0 -5.8 0M250.8 122.4a2.9 2.9 0 1 0 5.8 0a2.9 2.9 0 1 0 -5.8 0M259.1 122.4a2.9 2.9 0 1 0 5.8 0a2.9 2.9 0 1 0 -5.8 0M267.4 122.4a2.9 2.9 0 1 0 5.8 0a2.9 2.9 0 1 0 -5.8 0M275.6 122.4a2.9 2.9 0 1 0 5.8 0a2.9 2.9 0 1 0 -5.8 0M283.9 122.4a2.9 2.9 0 1 0 5.8 0a2.9 2.9 0 1 0 -5.8 0M292.1 122.4a2.9 2.9 0 1 0 5.8 0a2.9 2.9 0 1 0 -5.8 0M300.4 122.4a2.9 2.9 0 1 0 5.8 0a2.9 2.9 0 1 0 -5.8 0M308.6 122.4a2.9 2.9 0 1 0 5.8 0a2.9 2.9 0 1 0 -5.8 0M316.9 122.4a2.9 2.9 0 1 0 5.8 0a2.9 2.9 0 1 0 -5.8 0M325.1 122.4a2.9 2.9 0 1 0 5.8 0a2.9 2.9 0 1 0 -5.8 0M333.4 122.4a2.9 2.9 0 1 0 5.8 0a2.9 2.9 0 1 0 -5.8 0M341.6 122.4a2.9 2.9 0 1 0 5.8 0a2.9 2.9 0 1 0 -5.8 0M349.9 122.4a2.9 2.9 0 1 0 5.8 0a2.9 2.9 0 1 0 -5.8 0M358.1 122.4a2.9 2.9 0 1 0 5.8 0a2.9 2.9 0 1 0 -5.8 0M366.4 122.4a2.9 2.9 0 1 0 5.8 0a2.9 2.9 0 1 0 -5.8 0M374.6 122.4a2.9 2.9 0 1 0 5.8 0a2.9 2.9 0 1 0 -5.8 0M382.9 122.4a2.9 2.9 0 1 0 5.8 0a2.9 2.9 0 1 0 -5.8 0M391.1 122.4a2.9 2.9 0 1 0 5.8 0a2.9 2.9 0 1 0 -5.8 0M399.4 122.4a2.9 2.9 0 1 0 5.8 0a2.9 2.9 0 1 0 -5.8 0M407.6 122.4a2.9 2.9 0 1 0 5.8 0a2.9 2.9 0 1 0 -5.8 0M415.9 122.4a2.9 2.9 0 1 0 5.8 0a2.9 2.9 0 1 0 -5.8 0M424.1 122.4a2.9 2.9 0 1 0 5.8 0a2.9 2.9 0 1 0 -5.8 0M432.4 122.4a2.9 2.9 0 1 0 5.8 0a2.9 2.9 0 1 0 -5.8 0M440.6 122.4a2.9 2.9 0 1 0 5.8 0a2.9 2.9 0 1 0 -5.8 0M448.9 122.4a2.9 2.9 0 1 0 5.8 0a2.9 2.9 0 1 0 -5.8 0M457.1 122.4a2.9 2.9 0 1 0 5.8 0a2.9 2.9 0 1 0 -5.8 0M465.4 122.4a2.9 2.9 0 1 0 5.8 0a2.9 2.9 0 1 0 -5.8 0M473.6 122.4a2.9 2.9 0 1 0 5.8 0a2.9 2.9 0 1 0 -5.8 0M481.9 122.4a2.9 2.9 0 1 0 5.8 0a2.9 2.9 0 1 0 -5.8 0M490.1 122.4a2.9 2.9 0 1 0 5.8 0a2.9 2.9 0 1 0 -5.8 0M498.4 122.4a2.9 2.9 0 1 0 5.8 0a2.9 2.9 0 1 0 -5.8 0M230.2 130.7a2.9 2.9 0 1 0 5.8 0a2.9 2.9 0 1 0 -5.8 0M238.5 130.7a2.9 2.9 0 1 0 5.8 0a2.9 2.9 0 1 0 -5.8 0M246.7 130.7a2.9 2.9 0 1 0 5.8 0a2.9 2.9 0 1 0 -5.8 0M255.0 130.7a2.9 2.9 0 1 0 5.8 0a2.9 2.9 0 1 0 -5.8 0M263.2 130.7a2.9 2.9 0 1 0 5.8 0a2.9 2.9 0 1 0 -5.8 0M271.5 130.7a2.9 2.9 0 1 0 5.8 0a2.9 2.9 0 1 0 -5.8 0M279.7 130.7a2.9 2.9 0 1 0 5.8 0a2.9 2.9 0 1 0 -5.8 0M288.0 130.7a2.9 2.9 0 1 0 5.8 0a2.9 2.9 0 1 0 -5.8 0M296.2 130.7a2.9 2.9 0 1 0 5.8 0a2.9 2.9 0 1 0 -5.8 0M304.5 130.7a2.9 2.9 0 1 0 5.8 0a2.9 2.9 0 1 0 -5.8 0M312.7 130.7a2.9 2.9 0 1 0 5.8 0a2.9 2.9 0 1 0 -5.8 0M321.0 130.7a2.9 2.9 0 1 0 5.8 0a2.9 2.9 0 1 0 -5.8 0M329.2 130.7a2.9 2.9 0 1 0 5.8 0a2.9 2.9 0 1 0 -5.8 0M337.5 130.7a2.9 2.9 0 1 0 5.8 0a2.9 2.9 0 1 0 -5.8 0M345.7 130.7a2.9 2.9 0 1 0 5.8 0a2.9 2.9 0 1 0 -5.8 0M354.0 130.7a2.9 2.9 0 1 0 5.8 0a2.9 2.9 0 1 0 -5.8 0M362.2 130.7a2.9 2.9 0 1 0 5.8 0a2.9 2.9 0 1 0 -5.8 0M370.5 130.7a2.9 2.9 0 1 0 5.8 0a2.9 2.9 0 1 0 -5.8 0M378.7 130.7a2.9 2.9 0 1 0 5.8 0a2.9 2.9 0 1 0 -5.8 0M387.0 130.7a2.9 2.9 0 1 0 5.8 0a2.9 2.9 0 1 0 -5.8 0M395.2 130.7a2.9 2.9 0 1 0 5.8 0a2.9 2.9 0 1 0 -5.8 0M403.5 130.7a2.9 2.9 0 1 0 5.8 0a2.9 2.9 0 1 0 -5.8 0M411.7 130.7a2.9 2.9 0 1 0 5.8 0a2.9 2.9 0 1 0 -5.8 0M420.0 130.7a2.9 2.9 0 1 0 5.8 0a2.9 2.9 0 1 0 -5.8 0M428.2 130.7a2.9 2.9 0 1 0 5.8 0a2.9 2.9 0 1 0 -5.8 0M436.5 130.7a2.9 2.9 0 1 0 5.8 0a2.9 2.9 0 1 0 -5.8 0M444.7 130.7a2.9 2.9 0 1 0 5.8 0a2.9 2.9 0 1 0 -5.8 0M453.0 130.7a2.9 2.9 0 1 0 5.8 0a2.9 2.9 0 1 0 -5.8 0M461.2 130.7a2.9 2.9 0 1 0 5.8 0a2.9 2.9 0 1 0 -5.8 0M469.5 130.7a2.9 2.9 0 1 0 5.8 0a2.9 2.9 0 1 0 -5.8 0M477.7 130.7a2.9 2.9 0 1 0 5.8 0a2.9 2.9 0 1 0 -5.8 0M486.0 130.7a2.9 2.9 0 1 0 5.8 0a2.9 2.9 0 1 0 -5.8 0M494.2 130.7a2.9 2.9 0 1 0 5.8 0a2.9 2.9 0 1 0 -5.8 0M502.5 130.7a2.9 2.9 0 1 0 5.8 0a2.9 2.9 0 1 0 -5.8 0M226.1 138.9a2.9 2.9 0 1 0 5.8 0a2.9 2.9 0 1 0 -5.8 0M234.3 138.9a2.9 2.9 0 1 0 5.8 0a2.9 2.9 0 1 0 -5.8 0M242.6 138.9a2.9 2.9 0 1 0 5.8 0a2.9 2.9 0 1 0 -5.8 0M250.8 138.9a2.9 2.9 0 1 0 5.8 0a2.9 2.9 0 1 0 -5.8 0M259.1 138.9a2.9 2.9 0 1 0 5.8 0a2.9 2.9 0 1 0 -5.8 0M267.4 138.9a2.9 2.9 0 1 0 5.8 0a2.9 2.9 0 1 0 -5.8 0M275.6 138.9a2.9 2.9 0 1 0 5.8 0a2.9 2.9 0 1 0 -5.8 0M283.9 138.9a2.9 2.9 0 1 0 5.8 0a2.9 2.9 0 1 0 -5.8 0M292.1 138.9a2.9 2.9 0 1 0 5.8 0a2.9 2.9 0 1 0 -5.8 0M300.4 138.9a2.9 2.9 0 1 0 5.8 0a2.9 2.9 0 1 0 -5.8 0M308.6 138.9a2.9 2.9 0 1 0 5.8 0a2.9 2.9 0 1 0 -5.8 0M316.9 138.9a2.9 2.9 0 1 0 5.8 0a2.9 2.9 0 1 0 -5.8 0M325.1 138.9a2.9 2.9 0 1 0 5.8 0a2.9 2.9 0 1 0 -5.8 0M333.4 138.9a2.9 2.9 0 1 0 5.8 0a2.9 2.9 0 1 0 -5.8 0M341.6 138.9a2.9 2.9 0 1 0 5.8 0a2.9 2.9 0 1 0 -5.8 0M349.9 138.9a2.9 2.9 0 1 0 5.8 0a2.9 2.9 0 1 0 -5.8 0M358.1 138.9a2.9 2.9 0 1 0 5.8 0a2.9 2.9 0 1 0 -5.8 0M366.4 138.9a2.9 2.9 0 1 0 5.8 0a2.9 2.9 0 1 0 -5.8 0M374.6 138.9a2.9 2.9 0 1 0 5.8 0a2.9 2.9 0 1 0 -5.8 0M382.9 138.9a2.9 2.9 0 1 0 5.8 0a2.9 2.9 0 1 0 -5.8 0M391.1 138.9a2.9 2.9 0 1 0 5.8 0a2.9 2.9 0 1 0 -5.8 0M399.4 138.9a2.9 2.9 0 1 0 5.8 0a2.9 2.9 0 1 0 -5.8 0M407.6 138.9a2.9 2.9 0 1 0 5.8 0a2.9 2.9 0 1 0 -5.8 0M415.9 138.9a2.9 2.9 0 1 0 5.8 0a2.9 2.9 0 1 0 -5.8 0M424.1 138.9a2.9 2.9 0 1 0 5.8 0a2.9 2.9 0 1 0 -5.8 0M432.4 138.9a2.9 2.9 0 1 0 5.8 0a2.9 2.9 0 1 0 -5.8 0M440.6 138.9a2.9 2.9 0 1 0 5.8 0a2.9 2.9 0 1 0 -5.8 0M448.9 138.9a2.9 2.9 0 1 0 5.8 0a2.9 2.9 0 1 0 -5.8 0M457.1 138.9a2.9 2.9 0 1 0 5.8 0a2.9 2.9 0 1 0 -5.8 0M465.4 138.9a2.9 2.9 0 1 0 5.8 0a2.9 2.9 0 1 0 -5.8 0M473.6 138.9a2.9 2.9 0 1 0 5.8 0a2.9 2.9 0 1 0 -5.8 0M481.9 138.9a2.9 2.9 0 1 0 5.8 0a2.9 2.9 0 1 0 -5.8 0M490.1 138.9a2.9 2.9 0 1 0 5.8 0a2.9 2.9 0 1 0 -5.8 0M498.4 138.9a2.9 2.9 0 1 0 5.8 0a2.9 2.9 0 1 0 -5.8 0M230.2 147.2a2.9 2.9 0 1 0 5.8 0a2.9 2.9 0 1 0 -5.8 0M238.5 147.2a2.9 2.9 0 1 0 5.8 0a2.9 2.9 0 1 0 -5.8 0M246.7 147.2a2.9 2.9 0 1 0 5.8 0a2.9 2.9 0 1 0 -5.8 0M255.0 147.2a2.9 2.9 0 1 0 5.8 0a2.9 2.9 0 1 0 -5.8 0M263.2 147.2a2.9 2.9 0 1 0 5.8 0a2.9 2.9 0 1 0 -5.8 0M271.5 147.2a2.9 2.9 0 1 0 5.8 0a2.9 2.9 0 1 0 -5.8 0M279.7 147.2a2.9 2.9 0 1 0 5.8 0a2.9 2.9 0 1 0 -5.8 0M288.0 147.2a2.9 2.9 0 1 0 5.8 0a2.9 2.9 0 1 0 -5.8 0M296.2 147.2a2.9 2.9 0 1 0 5.8 0a2.9 2.9 0 1 0 -5.8 0M304.5 147.2a2.9 2.9 0 1 0 5.8 0a2.9 2.9 0 1 0 -5.8 0M312.7 147.2a2.9 2.9 0 1 0 5.8 0a2.9 2.9 0 1 0 -5.8 0M321.0 147.2a2.9 2.9 0 1 0 5.8 0a2.9 2.9 0 1 0 -5.8 0M329.2 147.2a2.9 2.9 0 1 0 5.8 0a2.9 2.9 0 1 0 -5.8 0M337.5 147.2a2.9 2.9 0 1 0 5.8 0a2.9 2.9 0 1 0 -5.8 0M345.7 147.2a2.9 2.9 0 1 0 5.8 0a2.9 2.9 0 1 0 -5.8 0M354.0 147.2a2.9 2.9 0 1 0 5.8 0a2.9 2.9 0 1 0 -5.8 0M362.2 147.2a2.9 2.9 0 1 0 5.8 0a2.9 2.9 0 1 0 -5.8 0M370.5 147.2a2.9 2.9 0 1 0 5.8 0a2.9 2.9 0 1 0 -5.8 0M378.7 147.2a2.9 2.9 0 1 0 5.8 0a2.9 2.9 0 1 0 -5.8 0M387.0 147.2a2.9 2.9 0 1 0 5.8 0a2.9 2.9 0 1 0 -5.8 0M395.2 147.2a2.9 2.9 0 1 0 5.8 0a2.9 2.9 0 1 0 -5.8 0M403.5 147.2a2.9 2.9 0 1 0 5.8 0a2.9 2.9 0 1 0 -5.8 0M411.7 147.2a2.9 2.9 0 1 0 5.8 0a2.9 2.9 0 1 0 -5.8 0M420.0 147.2a2.9 2.9 0 1 0 5.8 0a2.9 2.9 0 1 0 -5.8 0M428.2 147.2a2.9 2.9 0 1 0 5.8 0a2.9 2.9 0 1 0 -5.8 0M436.5 147.2a2.9 2.9 0 1 0 5.8 0a2.9 2.9 0 1 0 -5.8 0M444.7 147.2a2.9 2.9 0 1 0 5.8 0a2.9 2.9 0 1 0 -5.8 0M453.0 147.2a2.9 2.9 0 1 0 5.8 0a2.9 2.9 0 1 0 -5.8 0M461.2 147.2a2.9 2.9 0 1 0 5.8 0a2.9 2.9 0 1 0 -5.8 0M469.5 147.2a2.9 2.9 0 1 0 5.8 0a2.9 2.9 0 1 0 -5.8 0M477.7 147.2a2.9 2.9 0 1 0 5.8 0a2.9 2.9 0 1 0 -5.8 0M486.0 147.2a2.9 2.9 0 1 0 5.8 0a2.9 2.9 0 1 0 -5.8 0M494.2 147.2a2.9 2.9 0 1 0 5.8 0a2.9 2.9 0 1 0 -5.8 0M226.1 155.4a2.9 2.9 0 1 0 5.8 0a2.9 2.9 0 1 0 -5.8 0M234.3 155.4a2.9 2.9 0 1 0 5.8 0a2.9 2.9 0 1 0 -5.8 0M242.6 155.4a2.9 2.9 0 1 0 5.8 0a2.9 2.9 0 1 0 -5.8 0M250.8 155.4a2.9 2.9 0 1 0 5.8 0a2.9 2.9 0 1 0 -5.8 0M259.1 155.4a2.9 2.9 0 1 0 5.8 0a2.9 2.9 0 1 0 -5.8 0M267.4 155.4a2.9 2.9 0 1 0 5.8 0a2.9 2.9 0 1 0 -5.8 0M275.6 155.4a2.9 2.9 0 1 0 5.8 0a2.9 2.9 0 1 0 -5.8 0M333.4 155.4a2.9 2.9 0 1 0 5.8 0a2.9 2.9 0 1 0 -5.8 0M341.6 155.4a2.9 2.9 0 1 0 5.8 0a2.9 2.9 0 1 0 -5.8 0M349.9 155.4a2.9 2.9 0 1 0 5.8 0a2.9 2.9 0 1 0 -5.8 0M358.1 155.4a2.9 2.9 0 1 0 5.8 0a2.9 2.9 0 1 0 -5.8 0M366.4 155.4a2.9 2.9 0 1 0 5.8 0a2.9 2.9 0 1 0 -5.8 0M374.6 155.4a2.9 2.9 0 1 0 5.8 0a2.9 2.9 0 1 0 -5.8 0M382.9 155.4a2.9 2.9 0 1 0 5.8 0a2.9 2.9 0 1 0 -5.8 0M391.1 155.4a2.9 2.9 0 1 0 5.8 0a2.9 2.9 0 1 0 -5.8 0M399.4 155.4a2.9 2.9 0 1 0 5.8 0a2.9 2.9 0 1 0 -5.8 0M448.9 155.4a2.9 2.9 0 1 0 5.8 0a2.9 2.9 0 1 0 -5.8 0M457.1 155.4a2.9 2.9 0 1 0 5.8 0a2.9 2.9 0 1 0 -5.8 0M465.4 155.4a2.9 2.9 0 1 0 5.8 0a2.9 2.9 0 1 0 -5.8 0M473.6 155.4a2.9 2.9 0 1 0 5.8 0a2.9 2.9 0 1 0 -5.8 0M481.9 155.4a2.9 2.9 0 1 0 5.8 0a2.9 2.9 0 1 0 -5.8 0M490.1 155.4a2.9 2.9 0 1 0 5.8 0a2.9 2.9 0 1 0 -5.8 0M498.4 155.4a2.9 2.9 0 1 0 5.8 0a2.9 2.9 0 1 0 -5.8 0M230.2 163.7a2.9 2.9 0 1 0 5.8 0a2.9 2.9 0 1 0 -5.8 0M238.5 163.7a2.9 2.9 0 1 0 5.8 0a2.9 2.9 0 1 0 -5.8 0M246.7 163.7a2.9 2.9 0 1 0 5.8 0a2.9 2.9 0 1 0 -5.8 0M255.0 163.7a2.9 2.9 0 1 0 5.8 0a2.9 2.9 0 1 0 -5.8 0M263.2 163.7a2.9 2.9 0 1 0 5.8 0a2.9 2.9 0 1 0 -5.8 0M271.5 163.7a2.9 2.9 0 1 0 5.8 0a2.9 2.9 0 1 0 -5.8 0M337.5 163.7a2.9 2.9 0 1 0 5.8 0a2.9 2.9 0 1 0 -5.8 0M345.7 163.7a2.9 2.9 0 1 0 5.8 0a2.9 2.9 0 1 0 -5.8 0M354.0 163.7a2.9 2.9 0 1 0 5.8 0a2.9 2.9 0 1 0 -5.8 0M362.2 163.7a2.9 2.9 0 1 0 5.8 0a2.9 2.9 0 1 0 -5.8 0M370.5 163.7a2.9 2.9 0 1 0 5.8 0a2.9 2.9 0 1 0 -5.8 0M378.7 163.7a2.9 2.9 0 1 0 5.8 0a2.9 2.9 0 1 0 -5.8 0M387.0 163.7a2.9 2.9 0 1 0 5.8 0a2.9 2.9 0 1 0 -5.8 0M461.2 163.7a2.9 2.9 0 1 0 5.8 0a2.9 2.9 0 1 0 -5.8 0M469.5 163.7a2.9 2.9 0 1 0 5.8 0a2.9 2.9 0 1 0 -5.8 0M477.7 163.7a2.9 2.9 0 1 0 5.8 0a2.9 2.9 0 1 0 -5.8 0M486.0 163.7a2.9 2.9 0 1 0 5.8 0a2.9 2.9 0 1 0 -5.8 0M494.2 163.7a2.9 2.9 0 1 0 5.8 0a2.9 2.9 0 1 0 -5.8 0M234.3 171.9a2.9 2.9 0 1 0 5.8 0a2.9 2.9 0 1 0 -5.8 0M242.6 171.9a2.9 2.9 0 1 0 5.8 0a2.9 2.9 0 1 0 -5.8 0M250.8 171.9a2.9 2.9 0 1 0 5.8 0a2.9 2.9 0 1 0 -5.8 0M259.1 171.9a2.9 2.9 0 1 0 5.8 0a2.9 2.9 0 1 0 -5.8 0M267.4 171.9a2.9 2.9 0 1 0 5.8 0a2.9 2.9 0 1 0 -5.8 0M341.6 171.9a2.9 2.9 0 1 0 5.8 0a2.9 2.9 0 1 0 -5.8 0M349.9 171.9a2.9 2.9 0 1 0 5.8 0a2.9 2.9 0 1 0 -5.8 0M358.1 171.9a2.9 2.9 0 1 0 5.8 0a2.9 2.9 0 1 0 -5.8 0M366.4 171.9a2.9 2.9 0 1 0 5.8 0a2.9 2.9 0 1 0 -5.8 0M374.6 171.9a2.9 2.9 0 1 0 5.8 0a2.9 2.9 0 1 0 -5.8 0M382.9 171.9a2.9 2.9 0 1 0 5.8 0a2.9 2.9 0 1 0 -5.8 0M391.1 171.9a2.9 2.9 0 1 0 5.8 0a2.9 2.9 0 1 0 -5.8 0M457.1 171.9a2.9 2.9 0 1 0 5.8 0a2.9 2.9 0 1 0 -5.8 0M465.4 171.9a2.9 2.9 0 1 0 5.8 0a2.9 2.9 0 1 0 -5.8 0M473.6 171.9a2.9 2.9 0 1 0 5.8 0a2.9 2.9 0 1 0 -5.8 0M481.9 171.9a2.9 2.9 0 1 0 5.8 0a2.9 2.9 0 1 0 -5.8 0M490.1 171.9a2.9 2.9 0 1 0 5.8 0a2.9 2.9 0 1 0 -5.8 0M238.5 180.1a2.9 2.9 0 1 0 5.8 0a2.9 2.9 0 1 0 -5.8 0M246.7 180.1a2.9 2.9 0 1 0 5.8 0a2.9 2.9 0 1 0 -5.8 0M255.0 180.1a2.9 2.9 0 1 0 5.8 0a2.9 2.9 0 1 0 -5.8 0M263.2 180.1a2.9 2.9 0 1 0 5.8 0a2.9 2.9 0 1 0 -5.8 0M345.7 180.1a2.9 2.9 0 1 0 5.8 0a2.9 2.9 0 1 0 -5.8 0M354.0 180.1a2.9 2.9 0 1 0 5.8 0a2.9 2.9 0 1 0 -5.8 0M362.2 180.1a2.9 2.9 0 1 0 5.8 0a2.9 2.9 0 1 0 -5.8 0M370.5 180.1a2.9 2.9 0 1 0 5.8 0a2.9 2.9 0 1 0 -5.8 0M378.7 180.1a2.9 2.9 0 1 0 5.8 0a2.9 2.9 0 1 0 -5.8 0M387.0 180.1a2.9 2.9 0 1 0 5.8 0a2.9 2.9 0 1 0 -5.8 0M461.2 180.1a2.9 2.9 0 1 0 5.8 0a2.9 2.9 0 1 0 -5.8 0M469.5 180.1a2.9 2.9 0 1 0 5.8 0a2.9 2.9 0 1 0 -5.8 0M477.7 180.1a2.9 2.9 0 1 0 5.8 0a2.9 2.9 0 1 0 -5.8 0M486.0 180.1a2.9 2.9 0 1 0 5.8 0a2.9 2.9 0 1 0 -5.8 0M242.6 188.4a2.9 2.9 0 1 0 5.8 0a2.9 2.9 0 1 0 -5.8 0M250.8 188.4a2.9 2.9 0 1 0 5.8 0a2.9 2.9 0 1 0 -5.8 0M259.1 188.4a2.9 2.9 0 1 0 5.8 0a2.9 2.9 0 1 0 -5.8 0M267.4 188.4a2.9 2.9 0 1 0 5.8 0a2.9 2.9 0 1 0 -5.8 0M341.6 188.4a2.9 2.9 0 1 0 5.8 0a2.9 2.9 0 1 0 -5.8 0M349.9 188.4a2.9 2.9 0 1 0 5.8 0a2.9 2.9 0 1 0 -5.8 0M358.1 188.4a2.9 2.9 0 1 0 5.8 0a2.9 2.9 0 1 0 -5.8 0M366.4 188.4a2.9 2.9 0 1 0 5.8 0a2.9 2.9 0 1 0 -5.8 0M374.6 188.4a2.9 2.9 0 1 0 5.8 0a2.9 2.9 0 1 0 -5.8 0M382.9 188.4a2.9 2.9 0 1 0 5.8 0a2.9 2.9 0 1 0 -5.8 0M465.4 188.4a2.9 2.9 0 1 0 5.8 0a2.9 2.9 0 1 0 -5.8 0M473.6 188.4a2.9 2.9 0 1 0 5.8 0a2.9 2.9 0 1 0 -5.8 0M481.9 188.4a2.9 2.9 0 1 0 5.8 0a2.9 2.9 0 1 0 -5.8 0M246.7 196.6a2.9 2.9 0 1 0 5.8 0a2.9 2.9 0 1 0 -5.8 0M255.0 196.6a2.9 2.9 0 1 0 5.8 0a2.9 2.9 0 1 0 -5.8 0M263.2 196.6a2.9 2.9 0 1 0 5.8 0a2.9 2.9 0 1 0 -5.8 0M337.5 196.6a2.9 2.9 0 1 0 5.8 0a2.9 2.9 0 1 0 -5.8 0M345.7 196.6a2.9 2.9 0 1 0 5.8 0a2.9 2.9 0 1 0 -5.8 0M354.0 196.6a2.9 2.9 0 1 0 5.8 0a2.9 2.9 0 1 0 -5.8 0M362.2 196.6a2.9 2.9 0 1 0 5.8 0a2.9 2.9 0 1 0 -5.8 0M370.5 196.6a2.9 2.9 0 1 0 5.8 0a2.9 2.9 0 1 0 -5.8 0M378.7 196.6a2.9 2.9 0 1 0 5.8 0a2.9 2.9 0 1 0 -5.8 0M387.0 196.6a2.9 2.9 0 1 0 5.8 0a2.9 2.9 0 1 0 -5.8 0M461.2 196.6a2.9 2.9 0 1 0 5.8 0a2.9 2.9 0 1 0 -5.8 0M469.5 196.6a2.9 2.9 0 1 0 5.8 0a2.9 2.9 0 1 0 -5.8 0M477.7 196.6a2.9 2.9 0 1 0 5.8 0a2.9 2.9 0 1 0 -5.8 0M486.0 196.6a2.9 2.9 0 1 0 5.8 0a2.9 2.9 0 1 0 -5.8 0M250.8 204.9a2.9 2.9 0 1 0 5.8 0a2.9 2.9 0 1 0 -5.8 0M259.1 204.9a2.9 2.9 0 1 0 5.8 0a2.9 2.9 0 1 0 -5.8 0M267.4 204.9a2.9 2.9 0 1 0 5.8 0a2.9 2.9 0 1 0 -5.8 0M341.6 204.9a2.9 2.9 0 1 0 5.8 0a2.9 2.9 0 1 0 -5.8 0M349.9 204.9a2.9 2.9 0 1 0 5.8 0a2.9 2.9 0 1 0 -5.8 0M358.1 204.9a2.9 2.9 0 1 0 5.8 0a2.9 2.9 0 1 0 -5.8 0M366.4 204.9a2.9 2.9 0 1 0 5.8 0a2.9 2.9 0 1 0 -5.8 0M374.6 204.9a2.9 2.9 0 1 0 5.8 0a2.9 2.9 0 1 0 -5.8 0M382.9 204.9a2.9 2.9 0 1 0 5.8 0a2.9 2.9 0 1 0 -5.8 0M391.1 204.9a2.9 2.9 0 1 0 5.8 0a2.9 2.9 0 1 0 -5.8 0M457.1 204.9a2.9 2.9 0 1 0 5.8 0a2.9 2.9 0 1 0 -5.8 0M465.4 204.9a2.9 2.9 0 1 0 5.8 0a2.9 2.9 0 1 0 -5.8 0M473.6 204.9a2.9 2.9 0 1 0 5.8 0a2.9 2.9 0 1 0 -5.8 0M255.0 213.1a2.9 2.9 0 1 0 5.8 0a2.9 2.9 0 1 0 -5.8 0M263.2 213.1a2.9 2.9 0 1 0 5.8 0a2.9 2.9 0 1 0 -5.8 0M271.5 213.1a2.9 2.9 0 1 0 5.8 0a2.9 2.9 0 1 0 -5.8 0M337.5 213.1a2.9 2.9 0 1 0 5.8 0a2.9 2.9 0 1 0 -5.8 0M345.7 213.1a2.9 2.9 0 1 0 5.8 0a2.9 2.9 0 1 0 -5.8 0M354.0 213.1a2.9 2.9 0 1 0 5.8 0a2.9 2.9 0 1 0 -5.8 0M362.2 213.1a2.9 2.9 0 1 0 5.8 0a2.9 2.9 0 1 0 -5.8 0M370.5 213.1a2.9 2.9 0 1 0 5.8 0a2.9 2.9 0 1 0 -5.8 0M378.7 213.1a2.9 2.9 0 1 0 5.8 0a2.9 2.9 0 1 0 -5.8 0M387.0 213.1a2.9 2.9 0 1 0 5.8 0a2.9 2.9 0 1 0 -5.8 0M395.2 213.1a2.9 2.9 0 1 0 5.8 0a2.9 2.9 0 1 0 -5.8 0M453.0 213.1a2.9 2.9 0 1 0 5.8 0a2.9 2.9 0 1 0 -5.8 0M461.2 213.1a2.9 2.9 0 1 0 5.8 0a2.9 2.9 0 1 0 -5.8 0M469.5 213.1a2.9 2.9 0 1 0 5.8 0a2.9 2.9 0 1 0 -5.8 0M250.8 221.4a2.9 2.9 0 1 0 5.8 0a2.9 2.9 0 1 0 -5.8 0M259.1 221.4a2.9 2.9 0 1 0 5.8 0a2.9 2.9 0 1 0 -5.8 0M267.4 221.4a2.9 2.9 0 1 0 5.8 0a2.9 2.9 0 1 0 -5.8 0M275.6 221.4a2.9 2.9 0 1 0 5.8 0a2.9 2.9 0 1 0 -5.8 0M283.9 221.4a2.9 2.9 0 1 0 5.8 0a2.9 2.9 0 1 0 -5.8 0M325.1 221.4a2.9 2.9 0 1 0 5.8 0a2.9 2.9 0 1 0 -5.8 0M333.4 221.4a2.9 2.9 0 1 0 5.8 0a2.9 2.9 0 1 0 -5.8 0M341.6 221.4a2.9 2.9 0 1 0 5.8 0a2.9 2.9 0 1 0 -5.8 0M349.9 221.4a2.9 2.9 0 1 0 5.8 0a2.9 2.9 0 1 0 -5.8 0M358.1 221.4a2.9 2.9 0 1 0 5.8 0a2.9 2.9 0 1 0 -5.8 0M366.4 221.4a2.9 2.9 0 1 0 5.8 0a2.9 2.9 0 1 0 -5.8 0M374.6 221.4a2.9 2.9 0 1 0 5.8 0a2.9 2.9 0 1 0 -5.8 0M382.9 221.4a2.9 2.9 0 1 0 5.8 0a2.9 2.9 0 1 0 -5.8 0M391.1 221.4a2.9 2.9 0 1 0 5.8 0a2.9 2.9 0 1 0 -5.8 0M399.4 221.4a2.9 2.9 0 1 0 5.8 0a2.9 2.9 0 1 0 -5.8 0M440.6 221.4a2.9 2.9 0 1 0 5.8 0a2.9 2.9 0 1 0 -5.8 0M448.9 221.4a2.9 2.9 0 1 0 5.8 0a2.9 2.9 0 1 0 -5.8 0M457.1 221.4a2.9 2.9 0 1 0 5.8 0a2.9 2.9 0 1 0 -5.8 0M465.4 221.4a2.9 2.9 0 1 0 5.8 0a2.9 2.9 0 1 0 -5.8 0M473.6 221.4a2.9 2.9 0 1 0 5.8 0a2.9 2.9 0 1 0 -5.8 0M255.0 229.6a2.9 2.9 0 1 0 5.8 0a2.9 2.9 0 1 0 -5.8 0M263.2 229.6a2.9 2.9 0 1 0 5.8 0a2.9 2.9 0 1 0 -5.8 0M271.5 229.6a2.9 2.9 0 1 0 5.8 0a2.9 2.9 0 1 0 -5.8 0M279.7 229.6a2.9 2.9 0 1 0 5.8 0a2.9 2.9 0 1 0 -5.8 0M288.0 229.6a2.9 2.9 0 1 0 5.8 0a2.9 2.9 0 1 0 -5.8 0M296.2 229.6a2.9 2.9 0 1 0 5.8 0a2.9 2.9 0 1 0 -5.8 0M304.5 229.6a2.9 2.9 0 1 0 5.8 0a2.9 2.9 0 1 0 -5.8 0M312.7 229.6a2.9 2.9 0 1 0 5.8 0a2.9 2.9 0 1 0 -5.8 0M321.0 229.6a2.9 2.9 0 1 0 5.8 0a2.9 2.9 0 1 0 -5.8 0M329.2 229.6a2.9 2.9 0 1 0 5.8 0a2.9 2.9 0 1 0 -5.8 0M337.5 229.6a2.9 2.9 0 1 0 5.8 0a2.9 2.9 0 1 0 -5.8 0M345.7 229.6a2.9 2.9 0 1 0 5.8 0a2.9 2.9 0 1 0 -5.8 0M354.0 229.6a2.9 2.9 0 1 0 5.8 0a2.9 2.9 0 1 0 -5.8 0M370.5 229.6a2.9 2.9 0 1 0 5.8 0a2.9 2.9 0 1 0 -5.8 0M378.7 229.6a2.9 2.9 0 1 0 5.8 0a2.9 2.9 0 1 0 -5.8 0M387.0 229.6a2.9 2.9 0 1 0 5.8 0a2.9 2.9 0 1 0 -5.8 0M395.2 229.6a2.9 2.9 0 1 0 5.8 0a2.9 2.9 0 1 0 -5.8 0M403.5 229.6a2.9 2.9 0 1 0 5.8 0a2.9 2.9 0 1 0 -5.8 0M411.7 229.6a2.9 2.9 0 1 0 5.8 0a2.9 2.9 0 1 0 -5.8 0M420.0 229.6a2.9 2.9 0 1 0 5.8 0a2.9 2.9 0 1 0 -5.8 0M428.2 229.6a2.9 2.9 0 1 0 5.8 0a2.9 2.9 0 1 0 -5.8 0M436.5 229.6a2.9 2.9 0 1 0 5.8 0a2.9 2.9 0 1 0 -5.8 0M444.7 229.6a2.9 2.9 0 1 0 5.8 0a2.9 2.9 0 1 0 -5.8 0M453.0 229.6a2.9 2.9 0 1 0 5.8 0a2.9 2.9 0 1 0 -5.8 0M461.2 229.6a2.9 2.9 0 1 0 5.8 0a2.9 2.9 0 1 0 -5.8 0M469.5 229.6a2.9 2.9 0 1 0 5.8 0a2.9 2.9 0 1 0 -5.8 0M259.1 237.9a2.9 2.9 0 1 0 5.8 0a2.9 2.9 0 1 0 -5.8 0M267.4 237.9a2.9 2.9 0 1 0 5.8 0a2.9 2.9 0 1 0 -5.8 0M275.6 237.9a2.9 2.9 0 1 0 5.8 0a2.9 2.9 0 1 0 -5.8 0M283.9 237.9a2.9 2.9 0 1 0 5.8 0a2.9 2.9 0 1 0 -5.8 0M292.1 237.9a2.9 2.9 0 1 0 5.8 0a2.9 2.9 0 1 0 -5.8 0M300.4 237.9a2.9 2.9 0 1 0 5.8 0a2.9 2.9 0 1 0 -5.8 0M308.6 237.9a2.9 2.9 0 1 0 5.8 0a2.9 2.9 0 1 0 -5.8 0M316.9 237.9a2.9 2.9 0 1 0 5.8 0a2.9 2.9 0 1 0 -5.8 0M325.1 237.9a2.9 2.9 0 1 0 5.8 0a2.9 2.9 0 1 0 -5.8 0M333.4 237.9a2.9 2.9 0 1 0 5.8 0a2.9 2.9 0 1 0 -5.8 0M341.6 237.9a2.9 2.9 0 1 0 5.8 0a2.9 2.9 0 1 0 -5.8 0M349.9 237.9a2.9 2.9 0 1 0 5.8 0a2.9 2.9 0 1 0 -5.8 0M382.9 237.9a2.9 2.9 0 1 0 5.8 0a2.9 2.9 0 1 0 -5.8 0M391.1 237.9a2.9 2.9 0 1 0 5.8 0a2.9 2.9 0 1 0 -5.8 0M399.4 237.9a2.9 2.9 0 1 0 5.8 0a2.9 2.9 0 1 0 -5.8 0M407.6 237.9a2.9 2.9 0 1 0 5.8 0a2.9 2.9 0 1 0 -5.8 0M415.9 237.9a2.9 2.9 0 1 0 5.8 0a2.9 2.9 0 1 0 -5.8 0M424.1 237.9a2.9 2.9 0 1 0 5.8 0a2.9 2.9 0 1 0 -5.8 0M432.4 237.9a2.9 2.9 0 1 0 5.8 0a2.9 2.9 0 1 0 -5.8 0M440.6 237.9a2.9 2.9 0 1 0 5.8 0a2.9 2.9 0 1 0 -5.8 0M448.9 237.9a2.9 2.9 0 1 0 5.8 0a2.9 2.9 0 1 0 -5.8 0M457.1 237.9a2.9 2.9 0 1 0 5.8 0a2.9 2.9 0 1 0 -5.8 0M465.4 237.9a2.9 2.9 0 1 0 5.8 0a2.9 2.9 0 1 0 -5.8 0M263.2 246.1a2.9 2.9 0 1 0 5.8 0a2.9 2.9 0 1 0 -5.8 0M271.5 246.1a2.9 2.9 0 1 0 5.8 0a2.9 2.9 0 1 0 -5.8 0M279.7 246.1a2.9 2.9 0 1 0 5.8 0a2.9 2.9 0 1 0 -5.8 0M288.0 246.1a2.9 2.9 0 1 0 5.8 0a2.9 2.9 0 1 0 -5.8 0M296.2 246.1a2.9 2.9 0 1 0 5.8 0a2.9 2.9 0 1 0 -5.8 0M304.5 246.1a2.9 2.9 0 1 0 5.8 0a2.9 2.9 0 1 0 -5.8 0M312.7 246.1a2.9 2.9 0 1 0 5.8 0a2.9 2.9 0 1 0 -5.8 0M321.0 246.1a2.9 2.9 0 1 0 5.8 0a2.9 2.9 0 1 0 -5.8 0M329.2 246.1a2.9 2.9 0 1 0 5.8 0a2.9 2.9 0 1 0 -5.8 0M337.5 246.1a2.9 2.9 0 1 0 5.8 0a2.9 2.9 0 1 0 -5.8 0M387.0 246.1a2.9 2.9 0 1 0 5.8 0a2.9 2.9 0 1 0 -5.8 0M395.2 246.1a2.9 2.9 0 1 0 5.8 0a2.9 2.9 0 1 0 -5.8 0M403.5 246.1a2.9 2.9 0 1 0 5.8 0a2.9 2.9 0 1 0 -5.8 0M411.7 246.1a2.9 2.9 0 1 0 5.8 0a2.9 2.9 0 1 0 -5.8 0M420.0 246.1a2.9 2.9 0 1 0 5.8 0a2.9 2.9 0 1 0 -5.8 0M428.2 246.1a2.9 2.9 0 1 0 5.8 0a2.9 2.9 0 1 0 -5.8 0M436.5 246.1a2.9 2.9 0 1 0 5.8 0a2.9 2.9 0 1 0 -5.8 0M444.7 246.1a2.9 2.9 0 1 0 5.8 0a2.9 2.9 0 1 0 -5.8 0M453.0 246.1a2.9 2.9 0 1 0 5.8 0a2.9 2.9 0 1 0 -5.8 0M461.2 246.1a2.9 2.9 0 1 0 5.8 0a2.9 2.9 0 1 0 -5.8 0M469.5 246.1a2.9 2.9 0 1 0 5.8 0a2.9 2.9 0 1 0 -5.8 0M259.1 254.4a2.9 2.9 0 1 0 5.8 0a2.9 2.9 0 1 0 -5.8 0M267.4 254.4a2.9 2.9 0 1 0 5.8 0a2.9 2.9 0 1 0 -5.8 0M275.6 254.4a2.9 2.9 0 1 0 5.8 0a2.9 2.9 0 1 0 -5.8 0M283.9 254.4a2.9 2.9 0 1 0 5.8 0a2.9 2.9 0 1 0 -5.8 0M292.1 254.4a2.9 2.9 0 1 0 5.8 0a2.9 2.9 0 1 0 -5.8 0M300.4 254.4a2.9 2.9 0 1 0 5.8 0a2.9 2.9 0 1 0 -5.8 0M308.6 254.4a2.9 2.9 0 1 0 5.8 0a2.9 2.9 0 1 0 -5.8 0M316.9 254.4a2.9 2.9 0 1 0 5.8 0a2.9 2.9 0 1 0 -5.8 0M325.1 254.4a2.9 2.9 0 1 0 5.8 0a2.9 2.9 0 1 0 -5.8 0M333.4 254.4a2.9 2.9 0 1 0 5.8 0a2.9 2.9 0 1 0 -5.8 0M391.1 254.4a2.9 2.9 0 1 0 5.8 0a2.9 2.9 0 1 0 -5.8 0M399.4 254.4a2.9 2.9 0 1 0 5.8 0a2.9 2.9 0 1 0 -5.8 0M407.6 254.4a2.9 2.9 0 1 0 5.8 0a2.9 2.9 0 1 0 -5.8 0M415.9 254.4a2.9 2.9 0 1 0 5.8 0a2.9 2.9 0 1 0 -5.8 0M424.1 254.4a2.9 2.9 0 1 0 5.8 0a2.9 2.9 0 1 0 -5.8 0M432.4 254.4a2.9 2.9 0 1 0 5.8 0a2.9 2.9 0 1 0 -5.8 0M440.6 254.4a2.9 2.9 0 1 0 5.8 0a2.9 2.9 0 1 0 -5.8 0M448.9 254.4a2.9 2.9 0 1 0 5.8 0a2.9 2.9 0 1 0 -5.8 0M457.1 254.4a2.9 2.9 0 1 0 5.8 0a2.9 2.9 0 1 0 -5.8 0M465.4 254.4a2.9 2.9 0 1 0 5.8 0a2.9 2.9 0 1 0 -5.8 0M271.5 262.6a2.9 2.9 0 1 0 5.8 0a2.9 2.9 0 1 0 -5.8 0M279.7 262.6a2.9 2.9 0 1 0 5.8 0a2.9 2.9 0 1 0 -5.8 0M288.0 262.6a2.9 2.9 0 1 0 5.8 0a2.9 2.9 0 1 0 -5.8 0M296.2 262.6a2.9 2.9 0 1 0 5.8 0a2.9 2.9 0 1 0 -5.8 0M304.5 262.6a2.9 2.9 0 1 0 5.8 0a2.9 2.9 0 1 0 -5.8 0M312.7 262.6a2.9 2.9 0 1 0 5.8 0a2.9 2.9 0 1 0 -5.8 0M321.0 262.6a2.9 2.9 0 1 0 5.8 0a2.9 2.9 0 1 0 -5.8 0M329.2 262.6a2.9 2.9 0 1 0 5.8 0a2.9 2.9 0 1 0 -5.8 0M337.5 262.6a2.9 2.9 0 1 0 5.8 0a2.9 2.9 0 1 0 -5.8 0M387.0 262.6a2.9 2.9 0 1 0 5.8 0a2.9 2.9 0 1 0 -5.8 0M395.2 262.6a2.9 2.9 0 1 0 5.8 0a2.9 2.9 0 1 0 -5.8 0M403.5 262.6a2.9 2.9 0 1 0 5.8 0a2.9 2.9 0 1 0 -5.8 0M411.7 262.6a2.9 2.9 0 1 0 5.8 0a2.9 2.9 0 1 0 -5.8 0M420.0 262.6a2.9 2.9 0 1 0 5.8 0a2.9 2.9 0 1 0 -5.8 0M428.2 262.6a2.9 2.9 0 1 0 5.8 0a2.9 2.9 0 1 0 -5.8 0M436.5 262.6a2.9 2.9 0 1 0 5.8 0a2.9 2.9 0 1 0 -5.8 0M444.7 262.6a2.9 2.9 0 1 0 5.8 0a2.9 2.9 0 1 0 -5.8 0M453.0 262.6a2.9 2.9 0 1 0 5.8 0a2.9 2.9 0 1 0 -5.8 0M461.2 262.6a2.9 2.9 0 1 0 5.8 0a2.9 2.9 0 1 0 -5.8 0M283.9 270.9a2.9 2.9 0 1 0 5.8 0a2.9 2.9 0 1 0 -5.8 0M292.1 270.9a2.9 2.9 0 1 0 5.8 0a2.9 2.9 0 1 0 -5.8 0M300.4 270.9a2.9 2.9 0 1 0 5.8 0a2.9 2.9 0 1 0 -5.8 0M308.6 270.9a2.9 2.9 0 1 0 5.8 0a2.9 2.9 0 1 0 -5.8 0M316.9 270.9a2.9 2.9 0 1 0 5.8 0a2.9 2.9 0 1 0 -5.8 0M325.1 270.9a2.9 2.9 0 1 0 5.8 0a2.9 2.9 0 1 0 -5.8 0M333.4 270.9a2.9 2.9 0 1 0 5.8 0a2.9 2.9 0 1 0 -5.8 0M341.6 270.9a2.9 2.9 0 1 0 5.8 0a2.9 2.9 0 1 0 -5.8 0M349.9 270.9a2.9 2.9 0 1 0 5.8 0a2.9 2.9 0 1 0 -5.8 0M358.1 270.9a2.9 2.9 0 1 0 5.8 0a2.9 2.9 0 1 0 -5.8 0M366.4 270.9a2.9 2.9 0 1 0 5.8 0a2.9 2.9 0 1 0 -5.8 0M374.6 270.9a2.9 2.9 0 1 0 5.8 0a2.9 2.9 0 1 0 -5.8 0M382.9 270.9a2.9 2.9 0 1 0 5.8 0a2.9 2.9 0 1 0 -5.8 0M391.1 270.9a2.9 2.9 0 1 0 5.8 0a2.9 2.9 0 1 0 -5.8 0M399.4 270.9a2.9 2.9 0 1 0 5.8 0a2.9 2.9 0 1 0 -5.8 0M407.6 270.9a2.9 2.9 0 1 0 5.8 0a2.9 2.9 0 1 0 -5.8 0M415.9 270.9a2.9 2.9 0 1 0 5.8 0a2.9 2.9 0 1 0 -5.8 0M424.1 270.9a2.9 2.9 0 1 0 5.8 0a2.9 2.9 0 1 0 -5.8 0M432.4 270.9a2.9 2.9 0 1 0 5.8 0a2.9 2.9 0 1 0 -5.8 0M440.6 270.9a2.9 2.9 0 1 0 5.8 0a2.9 2.9 0 1 0 -5.8 0M304.5 279.1a2.9 2.9 0 1 0 5.8 0a2.9 2.9 0 1 0 -5.8 0M312.7 279.1a2.9 2.9 0 1 0 5.8 0a2.9 2.9 0 1 0 -5.8 0M321.0 279.1a2.9 2.9 0 1 0 5.8 0a2.9 2.9 0 1 0 -5.8 0M329.2 279.1a2.9 2.9 0 1 0 5.8 0a2.9 2.9 0 1 0 -5.8 0M337.5 279.1a2.9 2.9 0 1 0 5.8 0a2.9 2.9 0 1 0 -5.8 0M345.7 279.1a2.9 2.9 0 1 0 5.8 0a2.9 2.9 0 1 0 -5.8 0M354.0 279.1a2.9 2.9 0 1 0 5.8 0a2.9 2.9 0 1 0 -5.8 0M362.2 279.1a2.9 2.9 0 1 0 5.8 0a2.9 2.9 0 1 0 -5.8 0M370.5 279.1a2.9 2.9 0 1 0 5.8 0a2.9 2.9 0 1 0 -5.8 0M378.7 279.1a2.9 2.9 0 1 0 5.8 0a2.9 2.9 0 1 0 -5.8 0M387.0 279.1a2.9 2.9 0 1 0 5.8 0a2.9 2.9 0 1 0 -5.8 0M395.2 279.1a2.9 2.9 0 1 0 5.8 0a2.9 2.9 0 1 0 -5.8 0M403.5 279.1a2.9 2.9 0 1 0 5.8 0a2.9 2.9 0 1 0 -5.8 0M411.7 279.1a2.9 2.9 0 1 0 5.8 0a2.9 2.9 0 1 0 -5.8 0M420.0 279.1a2.9 2.9 0 1 0 5.8 0a2.9 2.9 0 1 0 -5.8 0M316.9 287.4a2.9 2.9 0 1 0 5.8 0a2.9 2.9 0 1 0 -5.8 0M325.1 287.4a2.9 2.9 0 1 0 5.8 0a2.9 2.9 0 1 0 -5.8 0M333.4 287.4a2.9 2.9 0 1 0 5.8 0a2.9 2.9 0 1 0 -5.8 0M341.6 287.4a2.9 2.9 0 1 0 5.8 0a2.9 2.9 0 1 0 -5.8 0M349.9 287.4a2.9 2.9 0 1 0 5.8 0a2.9 2.9 0 1 0 -5.8 0M358.1 287.4a2.9 2.9 0 1 0 5.8 0a2.9 2.9 0 1 0 -5.8 0M366.4 287.4a2.9 2.9 0 1 0 5.8 0a2.9 2.9 0 1 0 -5.8 0M374.6 287.4a2.9 2.9 0 1 0 5.8 0a2.9 2.9 0 1 0 -5.8 0M382.9 287.4a2.9 2.9 0 1 0 5.8 0a2.9 2.9 0 1 0 -5.8 0M391.1 287.4a2.9 2.9 0 1 0 5.8 0a2.9 2.9 0 1 0 -5.8 0M399.4 287.4a2.9 2.9 0 1 0 5.8 0a2.9 2.9 0 1 0 -5.8 0M407.6 287.4a2.9 2.9 0 1 0 5.8 0a2.9 2.9 0 1 0 -5.8 0M321.0 295.6a2.9 2.9 0 1 0 5.8 0a2.9 2.9 0 1 0 -5.8 0M329.2 295.6a2.9 2.9 0 1 0 5.8 0a2.9 2.9 0 1 0 -5.8 0M337.5 295.6a2.9 2.9 0 1 0 5.8 0a2.9 2.9 0 1 0 -5.8 0M345.7 295.6a2.9 2.9 0 1 0 5.8 0a2.9 2.9 0 1 0 -5.8 0M354.0 295.6a2.9 2.9 0 1 0 5.8 0a2.9 2.9 0 1 0 -5.8 0M362.2 295.6a2.9 2.9 0 1 0 5.8 0a2.9 2.9 0 1 0 -5.8 0M370.5 295.6a2.9 2.9 0 1 0 5.8 0a2.9 2.9 0 1 0 -5.8 0M378.7 295.6a2.9 2.9 0 1 0 5.8 0a2.9 2.9 0 1 0 -5.8 0M387.0 295.6a2.9 2.9 0 1 0 5.8 0a2.9 2.9 0 1 0 -5.8 0M395.2 295.6a2.9 2.9 0 1 0 5.8 0a2.9 2.9 0 1 0 -5.8 0M403.5 295.6a2.9 2.9 0 1 0 5.8 0a2.9 2.9 0 1 0 -5.8 0M325.1 303.9a2.9 2.9 0 1 0 5.8 0a2.9 2.9 0 1 0 -5.8 0M333.4 303.9a2.9 2.9 0 1 0 5.8 0a2.9 2.9 0 1 0 -5.8 0M341.6 303.9a2.9 2.9 0 1 0 5.8 0a2.9 2.9 0 1 0 -5.8 0M349.9 303.9a2.9 2.9 0 1 0 5.8 0a2.9 2.9 0 1 0 -5.8 0M358.1 303.9a2.9 2.9 0 1 0 5.8 0a2.9 2.9 0 1 0 -5.8 0M366.4 303.9a2.9 2.9 0 1 0 5.8 0a2.9 2.9 0 1 0 -5.8 0M374.6 303.9a2.9 2.9 0 1 0 5.8 0a2.9 2.9 0 1 0 -5.8 0M382.9 303.9a2.9 2.9 0 1 0 5.8 0a2.9 2.9 0 1 0 -5.8 0M391.1 303.9a2.9 2.9 0 1 0 5.8 0a2.9 2.9 0 1 0 -5.8 0M399.4 303.9a2.9 2.9 0 1 0 5.8 0a2.9 2.9 0 1 0 -5.8 0M293.7 299.2a2.9 2.9 0 1 0 5.8 0a2.9 2.9 0 1 0 -5.8 0M302.0 299.2a2.9 2.9 0 1 0 5.8 0a2.9 2.9 0 1 0 -5.8 0M425.7 299.2a2.9 2.9 0 1 0 5.8 0a2.9 2.9 0 1 0 -5.8 0M434.0 299.2a2.9 2.9 0 1 0 5.8 0a2.9 2.9 0 1 0 -5.8 0M289.6 307.4a2.9 2.9 0 1 0 5.8 0a2.9 2.9 0 1 0 -5.8 0M297.8 307.4a2.9 2.9 0 1 0 5.8 0a2.9 2.9 0 1 0 -5.8 0M306.1 307.4a2.9 2.9 0 1 0 5.8 0a2.9 2.9 0 1 0 -5.8 0M421.6 307.4a2.9 2.9 0 1 0 5.8 0a2.9 2.9 0 1 0 -5.8 0M429.8 307.4a2.9 2.9 0 1 0 5.8 0a2.9 2.9 0 1 0 -5.8 0M293.7 315.7a2.9 2.9 0 1 0 5.8 0a2.9 2.9 0 1 0 -5.8 0M302.0 315.7a2.9 2.9 0 1 0 5.8 0a2.9 2.9 0 1 0 -5.8 0M310.2 315.7a2.9 2.9 0 1 0 5.8 0a2.9 2.9 0 1 0 -5.8 0M417.5 315.7a2.9 2.9 0 1 0 5.8 0a2.9 2.9 0 1 0 -5.8 0M425.7 315.7a2.9 2.9 0 1 0 5.8 0a2.9 2.9 0 1 0 -5.8 0M434.0 315.7a2.9 2.9 0 1 0 5.8 0a2.9 2.9 0 1 0 -5.8 0M297.8 323.9a2.9 2.9 0 1 0 5.8 0a2.9 2.9 0 1 0 -5.8 0M306.1 323.9a2.9 2.9 0 1 0 5.8 0a2.9 2.9 0 1 0 -5.8 0M314.3 323.9a2.9 2.9 0 1 0 5.8 0a2.9 2.9 0 1 0 -5.8 0M413.3 323.9a2.9 2.9 0 1 0 5.8 0a2.9 2.9 0 1 0 -5.8 0M421.6 323.9a2.9 2.9 0 1 0 5.8 0a2.9 2.9 0 1 0 -5.8 0M429.8 323.9a2.9 2.9 0 1 0 5.8 0a2.9 2.9 0 1 0 -5.8 0M302.0 332.2a2.9 2.9 0 1 0 5.8 0a2.9 2.9 0 1 0 -5.8 0M310.2 332.2a2.9 2.9 0 1 0 5.8 0a2.9 2.9 0 1 0 -5.8 0M318.5 332.2a2.9 2.9 0 1 0 5.8 0a2.9 2.9 0 1 0 -5.8 0M326.7 332.2a2.9 2.9 0 1 0 5.8 0a2.9 2.9 0 1 0 -5.8 0M401.0 332.2a2.9 2.9 0 1 0 5.8 0a2.9 2.9 0 1 0 -5.8 0M409.2 332.2a2.9 2.9 0 1 0 5.8 0a2.9 2.9 0 1 0 -5.8 0M417.5 332.2a2.9 2.9 0 1 0 5.8 0a2.9 2.9 0 1 0 -5.8 0M425.7 332.2a2.9 2.9 0 1 0 5.8 0a2.9 2.9 0 1 0 -5.8 0M306.1 340.4a2.9 2.9 0 1 0 5.8 0a2.9 2.9 0 1 0 -5.8 0M314.3 340.4a2.9 2.9 0 1 0 5.8 0a2.9 2.9 0 1 0 -5.8 0M322.6 340.4a2.9 2.9 0 1 0 5.8 0a2.9 2.9 0 1 0 -5.8 0M330.8 340.4a2.9 2.9 0 1 0 5.8 0a2.9 2.9 0 1 0 -5.8 0M339.1 340.4a2.9 2.9 0 1 0 5.8 0a2.9 2.9 0 1 0 -5.8 0M347.3 340.4a2.9 2.9 0 1 0 5.8 0a2.9 2.9 0 1 0 -5.8 0M355.6 340.4a2.9 2.9 0 1 0 5.8 0a2.9 2.9 0 1 0 -5.8 0M363.8 340.4a2.9 2.9 0 1 0 5.8 0a2.9 2.9 0 1 0 -5.8 0M372.1 340.4a2.9 2.9 0 1 0 5.8 0a2.9 2.9 0 1 0 -5.8 0M380.3 340.4a2.9 2.9 0 1 0 5.8 0a2.9 2.9 0 1 0 -5.8 0M388.6 340.4a2.9 2.9 0 1 0 5.8 0a2.9 2.9 0 1 0 -5.8 0M396.8 340.4a2.9 2.9 0 1 0 5.8 0a2.9 2.9 0 1 0 -5.8 0M405.1 340.4a2.9 2.9 0 1 0 5.8 0a2.9 2.9 0 1 0 -5.8 0M413.3 340.4a2.9 2.9 0 1 0 5.8 0a2.9 2.9 0 1 0 -5.8 0M421.6 340.4a2.9 2.9 0 1 0 5.8 0a2.9 2.9 0 1 0 -5.8 0M318.5 348.7a2.9 2.9 0 1 0 5.8 0a2.9 2.9 0 1 0 -5.8 0M326.7 348.7a2.9 2.9 0 1 0 5.8 0a2.9 2.9 0 1 0 -5.8 0M335.0 348.7a2.9 2.9 0 1 0 5.8 0a2.9 2.9 0 1 0 -5.8 0M343.2 348.7a2.9 2.9 0 1 0 5.8 0a2.9 2.9 0 1 0 -5.8 0M351.5 348.7a2.9 2.9 0 1 0 5.8 0a2.9 2.9 0 1 0 -5.8 0M359.7 348.7a2.9 2.9 0 1 0 5.8 0a2.9 2.9 0 1 0 -5.8 0M368.0 348.7a2.9 2.9 0 1 0 5.8 0a2.9 2.9 0 1 0 -5.8 0M376.2 348.7a2.9 2.9 0 1 0 5.8 0a2.9 2.9 0 1 0 -5.8 0M384.5 348.7a2.9 2.9 0 1 0 5.8 0a2.9 2.9 0 1 0 -5.8 0M392.7 348.7a2.9 2.9 0 1 0 5.8 0a2.9 2.9 0 1 0 -5.8 0M401.0 348.7a2.9 2.9 0 1 0 5.8 0a2.9 2.9 0 1 0 -5.8 0M409.2 348.7a2.9 2.9 0 1 0 5.8 0a2.9 2.9 0 1 0 -5.8 0M322.6 356.9a2.9 2.9 0 1 0 5.8 0a2.9 2.9 0 1 0 -5.8 0M330.8 356.9a2.9 2.9 0 1 0 5.8 0a2.9 2.9 0 1 0 -5.8 0M339.1 356.9a2.9 2.9 0 1 0 5.8 0a2.9 2.9 0 1 0 -5.8 0M347.3 356.9a2.9 2.9 0 1 0 5.8 0a2.9 2.9 0 1 0 -5.8 0M355.6 356.9a2.9 2.9 0 1 0 5.8 0a2.9 2.9 0 1 0 -5.8 0M363.8 356.9a2.9 2.9 0 1 0 5.8 0a2.9 2.9 0 1 0 -5.8 0M372.1 356.9a2.9 2.9 0 1 0 5.8 0a2.9 2.9 0 1 0 -5.8 0M380.3 356.9a2.9 2.9 0 1 0 5.8 0a2.9 2.9 0 1 0 -5.8 0M388.6 356.9a2.9 2.9 0 1 0 5.8 0a2.9 2.9 0 1 0 -5.8 0M396.8 356.9a2.9 2.9 0 1 0 5.8 0a2.9 2.9 0 1 0 -5.8 0M326.7 365.2a2.9 2.9 0 1 0 5.8 0a2.9 2.9 0 1 0 -5.8 0M335.0 365.2a2.9 2.9 0 1 0 5.8 0a2.9 2.9 0 1 0 -5.8 0M343.2 365.2a2.9 2.9 0 1 0 5.8 0a2.9 2.9 0 1 0 -5.8 0M351.5 365.2a2.9 2.9 0 1 0 5.8 0a2.9 2.9 0 1 0 -5.8 0M359.7 365.2a2.9 2.9 0 1 0 5.8 0a2.9 2.9 0 1 0 -5.8 0M368.0 365.2a2.9 2.9 0 1 0 5.8 0a2.9 2.9 0 1 0 -5.8 0M376.2 365.2a2.9 2.9 0 1 0 5.8 0a2.9 2.9 0 1 0 -5.8 0M384.5 365.2a2.9 2.9 0 1 0 5.8 0a2.9 2.9 0 1 0 -5.8 0M392.7 365.2a2.9 2.9 0 1 0 5.8 0a2.9 2.9 0 1 0 -5.8 0M339.1 373.4a2.9 2.9 0 1 0 5.8 0a2.9 2.9 0 1 0 -5.8 0M347.3 373.4a2.9 2.9 0 1 0 5.8 0a2.9 2.9 0 1 0 -5.8 0M355.6 373.4a2.9 2.9 0 1 0 5.8 0a2.9 2.9 0 1 0 -5.8 0M363.8 373.4a2.9 2.9 0 1 0 5.8 0a2.9 2.9 0 1 0 -5.8 0M372.1 373.4a2.9 2.9 0 1 0 5.8 0a2.9 2.9 0 1 0 -5.8 0M380.3 373.4a2.9 2.9 0 1 0 5.8 0a2.9 2.9 0 1 0 -5.8 0M388.6 373.4a2.9 2.9 0 1 0 5.8 0a2.9 2.9 0 1 0 -5.8 0M359.7 381.7a2.9 2.9 0 1 0 5.8 0a2.9 2.9 0 1 0 -5.8 0M180.5 369.5a2.9 2.9 0 1 0 5.8 0a2.9 2.9 0 1 0 -5.8 0M188.7 369.5a2.9 2.9 0 1 0 5.8 0a2.9 2.9 0 1 0 -5.8 0M197.0 369.5a2.9 2.9 0 1 0 5.8 0a2.9 2.9 0 1 0 -5.8 0M205.2 369.5a2.9 2.9 0 1 0 5.8 0a2.9 2.9 0 1 0 -5.8 0M527.0 369.5a2.9 2.9 0 1 0 5.8 0a2.9 2.9 0 1 0 -5.8 0M535.2 369.5a2.9 2.9 0 1 0 5.8 0a2.9 2.9 0 1 0 -5.8 0M543.5 369.5a2.9 2.9 0 1 0 5.8 0a2.9 2.9 0 1 0 -5.8 0M176.3 377.8a2.9 2.9 0 1 0 5.8 0a2.9 2.9 0 1 0 -5.8 0M184.6 377.8a2.9 2.9 0 1 0 5.8 0a2.9 2.9 0 1 0 -5.8 0M192.8 377.8a2.9 2.9 0 1 0 5.8 0a2.9 2.9 0 1 0 -5.8 0M201.1 377.8a2.9 2.9 0 1 0 5.8 0a2.9 2.9 0 1 0 -5.8 0M209.3 377.8a2.9 2.9 0 1 0 5.8 0a2.9 2.9 0 1 0 -5.8 0M217.6 377.8a2.9 2.9 0 1 0 5.8 0a2.9 2.9 0 1 0 -5.8 0M514.6 377.8a2.9 2.9 0 1 0 5.8 0a2.9 2.9 0 1 0 -5.8 0M522.9 377.8a2.9 2.9 0 1 0 5.8 0a2.9 2.9 0 1 0 -5.8 0M531.1 377.8a2.9 2.9 0 1 0 5.8 0a2.9 2.9 0 1 0 -5.8 0M539.4 377.8a2.9 2.9 0 1 0 5.8 0a2.9 2.9 0 1 0 -5.8 0M547.6 377.8a2.9 2.9 0 1 0 5.8 0a2.9 2.9 0 1 0 -5.8 0M180.5 386.0a2.9 2.9 0 1 0 5.8 0a2.9 2.9 0 1 0 -5.8 0M188.7 386.0a2.9 2.9 0 1 0 5.8 0a2.9 2.9 0 1 0 -5.8 0M197.0 386.0a2.9 2.9 0 1 0 5.8 0a2.9 2.9 0 1 0 -5.8 0M205.2 386.0a2.9 2.9 0 1 0 5.8 0a2.9 2.9 0 1 0 -5.8 0M213.5 386.0a2.9 2.9 0 1 0 5.8 0a2.9 2.9 0 1 0 -5.8 0M221.7 386.0a2.9 2.9 0 1 0 5.8 0a2.9 2.9 0 1 0 -5.8 0M502.2 386.0a2.9 2.9 0 1 0 5.8 0a2.9 2.9 0 1 0 -5.8 0M510.5 386.0a2.9 2.9 0 1 0 5.8 0a2.9 2.9 0 1 0 -5.8 0M518.8 386.0a2.9 2.9 0 1 0 5.8 0a2.9 2.9 0 1 0 -5.8 0M527.0 386.0a2.9 2.9 0 1 0 5.8 0a2.9 2.9 0 1 0 -5.8 0M535.2 386.0a2.9 2.9 0 1 0 5.8 0a2.9 2.9 0 1 0 -5.8 0M543.5 386.0a2.9 2.9 0 1 0 5.8 0a2.9 2.9 0 1 0 -5.8 0M176.3 394.2a2.9 2.9 0 1 0 5.8 0a2.9 2.9 0 1 0 -5.8 0M184.6 394.2a2.9 2.9 0 1 0 5.8 0a2.9 2.9 0 1 0 -5.8 0M192.8 394.2a2.9 2.9 0 1 0 5.8 0a2.9 2.9 0 1 0 -5.8 0M201.1 394.2a2.9 2.9 0 1 0 5.8 0a2.9 2.9 0 1 0 -5.8 0M209.3 394.2a2.9 2.9 0 1 0 5.8 0a2.9 2.9 0 1 0 -5.8 0M217.6 394.2a2.9 2.9 0 1 0 5.8 0a2.9 2.9 0 1 0 -5.8 0M225.8 394.2a2.9 2.9 0 1 0 5.8 0a2.9 2.9 0 1 0 -5.8 0M234.1 394.2a2.9 2.9 0 1 0 5.8 0a2.9 2.9 0 1 0 -5.8 0M498.1 394.2a2.9 2.9 0 1 0 5.8 0a2.9 2.9 0 1 0 -5.8 0M506.4 394.2a2.9 2.9 0 1 0 5.8 0a2.9 2.9 0 1 0 -5.8 0M514.6 394.2a2.9 2.9 0 1 0 5.8 0a2.9 2.9 0 1 0 -5.8 0M522.9 394.2a2.9 2.9 0 1 0 5.8 0a2.9 2.9 0 1 0 -5.8 0M531.1 394.2a2.9 2.9 0 1 0 5.8 0a2.9 2.9 0 1 0 -5.8 0M539.4 394.2a2.9 2.9 0 1 0 5.8 0a2.9 2.9 0 1 0 -5.8 0M547.6 394.2a2.9 2.9 0 1 0 5.8 0a2.9 2.9 0 1 0 -5.8 0M180.5 402.5a2.9 2.9 0 1 0 5.8 0a2.9 2.9 0 1 0 -5.8 0M188.7 402.5a2.9 2.9 0 1 0 5.8 0a2.9 2.9 0 1 0 -5.8 0M197.0 402.5a2.9 2.9 0 1 0 5.8 0a2.9 2.9 0 1 0 -5.8 0M205.2 402.5a2.9 2.9 0 1 0 5.8 0a2.9 2.9 0 1 0 -5.8 0M213.5 402.5a2.9 2.9 0 1 0 5.8 0a2.9 2.9 0 1 0 -5.8 0M221.7 402.5a2.9 2.9 0 1 0 5.8 0a2.9 2.9 0 1 0 -5.8 0M230.0 402.5a2.9 2.9 0 1 0 5.8 0a2.9 2.9 0 1 0 -5.8 0M238.2 402.5a2.9 2.9 0 1 0 5.8 0a2.9 2.9 0 1 0 -5.8 0M485.8 402.5a2.9 2.9 0 1 0 5.8 0a2.9 2.9 0 1 0 -5.8 0M494.0 402.5a2.9 2.9 0 1 0 5.8 0a2.9 2.9 0 1 0 -5.8 0M502.2 402.5a2.9 2.9 0 1 0 5.8 0a2.9 2.9 0 1 0 -5.8 0M510.5 402.5a2.9 2.9 0 1 0 5.8 0a2.9 2.9 0 1 0 -5.8 0M518.8 402.5a2.9 2.9 0 1 0 5.8 0a2.9 2.9 0 1 0 -5.8 0M527.0 402.5a2.9 2.9 0 1 0 5.8 0a2.9 2.9 0 1 0 -5.8 0M535.2 402.5a2.9 2.9 0 1 0 5.8 0a2.9 2.9 0 1 0 -5.8 0M543.5 402.5a2.9 2.9 0 1 0 5.8 0a2.9 2.9 0 1 0 -5.8 0M184.6 410.8a2.9 2.9 0 1 0 5.8 0a2.9 2.9 0 1 0 -5.8 0M192.8 410.8a2.9 2.9 0 1 0 5.8 0a2.9 2.9 0 1 0 -5.8 0M201.1 410.8a2.9 2.9 0 1 0 5.8 0a2.9 2.9 0 1 0 -5.8 0M209.3 410.8a2.9 2.9 0 1 0 5.8 0a2.9 2.9 0 1 0 -5.8 0M217.6 410.8a2.9 2.9 0 1 0 5.8 0a2.9 2.9 0 1 0 -5.8 0M225.8 410.8a2.9 2.9 0 1 0 5.8 0a2.9 2.9 0 1 0 -5.8 0M234.1 410.8a2.9 2.9 0 1 0 5.8 0a2.9 2.9 0 1 0 -5.8 0M242.3 410.8a2.9 2.9 0 1 0 5.8 0a2.9 2.9 0 1 0 -5.8 0M250.6 410.8a2.9 2.9 0 1 0 5.8 0a2.9 2.9 0 1 0 -5.8 0M481.6 410.8a2.9 2.9 0 1 0 5.8 0a2.9 2.9 0 1 0 -5.8 0M489.9 410.8a2.9 2.9 0 1 0 5.8 0a2.9 2.9 0 1 0 -5.8 0M498.1 410.8a2.9 2.9 0 1 0 5.8 0a2.9 2.9 0 1 0 -5.8 0M506.4 410.8a2.9 2.9 0 1 0 5.8 0a2.9 2.9 0 1 0 -5.8 0M514.6 410.8a2.9 2.9 0 1 0 5.8 0a2.9 2.9 0 1 0 -5.8 0M522.9 410.8a2.9 2.9 0 1 0 5.8 0a2.9 2.9 0 1 0 -5.8 0M531.1 410.8a2.9 2.9 0 1 0 5.8 0a2.9 2.9 0 1 0 -5.8 0M539.4 410.8a2.9 2.9 0 1 0 5.8 0a2.9 2.9 0 1 0 -5.8 0M547.6 410.8a2.9 2.9 0 1 0 5.8 0a2.9 2.9 0 1 0 -5.8 0M180.5 419.0a2.9 2.9 0 1 0 5.8 0a2.9 2.9 0 1 0 -5.8 0M188.7 419.0a2.9 2.9 0 1 0 5.8 0a2.9 2.9 0 1 0 -5.8 0M197.0 419.0a2.9 2.9 0 1 0 5.8 0a2.9 2.9 0 1 0 -5.8 0M205.2 419.0a2.9 2.9 0 1 0 5.8 0a2.9 2.9 0 1 0 -5.8 0M213.5 419.0a2.9 2.9 0 1 0 5.8 0a2.9 2.9 0 1 0 -5.8 0M221.7 419.0a2.9 2.9 0 1 0 5.8 0a2.9 2.9 0 1 0 -5.8 0M230.0 419.0a2.9 2.9 0 1 0 5.8 0a2.9 2.9 0 1 0 -5.8 0M238.2 419.0a2.9 2.9 0 1 0 5.8 0a2.9 2.9 0 1 0 -5.8 0M246.5 419.0a2.9 2.9 0 1 0 5.8 0a2.9 2.9 0 1 0 -5.8 0M254.7 419.0a2.9 2.9 0 1 0 5.8 0a2.9 2.9 0 1 0 -5.8 0M263.0 419.0a2.9 2.9 0 1 0 5.8 0a2.9 2.9 0 1 0 -5.8 0M461.0 419.0a2.9 2.9 0 1 0 5.8 0a2.9 2.9 0 1 0 -5.8 0M469.2 419.0a2.9 2.9 0 1 0 5.8 0a2.9 2.9 0 1 0 -5.8 0M477.5 419.0a2.9 2.9 0 1 0 5.8 0a2.9 2.9 0 1 0 -5.8 0M485.8 419.0a2.9 2.9 0 1 0 5.8 0a2.9 2.9 0 1 0 -5.8 0M494.0 419.0a2.9 2.9 0 1 0 5.8 0a2.9 2.9 0 1 0 -5.8 0M502.2 419.0a2.9 2.9 0 1 0 5.8 0a2.9 2.9 0 1 0 -5.8 0M510.5 419.0a2.9 2.9 0 1 0 5.8 0a2.9 2.9 0 1 0 -5.8 0M518.8 419.0a2.9 2.9 0 1 0 5.8 0a2.9 2.9 0 1 0 -5.8 0M527.0 419.0a2.9 2.9 0 1 0 5.8 0a2.9 2.9 0 1 0 -5.8 0M535.2 419.0a2.9 2.9 0 1 0 5.8 0a2.9 2.9 0 1 0 -5.8 0M543.5 419.0a2.9 2.9 0 1 0 5.8 0a2.9 2.9 0 1 0 -5.8 0M551.8 419.0a2.9 2.9 0 1 0 5.8 0a2.9 2.9 0 1 0 -5.8 0M168.1 427.2a2.9 2.9 0 1 0 5.8 0a2.9 2.9 0 1 0 -5.8 0M176.3 427.2a2.9 2.9 0 1 0 5.8 0a2.9 2.9 0 1 0 -5.8 0M184.6 427.2a2.9 2.9 0 1 0 5.8 0a2.9 2.9 0 1 0 -5.8 0M192.8 427.2a2.9 2.9 0 1 0 5.8 0a2.9 2.9 0 1 0 -5.8 0M201.1 427.2a2.9 2.9 0 1 0 5.8 0a2.9 2.9 0 1 0 -5.8 0M209.3 427.2a2.9 2.9 0 1 0 5.8 0a2.9 2.9 0 1 0 -5.8 0M217.6 427.2a2.9 2.9 0 1 0 5.8 0a2.9 2.9 0 1 0 -5.8 0M225.8 427.2a2.9 2.9 0 1 0 5.8 0a2.9 2.9 0 1 0 -5.8 0M234.1 427.2a2.9 2.9 0 1 0 5.8 0a2.9 2.9 0 1 0 -5.8 0M242.3 427.2a2.9 2.9 0 1 0 5.8 0a2.9 2.9 0 1 0 -5.8 0M250.6 427.2a2.9 2.9 0 1 0 5.8 0a2.9 2.9 0 1 0 -5.8 0M258.9 427.2a2.9 2.9 0 1 0 5.8 0a2.9 2.9 0 1 0 -5.8 0M267.1 427.2a2.9 2.9 0 1 0 5.8 0a2.9 2.9 0 1 0 -5.8 0M275.4 427.2a2.9 2.9 0 1 0 5.8 0a2.9 2.9 0 1 0 -5.8 0M283.6 427.2a2.9 2.9 0 1 0 5.8 0a2.9 2.9 0 1 0 -5.8 0M440.4 427.2a2.9 2.9 0 1 0 5.8 0a2.9 2.9 0 1 0 -5.8 0M448.6 427.2a2.9 2.9 0 1 0 5.8 0a2.9 2.9 0 1 0 -5.8 0M456.9 427.2a2.9 2.9 0 1 0 5.8 0a2.9 2.9 0 1 0 -5.8 0M465.1 427.2a2.9 2.9 0 1 0 5.8 0a2.9 2.9 0 1 0 -5.8 0M473.4 427.2a2.9 2.9 0 1 0 5.8 0a2.9 2.9 0 1 0 -5.8 0M481.6 427.2a2.9 2.9 0 1 0 5.8 0a2.9 2.9 0 1 0 -5.8 0M489.9 427.2a2.9 2.9 0 1 0 5.8 0a2.9 2.9 0 1 0 -5.8 0M498.1 427.2a2.9 2.9 0 1 0 5.8 0a2.9 2.9 0 1 0 -5.8 0M506.4 427.2a2.9 2.9 0 1 0 5.8 0a2.9 2.9 0 1 0 -5.8 0M514.6 427.2a2.9 2.9 0 1 0 5.8 0a2.9 2.9 0 1 0 -5.8 0M522.9 427.2a2.9 2.9 0 1 0 5.8 0a2.9 2.9 0 1 0 -5.8 0M531.1 427.2a2.9 2.9 0 1 0 5.8 0a2.9 2.9 0 1 0 -5.8 0M539.4 427.2a2.9 2.9 0 1 0 5.8 0a2.9 2.9 0 1 0 -5.8 0M547.6 427.2a2.9 2.9 0 1 0 5.8 0a2.9 2.9 0 1 0 -5.8 0M555.9 427.2a2.9 2.9 0 1 0 5.8 0a2.9 2.9 0 1 0 -5.8 0M164.0 435.5a2.9 2.9 0 1 0 5.8 0a2.9 2.9 0 1 0 -5.8 0M172.2 435.5a2.9 2.9 0 1 0 5.8 0a2.9 2.9 0 1 0 -5.8 0M180.5 435.5a2.9 2.9 0 1 0 5.8 0a2.9 2.9 0 1 0 -5.8 0M188.7 435.5a2.9 2.9 0 1 0 5.8 0a2.9 2.9 0 1 0 -5.8 0M197.0 435.5a2.9 2.9 0 1 0 5.8 0a2.9 2.9 0 1 0 -5.8 0M205.2 435.5a2.9 2.9 0 1 0 5.8 0a2.9 2.9 0 1 0 -5.8 0M213.5 435.5a2.9 2.9 0 1 0 5.8 0a2.9 2.9 0 1 0 -5.8 0M221.7 435.5a2.9 2.9 0 1 0 5.8 0a2.9 2.9 0 1 0 -5.8 0M230.0 435.5a2.9 2.9 0 1 0 5.8 0a2.9 2.9 0 1 0 -5.8 0M238.2 435.5a2.9 2.9 0 1 0 5.8 0a2.9 2.9 0 1 0 -5.8 0M246.5 435.5a2.9 2.9 0 1 0 5.8 0a2.9 2.9 0 1 0 -5.8 0M254.7 435.5a2.9 2.9 0 1 0 5.8 0a2.9 2.9 0 1 0 -5.8 0M263.0 435.5a2.9 2.9 0 1 0 5.8 0a2.9 2.9 0 1 0 -5.8 0M271.2 435.5a2.9 2.9 0 1 0 5.8 0a2.9 2.9 0 1 0 -5.8 0M279.5 435.5a2.9 2.9 0 1 0 5.8 0a2.9 2.9 0 1 0 -5.8 0M287.8 435.5a2.9 2.9 0 1 0 5.8 0a2.9 2.9 0 1 0 -5.8 0M296.0 435.5a2.9 2.9 0 1 0 5.8 0a2.9 2.9 0 1 0 -5.8 0M304.2 435.5a2.9 2.9 0 1 0 5.8 0a2.9 2.9 0 1 0 -5.8 0M419.8 435.5a2.9 2.9 0 1 0 5.8 0a2.9 2.9 0 1 0 -5.8 0M428.0 435.5a2.9 2.9 0 1 0 5.8 0a2.9 2.9 0 1 0 -5.8 0M436.2 435.5a2.9 2.9 0 1 0 5.8 0a2.9 2.9 0 1 0 -5.8 0M444.5 435.5a2.9 2.9 0 1 0 5.8 0a2.9 2.9 0 1 0 -5.8 0M452.8 435.5a2.9 2.9 0 1 0 5.8 0a2.9 2.9 0 1 0 -5.8 0M461.0 435.5a2.9 2.9 0 1 0 5.8 0a2.9 2.9 0 1 0 -5.8 0M469.2 435.5a2.9 2.9 0 1 0 5.8 0a2.9 2.9 0 1 0 -5.8 0M477.5 435.5a2.9 2.9 0 1 0 5.8 0a2.9 2.9 0 1 0 -5.8 0M485.8 435.5a2.9 2.9 0 1 0 5.8 0a2.9 2.9 0 1 0 -5.8 0M494.0 435.5a2.9 2.9 0 1 0 5.8 0a2.9 2.9 0 1 0 -5.8 0M502.2 435.5a2.9 2.9 0 1 0 5.8 0a2.9 2.9 0 1 0 -5.8 0M510.5 435.5a2.9 2.9 0 1 0 5.8 0a2.9 2.9 0 1 0 -5.8 0M518.8 435.5a2.9 2.9 0 1 0 5.8 0a2.9 2.9 0 1 0 -5.8 0M527.0 435.5a2.9 2.9 0 1 0 5.8 0a2.9 2.9 0 1 0 -5.8 0M535.2 435.5a2.9 2.9 0 1 0 5.8 0a2.9 2.9 0 1 0 -5.8 0M543.5 435.5a2.9 2.9 0 1 0 5.8 0a2.9 2.9 0 1 0 -5.8 0M551.8 435.5a2.9 2.9 0 1 0 5.8 0a2.9 2.9 0 1 0 -5.8 0M560.0 435.5a2.9 2.9 0 1 0 5.8 0a2.9 2.9 0 1 0 -5.8 0M168.1 443.8a2.9 2.9 0 1 0 5.8 0a2.9 2.9 0 1 0 -5.8 0M176.3 443.8a2.9 2.9 0 1 0 5.8 0a2.9 2.9 0 1 0 -5.8 0M184.6 443.8a2.9 2.9 0 1 0 5.8 0a2.9 2.9 0 1 0 -5.8 0M192.8 443.8a2.9 2.9 0 1 0 5.8 0a2.9 2.9 0 1 0 -5.8 0M201.1 443.8a2.9 2.9 0 1 0 5.8 0a2.9 2.9 0 1 0 -5.8 0M209.3 443.8a2.9 2.9 0 1 0 5.8 0a2.9 2.9 0 1 0 -5.8 0M225.8 443.8a2.9 2.9 0 1 0 5.8 0a2.9 2.9 0 1 0 -5.8 0M234.1 443.8a2.9 2.9 0 1 0 5.8 0a2.9 2.9 0 1 0 -5.8 0M242.3 443.8a2.9 2.9 0 1 0 5.8 0a2.9 2.9 0 1 0 -5.8 0M250.6 443.8a2.9 2.9 0 1 0 5.8 0a2.9 2.9 0 1 0 -5.8 0M258.9 443.8a2.9 2.9 0 1 0 5.8 0a2.9 2.9 0 1 0 -5.8 0M267.1 443.8a2.9 2.9 0 1 0 5.8 0a2.9 2.9 0 1 0 -5.8 0M275.4 443.8a2.9 2.9 0 1 0 5.8 0a2.9 2.9 0 1 0 -5.8 0M283.6 443.8a2.9 2.9 0 1 0 5.8 0a2.9 2.9 0 1 0 -5.8 0M291.9 443.8a2.9 2.9 0 1 0 5.8 0a2.9 2.9 0 1 0 -5.8 0M300.1 443.8a2.9 2.9 0 1 0 5.8 0a2.9 2.9 0 1 0 -5.8 0M308.4 443.8a2.9 2.9 0 1 0 5.8 0a2.9 2.9 0 1 0 -5.8 0M316.6 443.8a2.9 2.9 0 1 0 5.8 0a2.9 2.9 0 1 0 -5.8 0M324.9 443.8a2.9 2.9 0 1 0 5.8 0a2.9 2.9 0 1 0 -5.8 0M407.4 443.8a2.9 2.9 0 1 0 5.8 0a2.9 2.9 0 1 0 -5.8 0M415.6 443.8a2.9 2.9 0 1 0 5.8 0a2.9 2.9 0 1 0 -5.8 0M423.9 443.8a2.9 2.9 0 1 0 5.8 0a2.9 2.9 0 1 0 -5.8 0M432.1 443.8a2.9 2.9 0 1 0 5.8 0a2.9 2.9 0 1 0 -5.8 0M440.4 443.8a2.9 2.9 0 1 0 5.8 0a2.9 2.9 0 1 0 -5.8 0M448.6 443.8a2.9 2.9 0 1 0 5.8 0a2.9 2.9 0 1 0 -5.8 0M456.9 443.8a2.9 2.9 0 1 0 5.8 0a2.9 2.9 0 1 0 -5.8 0M465.1 443.8a2.9 2.9 0 1 0 5.8 0a2.9 2.9 0 1 0 -5.8 0M473.4 443.8a2.9 2.9 0 1 0 5.8 0a2.9 2.9 0 1 0 -5.8 0M481.6 443.8a2.9 2.9 0 1 0 5.8 0a2.9 2.9 0 1 0 -5.8 0M489.9 443.8a2.9 2.9 0 1 0 5.8 0a2.9 2.9 0 1 0 -5.8 0M498.1 443.8a2.9 2.9 0 1 0 5.8 0a2.9 2.9 0 1 0 -5.8 0M514.6 443.8a2.9 2.9 0 1 0 5.8 0a2.9 2.9 0 1 0 -5.8 0M522.9 443.8a2.9 2.9 0 1 0 5.8 0a2.9 2.9 0 1 0 -5.8 0M531.1 443.8a2.9 2.9 0 1 0 5.8 0a2.9 2.9 0 1 0 -5.8 0M539.4 443.8a2.9 2.9 0 1 0 5.8 0a2.9 2.9 0 1 0 -5.8 0M547.6 443.8a2.9 2.9 0 1 0 5.8 0a2.9 2.9 0 1 0 -5.8 0M555.9 443.8a2.9 2.9 0 1 0 5.8 0a2.9 2.9 0 1 0 -5.8 0M564.1 443.8a2.9 2.9 0 1 0 5.8 0a2.9 2.9 0 1 0 -5.8 0M164.0 452.0a2.9 2.9 0 1 0 5.8 0a2.9 2.9 0 1 0 -5.8 0M172.2 452.0a2.9 2.9 0 1 0 5.8 0a2.9 2.9 0 1 0 -5.8 0M180.5 452.0a2.9 2.9 0 1 0 5.8 0a2.9 2.9 0 1 0 -5.8 0M188.7 452.0a2.9 2.9 0 1 0 5.8 0a2.9 2.9 0 1 0 -5.8 0M197.0 452.0a2.9 2.9 0 1 0 5.8 0a2.9 2.9 0 1 0 -5.8 0M254.7 452.0a2.9 2.9 0 1 0 5.8 0a2.9 2.9 0 1 0 -5.8 0M263.0 452.0a2.9 2.9 0 1 0 5.8 0a2.9 2.9 0 1 0 -5.8 0M271.2 452.0a2.9 2.9 0 1 0 5.8 0a2.9 2.9 0 1 0 -5.8 0M279.5 452.0a2.9 2.9 0 1 0 5.8 0a2.9 2.9 0 1 0 -5.8 0M287.8 452.0a2.9 2.9 0 1 0 5.8 0a2.9 2.9 0 1 0 -5.8 0M296.0 452.0a2.9 2.9 0 1 0 5.8 0a2.9 2.9 0 1 0 -5.8 0M304.2 452.0a2.9 2.9 0 1 0 5.8 0a2.9 2.9 0 1 0 -5.8 0M312.5 452.0a2.9 2.9 0 1 0 5.8 0a2.9 2.9 0 1 0 -5.8 0M320.8 452.0a2.9 2.9 0 1 0 5.8 0a2.9 2.9 0 1 0 -5.8 0M329.0 452.0a2.9 2.9 0 1 0 5.8 0a2.9 2.9 0 1 0 -5.8 0M337.2 452.0a2.9 2.9 0 1 0 5.8 0a2.9 2.9 0 1 0 -5.8 0M386.8 452.0a2.9 2.9 0 1 0 5.8 0a2.9 2.9 0 1 0 -5.8 0M395.0 452.0a2.9 2.9 0 1 0 5.8 0a2.9 2.9 0 1 0 -5.8 0M403.2 452.0a2.9 2.9 0 1 0 5.8 0a2.9 2.9 0 1 0 -5.8 0M411.5 452.0a2.9 2.9 0 1 0 5.8 0a2.9 2.9 0 1 0 -5.8 0M419.8 452.0a2.9 2.9 0 1 0 5.8 0a2.9 2.9 0 1 0 -5.8 0M428.0 452.0a2.9 2.9 0 1 0 5.8 0a2.9 2.9 0 1 0 -5.8 0M436.2 452.0a2.9 2.9 0 1 0 5.8 0a2.9 2.9 0 1 0 -5.8 0M444.5 452.0a2.9 2.9 0 1 0 5.8 0a2.9 2.9 0 1 0 -5.8 0M452.8 452.0a2.9 2.9 0 1 0 5.8 0a2.9 2.9 0 1 0 -5.8 0M461.0 452.0a2.9 2.9 0 1 0 5.8 0a2.9 2.9 0 1 0 -5.8 0M469.2 452.0a2.9 2.9 0 1 0 5.8 0a2.9 2.9 0 1 0 -5.8 0M527.0 452.0a2.9 2.9 0 1 0 5.8 0a2.9 2.9 0 1 0 -5.8 0M535.2 452.0a2.9 2.9 0 1 0 5.8 0a2.9 2.9 0 1 0 -5.8 0M543.5 452.0a2.9 2.9 0 1 0 5.8 0a2.9 2.9 0 1 0 -5.8 0M551.8 452.0a2.9 2.9 0 1 0 5.8 0a2.9 2.9 0 1 0 -5.8 0M560.0 452.0a2.9 2.9 0 1 0 5.8 0a2.9 2.9 0 1 0 -5.8 0M184.6 460.2a2.9 2.9 0 1 0 5.8 0a2.9 2.9 0 1 0 -5.8 0M275.4 460.2a2.9 2.9 0 1 0 5.8 0a2.9 2.9 0 1 0 -5.8 0M283.6 460.2a2.9 2.9 0 1 0 5.8 0a2.9 2.9 0 1 0 -5.8 0M291.9 460.2a2.9 2.9 0 1 0 5.8 0a2.9 2.9 0 1 0 -5.8 0M300.1 460.2a2.9 2.9 0 1 0 5.8 0a2.9 2.9 0 1 0 -5.8 0M308.4 460.2a2.9 2.9 0 1 0 5.8 0a2.9 2.9 0 1 0 -5.8 0M316.6 460.2a2.9 2.9 0 1 0 5.8 0a2.9 2.9 0 1 0 -5.8 0M324.9 460.2a2.9 2.9 0 1 0 5.8 0a2.9 2.9 0 1 0 -5.8 0M333.1 460.2a2.9 2.9 0 1 0 5.8 0a2.9 2.9 0 1 0 -5.8 0M341.4 460.2a2.9 2.9 0 1 0 5.8 0a2.9 2.9 0 1 0 -5.8 0M349.6 460.2a2.9 2.9 0 1 0 5.8 0a2.9 2.9 0 1 0 -5.8 0M357.9 460.2a2.9 2.9 0 1 0 5.8 0a2.9 2.9 0 1 0 -5.8 0M374.4 460.2a2.9 2.9 0 1 0 5.8 0a2.9 2.9 0 1 0 -5.8 0M382.6 460.2a2.9 2.9 0 1 0 5.8 0a2.9 2.9 0 1 0 -5.8 0M390.9 460.2a2.9 2.9 0 1 0 5.8 0a2.9 2.9 0 1 0 -5.8 0M399.1 460.2a2.9 2.9 0 1 0 5.8 0a2.9 2.9 0 1 0 -5.8 0M407.4 460.2a2.9 2.9 0 1 0 5.8 0a2.9 2.9 0 1 0 -5.8 0M415.6 460.2a2.9 2.9 0 1 0 5.8 0a2.9 2.9 0 1 0 -5.8 0M423.9 460.2a2.9 2.9 0 1 0 5.8 0a2.9 2.9 0 1 0 -5.8 0M432.1 460.2a2.9 2.9 0 1 0 5.8 0a2.9 2.9 0 1 0 -5.8 0M440.4 460.2a2.9 2.9 0 1 0 5.8 0a2.9 2.9 0 1 0 -5.8 0M448.6 460.2a2.9 2.9 0 1 0 5.8 0a2.9 2.9 0 1 0 -5.8 0M539.4 460.2a2.9 2.9 0 1 0 5.8 0a2.9 2.9 0 1 0 -5.8 0M547.6 460.2a2.9 2.9 0 1 0 5.8 0a2.9 2.9 0 1 0 -5.8 0M555.9 460.2a2.9 2.9 0 1 0 5.8 0a2.9 2.9 0 1 0 -5.8 0M296.0 468.5a2.9 2.9 0 1 0 5.8 0a2.9 2.9 0 1 0 -5.8 0M304.2 468.5a2.9 2.9 0 1 0 5.8 0a2.9 2.9 0 1 0 -5.8 0M312.5 468.5a2.9 2.9 0 1 0 5.8 0a2.9 2.9 0 1 0 -5.8 0M320.8 468.5a2.9 2.9 0 1 0 5.8 0a2.9 2.9 0 1 0 -5.8 0M329.0 468.5a2.9 2.9 0 1 0 5.8 0a2.9 2.9 0 1 0 -5.8 0M337.2 468.5a2.9 2.9 0 1 0 5.8 0a2.9 2.9 0 1 0 -5.8 0M345.5 468.5a2.9 2.9 0 1 0 5.8 0a2.9 2.9 0 1 0 -5.8 0M353.8 468.5a2.9 2.9 0 1 0 5.8 0a2.9 2.9 0 1 0 -5.8 0M362.0 468.5a2.9 2.9 0 1 0 5.8 0a2.9 2.9 0 1 0 -5.8 0M370.2 468.5a2.9 2.9 0 1 0 5.8 0a2.9 2.9 0 1 0 -5.8 0M378.5 468.5a2.9 2.9 0 1 0 5.8 0a2.9 2.9 0 1 0 -5.8 0M386.8 468.5a2.9 2.9 0 1 0 5.8 0a2.9 2.9 0 1 0 -5.8 0M395.0 468.5a2.9 2.9 0 1 0 5.8 0a2.9 2.9 0 1 0 -5.8 0M403.2 468.5a2.9 2.9 0 1 0 5.8 0a2.9 2.9 0 1 0 -5.8 0M411.5 468.5a2.9 2.9 0 1 0 5.8 0a2.9 2.9 0 1 0 -5.8 0M419.8 468.5a2.9 2.9 0 1 0 5.8 0a2.9 2.9 0 1 0 -5.8 0M428.0 468.5a2.9 2.9 0 1 0 5.8 0a2.9 2.9 0 1 0 -5.8 0M316.6 476.8a2.9 2.9 0 1 0 5.8 0a2.9 2.9 0 1 0 -5.8 0M324.9 476.8a2.9 2.9 0 1 0 5.8 0a2.9 2.9 0 1 0 -5.8 0M333.1 476.8a2.9 2.9 0 1 0 5.8 0a2.9 2.9 0 1 0 -5.8 0M341.4 476.8a2.9 2.9 0 1 0 5.8 0a2.9 2.9 0 1 0 -5.8 0M349.6 476.8a2.9 2.9 0 1 0 5.8 0a2.9 2.9 0 1 0 -5.8 0M357.9 476.8a2.9 2.9 0 1 0 5.8 0a2.9 2.9 0 1 0 -5.8 0M366.1 476.8a2.9 2.9 0 1 0 5.8 0a2.9 2.9 0 1 0 -5.8 0M374.4 476.8a2.9 2.9 0 1 0 5.8 0a2.9 2.9 0 1 0 -5.8 0M382.6 476.8a2.9 2.9 0 1 0 5.8 0a2.9 2.9 0 1 0 -5.8 0M390.9 476.8a2.9 2.9 0 1 0 5.8 0a2.9 2.9 0 1 0 -5.8 0M399.1 476.8a2.9 2.9 0 1 0 5.8 0a2.9 2.9 0 1 0 -5.8 0M407.4 476.8a2.9 2.9 0 1 0 5.8 0a2.9 2.9 0 1 0 -5.8 0M329.0 485.0a2.9 2.9 0 1 0 5.8 0a2.9 2.9 0 1 0 -5.8 0M337.2 485.0a2.9 2.9 0 1 0 5.8 0a2.9 2.9 0 1 0 -5.8 0M345.5 485.0a2.9 2.9 0 1 0 5.8 0a2.9 2.9 0 1 0 -5.8 0M353.8 485.0a2.9 2.9 0 1 0 5.8 0a2.9 2.9 0 1 0 -5.8 0M362.0 485.0a2.9 2.9 0 1 0 5.8 0a2.9 2.9 0 1 0 -5.8 0M370.2 485.0a2.9 2.9 0 1 0 5.8 0a2.9 2.9 0 1 0 -5.8 0M378.5 485.0a2.9 2.9 0 1 0 5.8 0a2.9 2.9 0 1 0 -5.8 0M386.8 485.0a2.9 2.9 0 1 0 5.8 0a2.9 2.9 0 1 0 -5.8 0M395.0 485.0a2.9 2.9 0 1 0 5.8 0a2.9 2.9 0 1 0 -5.8 0M316.6 493.2a2.9 2.9 0 1 0 5.8 0a2.9 2.9 0 1 0 -5.8 0M324.9 493.2a2.9 2.9 0 1 0 5.8 0a2.9 2.9 0 1 0 -5.8 0M333.1 493.2a2.9 2.9 0 1 0 5.8 0a2.9 2.9 0 1 0 -5.8 0M341.4 493.2a2.9 2.9 0 1 0 5.8 0a2.9 2.9 0 1 0 -5.8 0M349.6 493.2a2.9 2.9 0 1 0 5.8 0a2.9 2.9 0 1 0 -5.8 0M357.9 493.2a2.9 2.9 0 1 0 5.8 0a2.9 2.9 0 1 0 -5.8 0M366.1 493.2a2.9 2.9 0 1 0 5.8 0a2.9 2.9 0 1 0 -5.8 0M374.4 493.2a2.9 2.9 0 1 0 5.8 0a2.9 2.9 0 1 0 -5.8 0M382.6 493.2a2.9 2.9 0 1 0 5.8 0a2.9 2.9 0 1 0 -5.8 0M390.9 493.2a2.9 2.9 0 1 0 5.8 0a2.9 2.9 0 1 0 -5.8 0M399.1 493.2a2.9 2.9 0 1 0 5.8 0a2.9 2.9 0 1 0 -5.8 0M407.4 493.2a2.9 2.9 0 1 0 5.8 0a2.9 2.9 0 1 0 -5.8 0M296.0 501.5a2.9 2.9 0 1 0 5.8 0a2.9 2.9 0 1 0 -5.8 0M304.2 501.5a2.9 2.9 0 1 0 5.8 0a2.9 2.9 0 1 0 -5.8 0M312.5 501.5a2.9 2.9 0 1 0 5.8 0a2.9 2.9 0 1 0 -5.8 0M320.8 501.5a2.9 2.9 0 1 0 5.8 0a2.9 2.9 0 1 0 -5.8 0M329.0 501.5a2.9 2.9 0 1 0 5.8 0a2.9 2.9 0 1 0 -5.8 0M337.2 501.5a2.9 2.9 0 1 0 5.8 0a2.9 2.9 0 1 0 -5.8 0M345.5 501.5a2.9 2.9 0 1 0 5.8 0a2.9 2.9 0 1 0 -5.8 0M353.8 501.5a2.9 2.9 0 1 0 5.8 0a2.9 2.9 0 1 0 -5.8 0M362.0 501.5a2.9 2.9 0 1 0 5.8 0a2.9 2.9 0 1 0 -5.8 0M370.2 501.5a2.9 2.9 0 1 0 5.8 0a2.9 2.9 0 1 0 -5.8 0M378.5 501.5a2.9 2.9 0 1 0 5.8 0a2.9 2.9 0 1 0 -5.8 0M386.8 501.5a2.9 2.9 0 1 0 5.8 0a2.9 2.9 0 1 0 -5.8 0M395.0 501.5a2.9 2.9 0 1 0 5.8 0a2.9 2.9 0 1 0 -5.8 0M403.2 501.5a2.9 2.9 0 1 0 5.8 0a2.9 2.9 0 1 0 -5.8 0M411.5 501.5a2.9 2.9 0 1 0 5.8 0a2.9 2.9 0 1 0 -5.8 0M419.8 501.5a2.9 2.9 0 1 0 5.8 0a2.9 2.9 0 1 0 -5.8 0M428.0 501.5a2.9 2.9 0 1 0 5.8 0a2.9 2.9 0 1 0 -5.8 0M283.6 509.8a2.9 2.9 0 1 0 5.8 0a2.9 2.9 0 1 0 -5.8 0M291.9 509.8a2.9 2.9 0 1 0 5.8 0a2.9 2.9 0 1 0 -5.8 0M300.1 509.8a2.9 2.9 0 1 0 5.8 0a2.9 2.9 0 1 0 -5.8 0M308.4 509.8a2.9 2.9 0 1 0 5.8 0a2.9 2.9 0 1 0 -5.8 0M316.6 509.8a2.9 2.9 0 1 0 5.8 0a2.9 2.9 0 1 0 -5.8 0M324.9 509.8a2.9 2.9 0 1 0 5.8 0a2.9 2.9 0 1 0 -5.8 0M333.1 509.8a2.9 2.9 0 1 0 5.8 0a2.9 2.9 0 1 0 -5.8 0M341.4 509.8a2.9 2.9 0 1 0 5.8 0a2.9 2.9 0 1 0 -5.8 0M349.6 509.8a2.9 2.9 0 1 0 5.8 0a2.9 2.9 0 1 0 -5.8 0M374.4 509.8a2.9 2.9 0 1 0 5.8 0a2.9 2.9 0 1 0 -5.8 0M382.6 509.8a2.9 2.9 0 1 0 5.8 0a2.9 2.9 0 1 0 -5.8 0M390.9 509.8a2.9 2.9 0 1 0 5.8 0a2.9 2.9 0 1 0 -5.8 0M399.1 509.8a2.9 2.9 0 1 0 5.8 0a2.9 2.9 0 1 0 -5.8 0M407.4 509.8a2.9 2.9 0 1 0 5.8 0a2.9 2.9 0 1 0 -5.8 0M415.6 509.8a2.9 2.9 0 1 0 5.8 0a2.9 2.9 0 1 0 -5.8 0M423.9 509.8a2.9 2.9 0 1 0 5.8 0a2.9 2.9 0 1 0 -5.8 0M432.1 509.8a2.9 2.9 0 1 0 5.8 0a2.9 2.9 0 1 0 -5.8 0M440.4 509.8a2.9 2.9 0 1 0 5.8 0a2.9 2.9 0 1 0 -5.8 0M271.2 518.0a2.9 2.9 0 1 0 5.8 0a2.9 2.9 0 1 0 -5.8 0M279.5 518.0a2.9 2.9 0 1 0 5.8 0a2.9 2.9 0 1 0 -5.8 0M287.8 518.0a2.9 2.9 0 1 0 5.8 0a2.9 2.9 0 1 0 -5.8 0M296.0 518.0a2.9 2.9 0 1 0 5.8 0a2.9 2.9 0 1 0 -5.8 0M304.2 518.0a2.9 2.9 0 1 0 5.8 0a2.9 2.9 0 1 0 -5.8 0M312.5 518.0a2.9 2.9 0 1 0 5.8 0a2.9 2.9 0 1 0 -5.8 0M320.8 518.0a2.9 2.9 0 1 0 5.8 0a2.9 2.9 0 1 0 -5.8 0M329.0 518.0a2.9 2.9 0 1 0 5.8 0a2.9 2.9 0 1 0 -5.8 0M337.2 518.0a2.9 2.9 0 1 0 5.8 0a2.9 2.9 0 1 0 -5.8 0M386.8 518.0a2.9 2.9 0 1 0 5.8 0a2.9 2.9 0 1 0 -5.8 0M395.0 518.0a2.9 2.9 0 1 0 5.8 0a2.9 2.9 0 1 0 -5.8 0M403.2 518.0a2.9 2.9 0 1 0 5.8 0a2.9 2.9 0 1 0 -5.8 0M411.5 518.0a2.9 2.9 0 1 0 5.8 0a2.9 2.9 0 1 0 -5.8 0M419.8 518.0a2.9 2.9 0 1 0 5.8 0a2.9 2.9 0 1 0 -5.8 0M428.0 518.0a2.9 2.9 0 1 0 5.8 0a2.9 2.9 0 1 0 -5.8 0M436.2 518.0a2.9 2.9 0 1 0 5.8 0a2.9 2.9 0 1 0 -5.8 0M444.5 518.0a2.9 2.9 0 1 0 5.8 0a2.9 2.9 0 1 0 -5.8 0M452.8 518.0a2.9 2.9 0 1 0 5.8 0a2.9 2.9 0 1 0 -5.8 0M258.9 526.2a2.9 2.9 0 1 0 5.8 0a2.9 2.9 0 1 0 -5.8 0M267.1 526.2a2.9 2.9 0 1 0 5.8 0a2.9 2.9 0 1 0 -5.8 0M275.4 526.2a2.9 2.9 0 1 0 5.8 0a2.9 2.9 0 1 0 -5.8 0M283.6 526.2a2.9 2.9 0 1 0 5.8 0a2.9 2.9 0 1 0 -5.8 0M291.9 526.2a2.9 2.9 0 1 0 5.8 0a2.9 2.9 0 1 0 -5.8 0M300.1 526.2a2.9 2.9 0 1 0 5.8 0a2.9 2.9 0 1 0 -5.8 0M308.4 526.2a2.9 2.9 0 1 0 5.8 0a2.9 2.9 0 1 0 -5.8 0M316.6 526.2a2.9 2.9 0 1 0 5.8 0a2.9 2.9 0 1 0 -5.8 0M324.9 526.2a2.9 2.9 0 1 0 5.8 0a2.9 2.9 0 1 0 -5.8 0M399.1 526.2a2.9 2.9 0 1 0 5.8 0a2.9 2.9 0 1 0 -5.8 0M407.4 526.2a2.9 2.9 0 1 0 5.8 0a2.9 2.9 0 1 0 -5.8 0M415.6 526.2a2.9 2.9 0 1 0 5.8 0a2.9 2.9 0 1 0 -5.8 0M423.9 526.2a2.9 2.9 0 1 0 5.8 0a2.9 2.9 0 1 0 -5.8 0M432.1 526.2a2.9 2.9 0 1 0 5.8 0a2.9 2.9 0 1 0 -5.8 0M440.4 526.2a2.9 2.9 0 1 0 5.8 0a2.9 2.9 0 1 0 -5.8 0M448.6 526.2a2.9 2.9 0 1 0 5.8 0a2.9 2.9 0 1 0 -5.8 0M456.9 526.2a2.9 2.9 0 1 0 5.8 0a2.9 2.9 0 1 0 -5.8 0M465.1 526.2a2.9 2.9 0 1 0 5.8 0a2.9 2.9 0 1 0 -5.8 0M246.5 534.5a2.9 2.9 0 1 0 5.8 0a2.9 2.9 0 1 0 -5.8 0M254.7 534.5a2.9 2.9 0 1 0 5.8 0a2.9 2.9 0 1 0 -5.8 0M263.0 534.5a2.9 2.9 0 1 0 5.8 0a2.9 2.9 0 1 0 -5.8 0M271.2 534.5a2.9 2.9 0 1 0 5.8 0a2.9 2.9 0 1 0 -5.8 0M279.5 534.5a2.9 2.9 0 1 0 5.8 0a2.9 2.9 0 1 0 -5.8 0M287.8 534.5a2.9 2.9 0 1 0 5.8 0a2.9 2.9 0 1 0 -5.8 0M296.0 534.5a2.9 2.9 0 1 0 5.8 0a2.9 2.9 0 1 0 -5.8 0M304.2 534.5a2.9 2.9 0 1 0 5.8 0a2.9 2.9 0 1 0 -5.8 0M312.5 534.5a2.9 2.9 0 1 0 5.8 0a2.9 2.9 0 1 0 -5.8 0M411.5 534.5a2.9 2.9 0 1 0 5.8 0a2.9 2.9 0 1 0 -5.8 0M419.8 534.5a2.9 2.9 0 1 0 5.8 0a2.9 2.9 0 1 0 -5.8 0M428.0 534.5a2.9 2.9 0 1 0 5.8 0a2.9 2.9 0 1 0 -5.8 0M436.2 534.5a2.9 2.9 0 1 0 5.8 0a2.9 2.9 0 1 0 -5.8 0M444.5 534.5a2.9 2.9 0 1 0 5.8 0a2.9 2.9 0 1 0 -5.8 0M452.8 534.5a2.9 2.9 0 1 0 5.8 0a2.9 2.9 0 1 0 -5.8 0M461.0 534.5a2.9 2.9 0 1 0 5.8 0a2.9 2.9 0 1 0 -5.8 0M469.2 534.5a2.9 2.9 0 1 0 5.8 0a2.9 2.9 0 1 0 -5.8 0M477.5 534.5a2.9 2.9 0 1 0 5.8 0a2.9 2.9 0 1 0 -5.8 0M217.6 542.8a2.9 2.9 0 1 0 5.8 0a2.9 2.9 0 1 0 -5.8 0M225.8 542.8a2.9 2.9 0 1 0 5.8 0a2.9 2.9 0 1 0 -5.8 0M234.1 542.8a2.9 2.9 0 1 0 5.8 0a2.9 2.9 0 1 0 -5.8 0M242.3 542.8a2.9 2.9 0 1 0 5.8 0a2.9 2.9 0 1 0 -5.8 0M250.6 542.8a2.9 2.9 0 1 0 5.8 0a2.9 2.9 0 1 0 -5.8 0M258.9 542.8a2.9 2.9 0 1 0 5.8 0a2.9 2.9 0 1 0 -5.8 0M267.1 542.8a2.9 2.9 0 1 0 5.8 0a2.9 2.9 0 1 0 -5.8 0M275.4 542.8a2.9 2.9 0 1 0 5.8 0a2.9 2.9 0 1 0 -5.8 0M283.6 542.8a2.9 2.9 0 1 0 5.8 0a2.9 2.9 0 1 0 -5.8 0M291.9 542.8a2.9 2.9 0 1 0 5.8 0a2.9 2.9 0 1 0 -5.8 0M300.1 542.8a2.9 2.9 0 1 0 5.8 0a2.9 2.9 0 1 0 -5.8 0M423.9 542.8a2.9 2.9 0 1 0 5.8 0a2.9 2.9 0 1 0 -5.8 0M432.1 542.8a2.9 2.9 0 1 0 5.8 0a2.9 2.9 0 1 0 -5.8 0M440.4 542.8a2.9 2.9 0 1 0 5.8 0a2.9 2.9 0 1 0 -5.8 0M448.6 542.8a2.9 2.9 0 1 0 5.8 0a2.9 2.9 0 1 0 -5.8 0M456.9 542.8a2.9 2.9 0 1 0 5.8 0a2.9 2.9 0 1 0 -5.8 0M465.1 542.8a2.9 2.9 0 1 0 5.8 0a2.9 2.9 0 1 0 -5.8 0M473.4 542.8a2.9 2.9 0 1 0 5.8 0a2.9 2.9 0 1 0 -5.8 0M481.6 542.8a2.9 2.9 0 1 0 5.8 0a2.9 2.9 0 1 0 -5.8 0M489.9 542.8a2.9 2.9 0 1 0 5.8 0a2.9 2.9 0 1 0 -5.8 0M498.1 542.8a2.9 2.9 0 1 0 5.8 0a2.9 2.9 0 1 0 -5.8 0M506.4 542.8a2.9 2.9 0 1 0 5.8 0a2.9 2.9 0 1 0 -5.8 0M188.7 551.0a2.9 2.9 0 1 0 5.8 0a2.9 2.9 0 1 0 -5.8 0M197.0 551.0a2.9 2.9 0 1 0 5.8 0a2.9 2.9 0 1 0 -5.8 0M205.2 551.0a2.9 2.9 0 1 0 5.8 0a2.9 2.9 0 1 0 -5.8 0M213.5 551.0a2.9 2.9 0 1 0 5.8 0a2.9 2.9 0 1 0 -5.8 0M221.7 551.0a2.9 2.9 0 1 0 5.8 0a2.9 2.9 0 1 0 -5.8 0M230.0 551.0a2.9 2.9 0 1 0 5.8 0a2.9 2.9 0 1 0 -5.8 0M238.2 551.0a2.9 2.9 0 1 0 5.8 0a2.9 2.9 0 1 0 -5.8 0M246.5 551.0a2.9 2.9 0 1 0 5.8 0a2.9 2.9 0 1 0 -5.8 0M254.7 551.0a2.9 2.9 0 1 0 5.8 0a2.9 2.9 0 1 0 -5.8 0M263.0 551.0a2.9 2.9 0 1 0 5.8 0a2.9 2.9 0 1 0 -5.8 0M271.2 551.0a2.9 2.9 0 1 0 5.8 0a2.9 2.9 0 1 0 -5.8 0M279.5 551.0a2.9 2.9 0 1 0 5.8 0a2.9 2.9 0 1 0 -5.8 0M287.8 551.0a2.9 2.9 0 1 0 5.8 0a2.9 2.9 0 1 0 -5.8 0M436.2 551.0a2.9 2.9 0 1 0 5.8 0a2.9 2.9 0 1 0 -5.8 0M444.5 551.0a2.9 2.9 0 1 0 5.8 0a2.9 2.9 0 1 0 -5.8 0M452.8 551.0a2.9 2.9 0 1 0 5.8 0a2.9 2.9 0 1 0 -5.8 0M461.0 551.0a2.9 2.9 0 1 0 5.8 0a2.9 2.9 0 1 0 -5.8 0M469.2 551.0a2.9 2.9 0 1 0 5.8 0a2.9 2.9 0 1 0 -5.8 0M477.5 551.0a2.9 2.9 0 1 0 5.8 0a2.9 2.9 0 1 0 -5.8 0M485.8 551.0a2.9 2.9 0 1 0 5.8 0a2.9 2.9 0 1 0 -5.8 0M494.0 551.0a2.9 2.9 0 1 0 5.8 0a2.9 2.9 0 1 0 -5.8 0M502.2 551.0a2.9 2.9 0 1 0 5.8 0a2.9 2.9 0 1 0 -5.8 0M510.5 551.0a2.9 2.9 0 1 0 5.8 0a2.9 2.9 0 1 0 -5.8 0M518.8 551.0a2.9 2.9 0 1 0 5.8 0a2.9 2.9 0 1 0 -5.8 0M527.0 551.0a2.9 2.9 0 1 0 5.8 0a2.9 2.9 0 1 0 -5.8 0M535.2 551.0a2.9 2.9 0 1 0 5.8 0a2.9 2.9 0 1 0 -5.8 0M168.1 559.2a2.9 2.9 0 1 0 5.8 0a2.9 2.9 0 1 0 -5.8 0M176.3 559.2a2.9 2.9 0 1 0 5.8 0a2.9 2.9 0 1 0 -5.8 0M184.6 559.2a2.9 2.9 0 1 0 5.8 0a2.9 2.9 0 1 0 -5.8 0M192.8 559.2a2.9 2.9 0 1 0 5.8 0a2.9 2.9 0 1 0 -5.8 0M201.1 559.2a2.9 2.9 0 1 0 5.8 0a2.9 2.9 0 1 0 -5.8 0M209.3 559.2a2.9 2.9 0 1 0 5.8 0a2.9 2.9 0 1 0 -5.8 0M217.6 559.2a2.9 2.9 0 1 0 5.8 0a2.9 2.9 0 1 0 -5.8 0M225.8 559.2a2.9 2.9 0 1 0 5.8 0a2.9 2.9 0 1 0 -5.8 0M234.1 559.2a2.9 2.9 0 1 0 5.8 0a2.9 2.9 0 1 0 -5.8 0M242.3 559.2a2.9 2.9 0 1 0 5.8 0a2.9 2.9 0 1 0 -5.8 0M250.6 559.2a2.9 2.9 0 1 0 5.8 0a2.9 2.9 0 1 0 -5.8 0M258.9 559.2a2.9 2.9 0 1 0 5.8 0a2.9 2.9 0 1 0 -5.8 0M267.1 559.2a2.9 2.9 0 1 0 5.8 0a2.9 2.9 0 1 0 -5.8 0M275.4 559.2a2.9 2.9 0 1 0 5.8 0a2.9 2.9 0 1 0 -5.8 0M448.6 559.2a2.9 2.9 0 1 0 5.8 0a2.9 2.9 0 1 0 -5.8 0M456.9 559.2a2.9 2.9 0 1 0 5.8 0a2.9 2.9 0 1 0 -5.8 0M465.1 559.2a2.9 2.9 0 1 0 5.8 0a2.9 2.9 0 1 0 -5.8 0M473.4 559.2a2.9 2.9 0 1 0 5.8 0a2.9 2.9 0 1 0 -5.8 0M481.6 559.2a2.9 2.9 0 1 0 5.8 0a2.9 2.9 0 1 0 -5.8 0M489.9 559.2a2.9 2.9 0 1 0 5.8 0a2.9 2.9 0 1 0 -5.8 0M498.1 559.2a2.9 2.9 0 1 0 5.8 0a2.9 2.9 0 1 0 -5.8 0M506.4 559.2a2.9 2.9 0 1 0 5.8 0a2.9 2.9 0 1 0 -5.8 0M514.6 559.2a2.9 2.9 0 1 0 5.8 0a2.9 2.9 0 1 0 -5.8 0M522.9 559.2a2.9 2.9 0 1 0 5.8 0a2.9 2.9 0 1 0 -5.8 0M531.1 559.2a2.9 2.9 0 1 0 5.8 0a2.9 2.9 0 1 0 -5.8 0M539.4 559.2a2.9 2.9 0 1 0 5.8 0a2.9 2.9 0 1 0 -5.8 0M547.6 559.2a2.9 2.9 0 1 0 5.8 0a2.9 2.9 0 1 0 -5.8 0M164.0 567.5a2.9 2.9 0 1 0 5.8 0a2.9 2.9 0 1 0 -5.8 0M172.2 567.5a2.9 2.9 0 1 0 5.8 0a2.9 2.9 0 1 0 -5.8 0M180.5 567.5a2.9 2.9 0 1 0 5.8 0a2.9 2.9 0 1 0 -5.8 0M188.7 567.5a2.9 2.9 0 1 0 5.8 0a2.9 2.9 0 1 0 -5.8 0M197.0 567.5a2.9 2.9 0 1 0 5.8 0a2.9 2.9 0 1 0 -5.8 0M205.2 567.5a2.9 2.9 0 1 0 5.8 0a2.9 2.9 0 1 0 -5.8 0M213.5 567.5a2.9 2.9 0 1 0 5.8 0a2.9 2.9 0 1 0 -5.8 0M221.7 567.5a2.9 2.9 0 1 0 5.8 0a2.9 2.9 0 1 0 -5.8 0M230.0 567.5a2.9 2.9 0 1 0 5.8 0a2.9 2.9 0 1 0 -5.8 0M238.2 567.5a2.9 2.9 0 1 0 5.8 0a2.9 2.9 0 1 0 -5.8 0M246.5 567.5a2.9 2.9 0 1 0 5.8 0a2.9 2.9 0 1 0 -5.8 0M254.7 567.5a2.9 2.9 0 1 0 5.8 0a2.9 2.9 0 1 0 -5.8 0M263.0 567.5a2.9 2.9 0 1 0 5.8 0a2.9 2.9 0 1 0 -5.8 0M271.2 567.5a2.9 2.9 0 1 0 5.8 0a2.9 2.9 0 1 0 -5.8 0M461.0 567.5a2.9 2.9 0 1 0 5.8 0a2.9 2.9 0 1 0 -5.8 0M469.2 567.5a2.9 2.9 0 1 0 5.8 0a2.9 2.9 0 1 0 -5.8 0M477.5 567.5a2.9 2.9 0 1 0 5.8 0a2.9 2.9 0 1 0 -5.8 0M485.8 567.5a2.9 2.9 0 1 0 5.8 0a2.9 2.9 0 1 0 -5.8 0M494.0 567.5a2.9 2.9 0 1 0 5.8 0a2.9 2.9 0 1 0 -5.8 0M502.2 567.5a2.9 2.9 0 1 0 5.8 0a2.9 2.9 0 1 0 -5.8 0M510.5 567.5a2.9 2.9 0 1 0 5.8 0a2.9 2.9 0 1 0 -5.8 0M518.8 567.5a2.9 2.9 0 1 0 5.8 0a2.9 2.9 0 1 0 -5.8 0M527.0 567.5a2.9 2.9 0 1 0 5.8 0a2.9 2.9 0 1 0 -5.8 0M535.2 567.5a2.9 2.9 0 1 0 5.8 0a2.9 2.9 0 1 0 -5.8 0M543.5 567.5a2.9 2.9 0 1 0 5.8 0a2.9 2.9 0 1 0 -5.8 0M551.8 567.5a2.9 2.9 0 1 0 5.8 0a2.9 2.9 0 1 0 -5.8 0M560.0 567.5a2.9 2.9 0 1 0 5.8 0a2.9 2.9 0 1 0 -5.8 0M159.8 575.8a2.9 2.9 0 1 0 5.8 0a2.9 2.9 0 1 0 -5.8 0M168.1 575.8a2.9 2.9 0 1 0 5.8 0a2.9 2.9 0 1 0 -5.8 0M176.3 575.8a2.9 2.9 0 1 0 5.8 0a2.9 2.9 0 1 0 -5.8 0M184.6 575.8a2.9 2.9 0 1 0 5.8 0a2.9 2.9 0 1 0 -5.8 0M192.8 575.8a2.9 2.9 0 1 0 5.8 0a2.9 2.9 0 1 0 -5.8 0M201.1 575.8a2.9 2.9 0 1 0 5.8 0a2.9 2.9 0 1 0 -5.8 0M209.3 575.8a2.9 2.9 0 1 0 5.8 0a2.9 2.9 0 1 0 -5.8 0M217.6 575.8a2.9 2.9 0 1 0 5.8 0a2.9 2.9 0 1 0 -5.8 0M225.8 575.8a2.9 2.9 0 1 0 5.8 0a2.9 2.9 0 1 0 -5.8 0M234.1 575.8a2.9 2.9 0 1 0 5.8 0a2.9 2.9 0 1 0 -5.8 0M242.3 575.8a2.9 2.9 0 1 0 5.8 0a2.9 2.9 0 1 0 -5.8 0M250.6 575.8a2.9 2.9 0 1 0 5.8 0a2.9 2.9 0 1 0 -5.8 0M258.9 575.8a2.9 2.9 0 1 0 5.8 0a2.9 2.9 0 1 0 -5.8 0M465.1 575.8a2.9 2.9 0 1 0 5.8 0a2.9 2.9 0 1 0 -5.8 0M473.4 575.8a2.9 2.9 0 1 0 5.8 0a2.9 2.9 0 1 0 -5.8 0M481.6 575.8a2.9 2.9 0 1 0 5.8 0a2.9 2.9 0 1 0 -5.8 0M489.9 575.8a2.9 2.9 0 1 0 5.8 0a2.9 2.9 0 1 0 -5.8 0M498.1 575.8a2.9 2.9 0 1 0 5.8 0a2.9 2.9 0 1 0 -5.8 0M506.4 575.8a2.9 2.9 0 1 0 5.8 0a2.9 2.9 0 1 0 -5.8 0M514.6 575.8a2.9 2.9 0 1 0 5.8 0a2.9 2.9 0 1 0 -5.8 0M522.9 575.8a2.9 2.9 0 1 0 5.8 0a2.9 2.9 0 1 0 -5.8 0M531.1 575.8a2.9 2.9 0 1 0 5.8 0a2.9 2.9 0 1 0 -5.8 0M539.4 575.8a2.9 2.9 0 1 0 5.8 0a2.9 2.9 0 1 0 -5.8 0M547.6 575.8a2.9 2.9 0 1 0 5.8 0a2.9 2.9 0 1 0 -5.8 0M555.9 575.8a2.9 2.9 0 1 0 5.8 0a2.9 2.9 0 1 0 -5.8 0M564.1 575.8a2.9 2.9 0 1 0 5.8 0a2.9 2.9 0 1 0 -5.8 0M164.0 584.0a2.9 2.9 0 1 0 5.8 0a2.9 2.9 0 1 0 -5.8 0M172.2 584.0a2.9 2.9 0 1 0 5.8 0a2.9 2.9 0 1 0 -5.8 0M180.5 584.0a2.9 2.9 0 1 0 5.8 0a2.9 2.9 0 1 0 -5.8 0M188.7 584.0a2.9 2.9 0 1 0 5.8 0a2.9 2.9 0 1 0 -5.8 0M197.0 584.0a2.9 2.9 0 1 0 5.8 0a2.9 2.9 0 1 0 -5.8 0M205.2 584.0a2.9 2.9 0 1 0 5.8 0a2.9 2.9 0 1 0 -5.8 0M213.5 584.0a2.9 2.9 0 1 0 5.8 0a2.9 2.9 0 1 0 -5.8 0M221.7 584.0a2.9 2.9 0 1 0 5.8 0a2.9 2.9 0 1 0 -5.8 0M230.0 584.0a2.9 2.9 0 1 0 5.8 0a2.9 2.9 0 1 0 -5.8 0M238.2 584.0a2.9 2.9 0 1 0 5.8 0a2.9 2.9 0 1 0 -5.8 0M246.5 584.0a2.9 2.9 0 1 0 5.8 0a2.9 2.9 0 1 0 -5.8 0M254.7 584.0a2.9 2.9 0 1 0 5.8 0a2.9 2.9 0 1 0 -5.8 0M469.2 584.0a2.9 2.9 0 1 0 5.8 0a2.9 2.9 0 1 0 -5.8 0M477.5 584.0a2.9 2.9 0 1 0 5.8 0a2.9 2.9 0 1 0 -5.8 0M485.8 584.0a2.9 2.9 0 1 0 5.8 0a2.9 2.9 0 1 0 -5.8 0M494.0 584.0a2.9 2.9 0 1 0 5.8 0a2.9 2.9 0 1 0 -5.8 0M502.2 584.0a2.9 2.9 0 1 0 5.8 0a2.9 2.9 0 1 0 -5.8 0M510.5 584.0a2.9 2.9 0 1 0 5.8 0a2.9 2.9 0 1 0 -5.8 0M518.8 584.0a2.9 2.9 0 1 0 5.8 0a2.9 2.9 0 1 0 -5.8 0M527.0 584.0a2.9 2.9 0 1 0 5.8 0a2.9 2.9 0 1 0 -5.8 0M535.2 584.0a2.9 2.9 0 1 0 5.8 0a2.9 2.9 0 1 0 -5.8 0M543.5 584.0a2.9 2.9 0 1 0 5.8 0a2.9 2.9 0 1 0 -5.8 0M551.8 584.0a2.9 2.9 0 1 0 5.8 0a2.9 2.9 0 1 0 -5.8 0M560.0 584.0a2.9 2.9 0 1 0 5.8 0a2.9 2.9 0 1 0 -5.8 0M168.1 592.2a2.9 2.9 0 1 0 5.8 0a2.9 2.9 0 1 0 -5.8 0M176.3 592.2a2.9 2.9 0 1 0 5.8 0a2.9 2.9 0 1 0 -5.8 0M184.6 592.2a2.9 2.9 0 1 0 5.8 0a2.9 2.9 0 1 0 -5.8 0M192.8 592.2a2.9 2.9 0 1 0 5.8 0a2.9 2.9 0 1 0 -5.8 0M201.1 592.2a2.9 2.9 0 1 0 5.8 0a2.9 2.9 0 1 0 -5.8 0M209.3 592.2a2.9 2.9 0 1 0 5.8 0a2.9 2.9 0 1 0 -5.8 0M217.6 592.2a2.9 2.9 0 1 0 5.8 0a2.9 2.9 0 1 0 -5.8 0M225.8 592.2a2.9 2.9 0 1 0 5.8 0a2.9 2.9 0 1 0 -5.8 0M234.1 592.2a2.9 2.9 0 1 0 5.8 0a2.9 2.9 0 1 0 -5.8 0M242.3 592.2a2.9 2.9 0 1 0 5.8 0a2.9 2.9 0 1 0 -5.8 0M250.6 592.2a2.9 2.9 0 1 0 5.8 0a2.9 2.9 0 1 0 -5.8 0M473.4 592.2a2.9 2.9 0 1 0 5.8 0a2.9 2.9 0 1 0 -5.8 0M481.6 592.2a2.9 2.9 0 1 0 5.8 0a2.9 2.9 0 1 0 -5.8 0M489.9 592.2a2.9 2.9 0 1 0 5.8 0a2.9 2.9 0 1 0 -5.8 0M498.1 592.2a2.9 2.9 0 1 0 5.8 0a2.9 2.9 0 1 0 -5.8 0M506.4 592.2a2.9 2.9 0 1 0 5.8 0a2.9 2.9 0 1 0 -5.8 0M514.6 592.2a2.9 2.9 0 1 0 5.8 0a2.9 2.9 0 1 0 -5.8 0M522.9 592.2a2.9 2.9 0 1 0 5.8 0a2.9 2.9 0 1 0 -5.8 0M531.1 592.2a2.9 2.9 0 1 0 5.8 0a2.9 2.9 0 1 0 -5.8 0M539.4 592.2a2.9 2.9 0 1 0 5.8 0a2.9 2.9 0 1 0 -5.8 0M547.6 592.2a2.9 2.9 0 1 0 5.8 0a2.9 2.9 0 1 0 -5.8 0M555.9 592.2a2.9 2.9 0 1 0 5.8 0a2.9 2.9 0 1 0 -5.8 0M205.2 600.5a2.9 2.9 0 1 0 5.8 0a2.9 2.9 0 1 0 -5.8 0M213.5 600.5a2.9 2.9 0 1 0 5.8 0a2.9 2.9 0 1 0 -5.8 0M221.7 600.5a2.9 2.9 0 1 0 5.8 0a2.9 2.9 0 1 0 -5.8 0M230.0 600.5a2.9 2.9 0 1 0 5.8 0a2.9 2.9 0 1 0 -5.8 0M238.2 600.5a2.9 2.9 0 1 0 5.8 0a2.9 2.9 0 1 0 -5.8 0M246.5 600.5a2.9 2.9 0 1 0 5.8 0a2.9 2.9 0 1 0 -5.8 0M477.5 600.5a2.9 2.9 0 1 0 5.8 0a2.9 2.9 0 1 0 -5.8 0M485.8 600.5a2.9 2.9 0 1 0 5.8 0a2.9 2.9 0 1 0 -5.8 0M494.0 600.5a2.9 2.9 0 1 0 5.8 0a2.9 2.9 0 1 0 -5.8 0M502.2 600.5a2.9 2.9 0 1 0 5.8 0a2.9 2.9 0 1 0 -5.8 0M510.5 600.5a2.9 2.9 0 1 0 5.8 0a2.9 2.9 0 1 0 -5.8 0M518.8 600.5a2.9 2.9 0 1 0 5.8 0a2.9 2.9 0 1 0 -5.8 0M527.0 600.5a2.9 2.9 0 1 0 5.8 0a2.9 2.9 0 1 0 -5.8 0M535.2 600.5a2.9 2.9 0 1 0 5.8 0a2.9 2.9 0 1 0 -5.8 0M209.3 608.8a2.9 2.9 0 1 0 5.8 0a2.9 2.9 0 1 0 -5.8 0M217.6 608.8a2.9 2.9 0 1 0 5.8 0a2.9 2.9 0 1 0 -5.8 0M225.8 608.8a2.9 2.9 0 1 0 5.8 0a2.9 2.9 0 1 0 -5.8 0M234.1 608.8a2.9 2.9 0 1 0 5.8 0a2.9 2.9 0 1 0 -5.8 0M242.3 608.8a2.9 2.9 0 1 0 5.8 0a2.9 2.9 0 1 0 -5.8 0M250.6 608.8a2.9 2.9 0 1 0 5.8 0a2.9 2.9 0 1 0 -5.8 0M481.6 608.8a2.9 2.9 0 1 0 5.8 0a2.9 2.9 0 1 0 -5.8 0M489.9 608.8a2.9 2.9 0 1 0 5.8 0a2.9 2.9 0 1 0 -5.8 0M498.1 608.8a2.9 2.9 0 1 0 5.8 0a2.9 2.9 0 1 0 -5.8 0M506.4 608.8a2.9 2.9 0 1 0 5.8 0a2.9 2.9 0 1 0 -5.8 0M514.6 608.8a2.9 2.9 0 1 0 5.8 0a2.9 2.9 0 1 0 -5.8 0M221.7 617.0a2.9 2.9 0 1 0 5.8 0a2.9 2.9 0 1 0 -5.8 0M230.0 617.0a2.9 2.9 0 1 0 5.8 0a2.9 2.9 0 1 0 -5.8 0M238.2 617.0a2.9 2.9 0 1 0 5.8 0a2.9 2.9 0 1 0 -5.8 0M246.5 617.0a2.9 2.9 0 1 0 5.8 0a2.9 2.9 0 1 0 -5.8 0M485.8 617.0a2.9 2.9 0 1 0 5.8 0a2.9 2.9 0 1 0 -5.8 0M494.0 617.0a2.9 2.9 0 1 0 5.8 0a2.9 2.9 0 1 0 -5.8 0M502.2 617.0a2.9 2.9 0 1 0 5.8 0a2.9 2.9 0 1 0 -5.8 0M510.5 617.0a2.9 2.9 0 1 0 5.8 0a2.9 2.9 0 1 0 -5.8 0" fill="none" stroke="#08d808" stroke-width="2.35"/></svg>
</div>
<div class="a" style="left:262px;top:710px;width:754px;height:2px;background:#a0a0a0"></div>
<div class="a" style="left:262px;top:712px;width:754px;height:29px;background:#fff"></div>

<!-- status bar -->
<div class="a" style="left:8px;top:741px;width:1008px;height:1px;background:#a0a0a0"></div>
<div class="a" style="left:8px;top:742px;width:1008px;height:18px;background:#f0f0f0"></div>
<div class="a" style="left:8px;top:742px;width:641px;height:17px;border-right:1px solid #fff"></div>
<div class="a" style="left:651px;top:742px;width:199px;height:17px;border-top:1px solid #a0a0a0;border-left:1px solid #a0a0a0;border-right:1px solid #fff"></div>
<div class="t" style="left:655px;top:745px;font-size:10.5px">Toggle layer visibility</div>
<div class="a" style="left:852px;top:742px;width:147px;height:17px;border-top:1px solid #a0a0a0;border-left:1px solid #a0a0a0;border-right:1px solid #fff"></div>
<div class="t" style="left:820px;width:178px;top:745px;font-size:11px;text-align:right">-41.4464, 46.4929</div>
<svg class="a" style="left:1002px;top:746px" width="12" height="12"><path d="M11 1L1 11M11 5L5 11M11 9L9 11" stroke="#a0a0a0" stroke-width="1.5"/></svg>

<!-- cursor -->
<svg class="a" style="left:584px;top:19px" width="14" height="21"><path d="M0.5 0.5V16.5L4.2 13L6.8 18.8L9.3 17.7L6.9 12.2H11.8Z" fill="#fff" stroke="#000" stroke-width="1" stroke-linejoin="round"/></svg>
</body></html>
